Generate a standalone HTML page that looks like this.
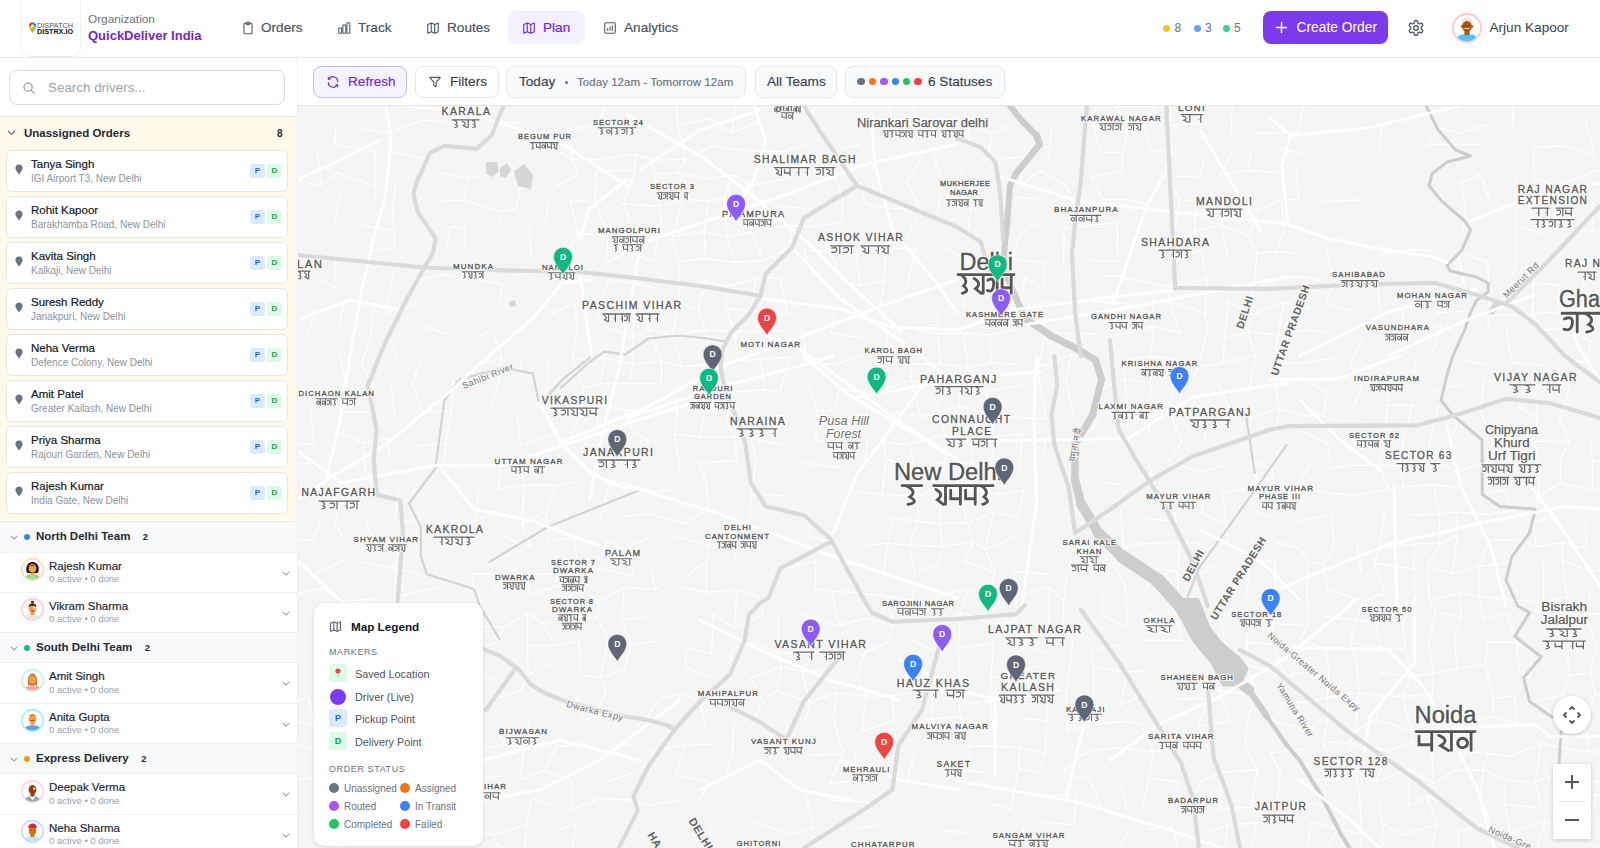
<!DOCTYPE html>
<html><head><meta charset="utf-8"><style>*{box-sizing:border-box;margin:0;padding:0}
html,body{width:1600px;height:848px;overflow:hidden;background:#fff;font-family:"Liberation Sans",sans-serif;color:#111827}
.abs{position:absolute}
#hdr{position:absolute;left:0;top:0;width:1600px;height:58px;background:#fff;border-bottom:1px solid #e5e7eb;z-index:5}
#logo{position:absolute;left:21px;top:-8px;width:60px;height:65px;border:1px solid #f0f1f3;border-radius:10px;background:#fff}
.nav{position:absolute;top:11px;height:33px;border-radius:8px;font-size:13.6px;color:#4b5563;line-height:33px}
.nav svg{position:absolute;top:10px}
.nav span{position:absolute;top:0;-webkit-text-stroke:0.2px currentColor}
#side{position:absolute;left:0;top:58px;width:298px;height:790px;background:#fff;border-right:1px solid #eceef1;overflow:hidden;z-index:6}
#tb{position:absolute;left:297px;top:58px;width:1303px;height:48px;background:#fff;border-bottom:1px solid #e5e7eb;z-index:4}
.btn{position:absolute;top:8px;height:32px;border:1px solid #e5e7eb;border-radius:8px;background:#fff;font-size:13.6px;line-height:30px;color:#374151}
.btn svg{position:absolute;top:8px}
.btn>span{-webkit-text-stroke:0.15px currentColor}
#map{position:absolute;left:297px;top:106px;width:1303px;height:742px;background:#f5f5f5;overflow:hidden}
.card{position:absolute;left:6px;width:282px;height:42px;background:#fff;border:1px solid #e5e7eb;border-radius:6px}
.pin{position:absolute;left:8px;top:13px}
.cn{position:absolute;left:24px;top:7px;font-size:11.5px;color:#111827;-webkit-text-stroke:0.2px #111827}
.ca{position:absolute;left:24px;top:22px;font-size:10px;color:#8b93a1}
.bp,.bd{position:absolute;top:13px;width:15px;height:14px;border-radius:3px;font-size:8px;font-weight:bold;text-align:center;line-height:14px}
.bp{left:243px;background:#dbeafe;color:#2563eb}
.bd{left:260px;background:#dcfce7;color:#16a34a}
.th{position:absolute;left:0;width:297px;height:30.5px;background:#f8fafc;border-top:1px solid #eceef1}
.dot{position:absolute;left:24px;top:12px;width:6px;height:6px;border-radius:50%}
.tn{position:absolute;left:36px;top:8px;font-size:11.5px;font-weight:bold;color:#1f2937}
.tc{position:absolute;left:142px;top:9px;font-size:10px;font-weight:bold;color:#1f2937}
.dr{position:absolute;left:0;width:297px;height:40.2px;background:#fff;border-top:1px solid #eef0f2}
.av{position:absolute;left:20.5px;top:5.5px}
.dn{position:absolute;left:49px;top:7px;font-size:11.5px;color:#1f2937;-webkit-text-stroke:0.2px #1f2937}
.ds{position:absolute;left:49px;top:20.5px;font-size:9.5px;color:#9ca3af}
#legend{position:absolute;left:314px;top:603px;width:169px;height:243px;background:#fff;border-radius:10px;box-shadow:0 1px 4px rgba(0,0,0,0.12);z-index:3}
#legend .t{position:absolute;font-size:10.8px;color:#4b5563}
#legend .h{position:absolute;font-size:9px;color:#6b7280;letter-spacing:0.6px}
#legend .ic{position:absolute;left:15px;width:18px;height:18px;border-radius:3px;font-size:9px;font-weight:bold;text-align:center;line-height:18px}
#legend .sd{position:absolute;width:10px;height:10px;border-radius:50%}
#legend .st{position:absolute;font-size:10px;color:#6b7280}
</style></head><body>
<div id="hdr">
<div id="logo"><svg class="abs" style="left:6px;top:28px" width="48" height="16" viewBox="0 0 48 16"><path d="M4.5 1.5a3.6 3.6 0 0 0-3.6 3.6c0 2.6 3.6 7 3.6 7s3.6-4.4 3.6-7a3.6 3.6 0 0 0-3.6-3.6z" fill="#8bc34a"/><path d="M0.9 5.1a3.6 3.6 0 0 1 3.6-3.6v3.6z" fill="#e53935"/><path d="M4.5 1.5a3.6 3.6 0 0 1 3.6 3.6H4.5z" fill="#1e88e5"/><path d="M0.9 5.1h3.6v3.5L2 8z" fill="#fbc02d"/><circle cx="4.5" cy="5" r="1.4" fill="#fff"/><text x="9" y="6.6" font-family="Liberation Sans" font-size="6.6" fill="#555" textLength="36" lengthAdjust="spacingAndGlyphs">DISPATCH</text><text x="9" y="12.6" font-family="Liberation Sans" font-weight="bold" font-size="6.8" fill="#111" textLength="36" lengthAdjust="spacingAndGlyphs">DISTRX.IO</text></svg></div>
<div class="abs" style="left:88px;top:12px;font-size:11.8px;color:#6b7280">Organization</div>
<div class="abs" style="left:88px;top:28px;font-size:13px;font-weight:bold;color:#6d28d9">QuickDeliver India</div>
<div class="nav" style="left:230px;width:82px"><svg style="left:11px" width="14" height="14" viewBox="0 0 24 24" fill="none" stroke="#4b5563" stroke-width="1.8" stroke-linecap="round" stroke-linejoin="round"><rect x="5" y="4" width="14" height="18" rx="2"/><rect x="9" y="2" width="6" height="4" rx="1"/></svg><span style="left:31px">Orders</span></div>
<div class="nav" style="left:326px;width:76px"><svg style="left:11px" width="14" height="14" viewBox="0 0 24 24" fill="none" stroke="#4b5563" stroke-width="1.8" stroke-linecap="round" stroke-linejoin="round"><rect x="3" y="12" width="5" height="9" rx="1"/><rect x="10" y="7" width="5" height="14" rx="1"/><rect x="17" y="3" width="5" height="18" rx="1"/></svg><span style="left:32px">Track</span></div>
<div class="nav" style="left:415px;width:86px"><svg style="left:11px" width="14" height="14" viewBox="0 0 24 24" fill="none" stroke="#4b5563" stroke-width="1.9" stroke-linejoin="round"><path d="M3 6l6-2.5 6 2.5 6-2.5v15l-6 2.5-6-2.5-6 2.5z"/><path d="M9 3.5v15M15 6v15"/></svg><span style="left:32px">Routes</span></div>
<div class="nav" style="left:508px;width:77px;background:#f4f0ff;color:#6d28d9"><svg style="left:14px" width="14" height="14" viewBox="0 0 24 24" fill="none" stroke="#6d28d9" stroke-width="1.9" stroke-linejoin="round"><path d="M3 6l6-2.5 6 2.5 6-2.5v15l-6 2.5-6-2.5-6 2.5z"/><path d="M9 3.5v15M15 6v15"/></svg><span style="left:35px">Plan</span></div>
<div class="nav" style="left:592px;width:100px"><svg style="left:11px" width="14" height="14" viewBox="0 0 24 24" fill="none" stroke="#4b5563" stroke-width="1.8" stroke-linecap="round" stroke-linejoin="round"><rect x="3" y="3" width="18" height="18" rx="2"/><path d="M8 16v-3M12 16v-6M16 16v-8"/></svg><span style="left:32px">Analytics</span></div>
<div class="abs" style="left:1163px;top:24.5px;width:7px;height:7px;border-radius:50%;background:#fbbf24"></div>
<div class="abs" style="left:1174.5px;top:21px;font-size:12px;color:#6b7280">8</div>
<div class="abs" style="left:1193.5px;top:24.5px;width:7px;height:7px;border-radius:50%;background:#60a5fa"></div>
<div class="abs" style="left:1205.0px;top:21px;font-size:12px;color:#6b7280">3</div>
<div class="abs" style="left:1222.5px;top:24.5px;width:7px;height:7px;border-radius:50%;background:#34d399"></div>
<div class="abs" style="left:1234.0px;top:21px;font-size:12px;color:#6b7280">5</div>
<div class="abs" style="left:1263px;top:11px;width:125px;height:33px;border-radius:8px;background:#7c3aed;color:#fff;font-size:13.8px;line-height:33px"><svg class="abs" style="left:12px;top:10px" width="13" height="13" viewBox="0 0 14 14" fill="none" stroke="#fff" stroke-width="1.6" stroke-linecap="round"><path d="M7 1.5v11M1.5 7h11"/></svg><span class="abs" style="left:33.5px">Create Order</span></div>
<svg class="abs" style="left:1407px;top:19px" width="18" height="18" viewBox="0 0 24 24" fill="none" stroke="#4b5563" stroke-width="1.8" stroke-linejoin="round"><path d="M12.2 2h-.4a2 2 0 0 0-2 2v.2a2 2 0 0 1-1 1.7l-.4.3a2 2 0 0 1-2 0l-.2-.1a2 2 0 0 0-2.7.7l-.2.4a2 2 0 0 0 .7 2.7l.2.1a2 2 0 0 1 1 1.7v.5a2 2 0 0 1-1 1.8l-.2.1a2 2 0 0 0-.7 2.7l.2.4a2 2 0 0 0 2.7.7l.2-.1a2 2 0 0 1 2 0l.4.3a2 2 0 0 1 1 1.7v.2a2 2 0 0 0 2 2h.4a2 2 0 0 0 2-2v-.2a2 2 0 0 1 1-1.7l.4-.3a2 2 0 0 1 2 0l.2.1a2 2 0 0 0 2.7-.7l.2-.4a2 2 0 0 0-.7-2.7l-.2-.1a2 2 0 0 1-1-1.8v-.5a2 2 0 0 1 1-1.7l.2-.1a2 2 0 0 0 .7-2.7l-.2-.4a2 2 0 0 0-2.7-.7l-.2.1a2 2 0 0 1-2 0l-.4-.3a2 2 0 0 1-1-1.7V4a2 2 0 0 0-2-2z"/><circle cx="12" cy="12" r="3"/></svg>
<div class="abs" style="left:1452px;top:12.5px"><svg width="30" height="30" viewBox="0 0 40 40" style="display:block"><defs><clipPath id="chdr"><circle cx="20" cy="20" r="17.6"/></clipPath></defs><circle cx="20" cy="20" r="18.7" fill="#fff" stroke="#fecaca" stroke-width="2.4"/><g clip-path="url(#chdr)"><path d="M5 40 Q6 30 13 28.5 L27 28.5 Q34 30 35 40 Z" fill="#4fc3f7"/><rect x="16.5" y="23" width="7" height="6.5" fill="#b45309"/><path d="M12.5 15 Q12 5.5 20 6 Q28 5.5 27.5 15Z" fill="#e5e7eb"/><ellipse cx="20" cy="18" rx="6.5" ry="7.3" fill="#b45309"/><ellipse cx="13.5" cy="17.5" rx="1.5" ry="2" fill="#b45309"/><ellipse cx="26.5" cy="17.5" rx="1.5" ry="2" fill="#b45309"/><circle cx="17.5" cy="16.5" r="0.9" fill="#333"/><circle cx="22.5" cy="16.5" r="0.9" fill="#333"/><path d="M15.5 21 Q20 19.3 24.5 21 Q20 22.8 15.5 21Z" fill="#f3f4f6"/><path d="M18 22.3 Q20 23.5 22 22.3" stroke="#5b2508" stroke-width="1" fill="none"/></g></svg></div>
<div class="abs" style="left:1489.5px;top:20px;font-size:13.6px;color:#374151">Arjun Kapoor</div>
</div>
<div id="side">
<div class="abs" style="left:9px;top:12px;width:276px;height:35px;border:1px solid #d8dbe0;border-radius:8px">
  <svg class="abs" style="left:12px;top:10px" width="14" height="14" viewBox="0 0 24 24" fill="none" stroke="#9ca3af" stroke-width="2.2" stroke-linecap="round"><circle cx="10.5" cy="10.5" r="7"/><path d="M16 16l5 5"/></svg>
  <span class="abs" style="left:38px;top:9px;font-size:13.4px;color:#9ca3af">Search drivers...</span>
</div>
<div class="abs" style="left:0;top:58px;width:297px;height:1px;background:#e5e7eb"></div>
<div class="abs" style="left:0;top:59px;width:297px;height:404px;background:#fffaea"></div>
<svg class="abs" style="left:7px;top:72px" width="9" height="6" viewBox="0 0 9 6" fill="none" stroke="#6b7280" stroke-width="1.2"><path d="M1 1l3.5 3.5L8 1"/></svg>
<span class="abs" style="left:24px;top:69px;font-size:11.5px;font-weight:bold;color:#1f2937">Unassigned Orders</span>
<span class="abs" style="left:277px;top:70px;font-size:10px;font-weight:bold;color:#1f2937">8</span>
<div class="card" style="top:92px"><svg class="pin" width="8" height="11" viewBox="0 0 8 11"><path d="M4 0.5C1.9 0.5 0.4 2.1 0.4 4.1c0 2.4 3.6 6.4 3.6 6.4s3.6-4 3.6-6.4C7.6 2.1 6.1 0.5 4 0.5z" fill="#6b7280"/></svg><span class="cn">Tanya Singh</span><span class="ca">IGI Airport T3, New Delhi</span><span class="bp">P</span><span class="bd">D</span></div>
<div class="card" style="top:138px"><svg class="pin" width="8" height="11" viewBox="0 0 8 11"><path d="M4 0.5C1.9 0.5 0.4 2.1 0.4 4.1c0 2.4 3.6 6.4 3.6 6.4s3.6-4 3.6-6.4C7.6 2.1 6.1 0.5 4 0.5z" fill="#6b7280"/></svg><span class="cn">Rohit Kapoor</span><span class="ca">Barakhamba Road, New Delhi</span><span class="bp">P</span><span class="bd">D</span></div>
<div class="card" style="top:184px"><svg class="pin" width="8" height="11" viewBox="0 0 8 11"><path d="M4 0.5C1.9 0.5 0.4 2.1 0.4 4.1c0 2.4 3.6 6.4 3.6 6.4s3.6-4 3.6-6.4C7.6 2.1 6.1 0.5 4 0.5z" fill="#6b7280"/></svg><span class="cn">Kavita Singh</span><span class="ca">Kalkaji, New Delhi</span><span class="bp">P</span><span class="bd">D</span></div>
<div class="card" style="top:230px"><svg class="pin" width="8" height="11" viewBox="0 0 8 11"><path d="M4 0.5C1.9 0.5 0.4 2.1 0.4 4.1c0 2.4 3.6 6.4 3.6 6.4s3.6-4 3.6-6.4C7.6 2.1 6.1 0.5 4 0.5z" fill="#6b7280"/></svg><span class="cn">Suresh Reddy</span><span class="ca">Janakpuri, New Delhi</span><span class="bp">P</span><span class="bd">D</span></div>
<div class="card" style="top:276px"><svg class="pin" width="8" height="11" viewBox="0 0 8 11"><path d="M4 0.5C1.9 0.5 0.4 2.1 0.4 4.1c0 2.4 3.6 6.4 3.6 6.4s3.6-4 3.6-6.4C7.6 2.1 6.1 0.5 4 0.5z" fill="#6b7280"/></svg><span class="cn">Neha Verma</span><span class="ca">Defence Colony, New Delhi</span><span class="bp">P</span><span class="bd">D</span></div>
<div class="card" style="top:322px"><svg class="pin" width="8" height="11" viewBox="0 0 8 11"><path d="M4 0.5C1.9 0.5 0.4 2.1 0.4 4.1c0 2.4 3.6 6.4 3.6 6.4s3.6-4 3.6-6.4C7.6 2.1 6.1 0.5 4 0.5z" fill="#6b7280"/></svg><span class="cn">Amit Patel</span><span class="ca">Greater Kailash, New Delhi</span><span class="bp">P</span><span class="bd">D</span></div>
<div class="card" style="top:368px"><svg class="pin" width="8" height="11" viewBox="0 0 8 11"><path d="M4 0.5C1.9 0.5 0.4 2.1 0.4 4.1c0 2.4 3.6 6.4 3.6 6.4s3.6-4 3.6-6.4C7.6 2.1 6.1 0.5 4 0.5z" fill="#6b7280"/></svg><span class="cn">Priya Sharma</span><span class="ca">Rajouri Garden, New Delhi</span><span class="bp">P</span><span class="bd">D</span></div>
<div class="card" style="top:414px"><svg class="pin" width="8" height="11" viewBox="0 0 8 11"><path d="M4 0.5C1.9 0.5 0.4 2.1 0.4 4.1c0 2.4 3.6 6.4 3.6 6.4s3.6-4 3.6-6.4C7.6 2.1 6.1 0.5 4 0.5z" fill="#6b7280"/></svg><span class="cn">Rajesh Kumar</span><span class="ca">India Gate, New Delhi</span><span class="bp">P</span><span class="bd">D</span></div>
<div class="th" style="top:463.0px"><svg class="abs" style="left:10px;top:13px" width="8" height="5" viewBox="0 0 8 5" fill="none" stroke="#9ca3af" stroke-width="1.1"><path d="M0.8 0.8l3.2 3.2 3.2-3.2"/></svg><span class="dot" style="background:#3b82f6"></span><span class="tn">North Delhi Team<span style="margin-left:12.5px;font-size:9.5px">2</span></span></div>
<div class="dr" style="top:493.5px"><div class="av"><svg width="23" height="23" viewBox="0 0 40 40" style="display:block"><defs><clipPath id="c1"><circle cx="20" cy="20" r="17.6"/></clipPath></defs><circle cx="20" cy="20" r="18.7" fill="#fff" stroke="#fed7aa" stroke-width="2.4"/><g clip-path="url(#c1)"><path d="M5 40 Q6 30 13 28.5 L27 28.5 Q34 30 35 40 Z" fill="#86efac"/><rect x="16.5" y="23" width="7" height="6.5" fill="#f59e42"/><path d="M9.5 24 Q7 8 20 6.5 Q33 8 30.5 24 Q28 28 24 26 L16 26 Q12 28 9.5 24Z" fill="#2d1b12"/><ellipse cx="20" cy="18" rx="6.5" ry="7.5" fill="#f59e42"/><path d="M13.5 15 Q20 9 26.5 15 Q20 12 13.5 15Z" fill="#2d1b12"/><ellipse cx="20" cy="22" rx="2.6" ry="1.2" fill="#f9a8a8"/><path d="M11 30 h5 v4 h-5z M24 30 h5 v4 h-5z" fill="#f59e42"/></g></svg></div><span class="dn">Rajesh Kumar</span><span class="ds">0 active • 0 done</span><svg class="abs" style="left:282px;top:18px" width="8" height="5" viewBox="0 0 8 5" fill="none" stroke="#9ca3af" stroke-width="1.1"><path d="M0.8 0.8l3.2 3.2 3.2-3.2"/></svg></div>
<div class="dr" style="top:533.7px"><div class="av"><svg width="23" height="23" viewBox="0 0 40 40" style="display:block"><defs><clipPath id="c2"><circle cx="20" cy="20" r="17.6"/></clipPath></defs><circle cx="20" cy="20" r="18.7" fill="#fff" stroke="#fecaca" stroke-width="2.4"/><g clip-path="url(#c2)"><path d="M5 40 Q6 30 13 28.5 L27 28.5 Q34 30 35 40 Z" fill="#e5e7eb"/><rect x="16.5" y="23" width="7" height="6.5" fill="#f59e42"/><circle cx="20" cy="7.5" r="2.6" fill="#3f2a1d"/><ellipse cx="20" cy="17.5" rx="6.8" ry="8" fill="#f59e42"/><path d="M13.2 15.5 Q13.5 9.5 20 9.5 Q26.5 9.5 26.8 15.5 Q20 11.5 13.2 15.5Z" fill="#3f2a1d"/><circle cx="23" cy="16.5" r="2.2" fill="#e5e7eb"/><ellipse cx="20" cy="22.5" rx="2.4" ry="1.4" fill="#dc2626"/></g></svg></div><span class="dn">Vikram Sharma</span><span class="ds">0 active • 0 done</span><svg class="abs" style="left:282px;top:18px" width="8" height="5" viewBox="0 0 8 5" fill="none" stroke="#9ca3af" stroke-width="1.1"><path d="M0.8 0.8l3.2 3.2 3.2-3.2"/></svg></div>
<div class="th" style="top:573.9px"><svg class="abs" style="left:10px;top:13px" width="8" height="5" viewBox="0 0 8 5" fill="none" stroke="#9ca3af" stroke-width="1.1"><path d="M0.8 0.8l3.2 3.2 3.2-3.2"/></svg><span class="dot" style="background:#10b981"></span><span class="tn">South Delhi Team<span style="margin-left:12.5px;font-size:9.5px">2</span></span></div>
<div class="dr" style="top:604.4px"><div class="av"><svg width="23" height="23" viewBox="0 0 40 40" style="display:block"><defs><clipPath id="c3"><circle cx="20" cy="20" r="17.6"/></clipPath></defs><circle cx="20" cy="20" r="18.7" fill="#fff" stroke="#bbf7d0" stroke-width="2.4"/><g clip-path="url(#c3)"><path d="M5 40 Q6 30 13 28.5 L27 28.5 Q34 30 35 40 Z" fill="#fda4af"/><rect x="16.5" y="23" width="7" height="6.5" fill="#f59e42"/><path d="M12 28 Q10.5 9 20 7.5 Q29.5 9 28 28Z" fill="#c2773a"/><ellipse cx="20" cy="18.5" rx="6" ry="7.5" fill="#f59e42"/><path d="M14 14 Q20 8 26 14 Q20 11 14 14Z" fill="#c2773a"/></g></svg></div><span class="dn">Amit Singh</span><span class="ds">0 active • 0 done</span><svg class="abs" style="left:282px;top:18px" width="8" height="5" viewBox="0 0 8 5" fill="none" stroke="#9ca3af" stroke-width="1.1"><path d="M0.8 0.8l3.2 3.2 3.2-3.2"/></svg></div>
<div class="dr" style="top:644.6px"><div class="av"><svg width="23" height="23" viewBox="0 0 40 40" style="display:block"><defs><clipPath id="c4"><circle cx="20" cy="20" r="17.6"/></clipPath></defs><circle cx="20" cy="20" r="18.7" fill="#fff" stroke="#99f6e4" stroke-width="2.4"/><g clip-path="url(#c4)"><path d="M5 40 Q6 30 13 28.5 L27 28.5 Q34 30 35 40 Z" fill="#60a5fa"/><rect x="16.5" y="23" width="7" height="6.5" fill="#f59e42"/><ellipse cx="20" cy="17" rx="6.8" ry="8.2" fill="#f59e42"/><path d="M14 12 Q20 7 26 12 Q20 10 14 12Z" fill="#b45309"/><path d="M16.5 20.5 Q20 19 23.5 20.5" stroke="#7c2d12" stroke-width="1.4" fill="none"/></g></svg></div><span class="dn">Anita Gupta</span><span class="ds">0 active • 0 done</span><svg class="abs" style="left:282px;top:18px" width="8" height="5" viewBox="0 0 8 5" fill="none" stroke="#9ca3af" stroke-width="1.1"><path d="M0.8 0.8l3.2 3.2 3.2-3.2"/></svg></div>
<div class="th" style="top:684.8px"><svg class="abs" style="left:10px;top:13px" width="8" height="5" viewBox="0 0 8 5" fill="none" stroke="#9ca3af" stroke-width="1.1"><path d="M0.8 0.8l3.2 3.2 3.2-3.2"/></svg><span class="dot" style="background:#f59e0b"></span><span class="tn">Express Delivery<span style="margin-left:12.5px;font-size:9.5px">2</span></span></div>
<div class="dr" style="top:715.3px"><div class="av"><svg width="23" height="23" viewBox="0 0 40 40" style="display:block"><defs><clipPath id="c5"><circle cx="20" cy="20" r="17.6"/></clipPath></defs><circle cx="20" cy="20" r="18.7" fill="#fff" stroke="#fbcfe8" stroke-width="2.4"/><g clip-path="url(#c5)"><path d="M5 40 Q6 30 13 28.5 L27 28.5 Q34 30 35 40 Z" fill="#9ca3af"/><rect x="16.5" y="23" width="7" height="6.5" fill="#92400e"/><ellipse cx="20" cy="17" rx="6.8" ry="8.2" fill="#92400e"/><circle cx="23" cy="15" r="2" fill="#e5e7eb"/><path d="M15 28.5 L20 35 L25 28.5Z" fill="#fff"/></g></svg></div><span class="dn">Deepak Verma</span><span class="ds">0 active • 0 done</span><svg class="abs" style="left:282px;top:18px" width="8" height="5" viewBox="0 0 8 5" fill="none" stroke="#9ca3af" stroke-width="1.1"><path d="M0.8 0.8l3.2 3.2 3.2-3.2"/></svg></div>
<div class="dr" style="top:755.5px"><div class="av"><svg width="23" height="23" viewBox="0 0 40 40" style="display:block"><defs><clipPath id="c6"><circle cx="20" cy="20" r="17.6"/></clipPath></defs><circle cx="20" cy="20" r="18.7" fill="#fff" stroke="#c7d2fe" stroke-width="2.4"/><g clip-path="url(#c6)"><path d="M5 40 Q6 30 13 28.5 L27 28.5 Q34 30 35 40 Z" fill="#bae6fd"/><rect x="16.5" y="23" width="7" height="6.5" fill="#d97706"/><ellipse cx="20" cy="18.5" rx="6.5" ry="7.5" fill="#d97706"/><path d="M12.5 14 Q13 6 20 6 Q27 6 27.5 14Z" fill="#e11d48"/><path d="M14.5 17.5 h4 M21.5 17.5 h4" stroke="#374151" stroke-width="1.2"/></g></svg></div><span class="dn">Neha Sharma</span><span class="ds">0 active • 0 done</span><svg class="abs" style="left:282px;top:18px" width="8" height="5" viewBox="0 0 8 5" fill="none" stroke="#9ca3af" stroke-width="1.1"><path d="M0.8 0.8l3.2 3.2 3.2-3.2"/></svg></div>
</div>
<div id="tb">
<div class="btn" style="left:16px;width:94px;background:#f5f3ff;border-color:#c9b8fb;color:#6d28d9"><svg style="left:12px" width="14" height="14" viewBox="0 0 24 24" fill="none" stroke="#6d28d9" stroke-width="2" stroke-linecap="round" stroke-linejoin="round"><path d="M20 11a8 8 0 0 0-14.6-4.5M4 4v3h3"/><path d="M4 13a8 8 0 0 0 14.6 4.5M20 20v-3h-3"/></svg><span class="abs" style="left:34px">Refresh</span></div>
<div class="btn" style="left:118px;width:84px"><svg style="left:12px" width="14" height="14" viewBox="0 0 24 24" fill="none" stroke="#4b5563" stroke-width="1.9" stroke-linejoin="round"><path d="M3 4h18l-7 8.5V20l-4-2v-5.5z"/></svg><span class="abs" style="left:34px">Filters</span></div>
<div class="btn" style="left:209px;width:240px;background:#f9fafb"><span class="abs" style="left:12px">Today</span><span class="abs" style="left:57.5px;top:14px;width:3px;height:3px;border-radius:50%;background:#6b7280"></span><span class="abs" style="left:70px;font-size:11.6px;color:#6b7280">Today 12am - Tomorrow 12am</span></div>
<div class="btn" style="left:458px;width:82px;background:#f9fafb"><span class="abs" style="left:11px">All Teams</span></div>
<div class="btn" style="left:548px;width:160px;background:#f9fafb"><span class="abs" style="left:11px;top:10.5px;width:7.5px;height:7.5px;border-radius:50%;background:#6b7280"></span><span class="abs" style="left:22.5px;top:10.5px;width:7.5px;height:7.5px;border-radius:50%;background:#f97316"></span><span class="abs" style="left:34px;top:10.5px;width:7.5px;height:7.5px;border-radius:50%;background:#a855f7"></span><span class="abs" style="left:45.5px;top:10.5px;width:7.5px;height:7.5px;border-radius:50%;background:#3b82f6"></span><span class="abs" style="left:56.5px;top:10.5px;width:7.5px;height:7.5px;border-radius:50%;background:#22c55e"></span><span class="abs" style="left:68px;top:10.5px;width:7.5px;height:7.5px;border-radius:50%;background:#ef4444"></span><span class="abs" style="left:82px">6 Statuses</span></div>
</div>
<div id="map"><svg width="1303" height="742" viewBox="297 106 1303 742" style="position:absolute;left:0;top:0"><rect x="297" y="106" width="1303" height="742" fill="#f5f5f5"/><path d="M282.9 178.1L321.4 185.1M297.6 352.7L295.7 382.6M286.9 443.1L314.3 443.9M286.9 443.1L284.9 465.3M284.9 465.3L309.3 463.2M292.2 488.0L316.8 496.1M292.2 488.0L290.8 509.0M283.0 537.3L312.5 540.6M287.0 595.4L323.3 588.4M285.9 673.2L290.4 704.0M290.4 704.0L308.1 696.7M293.7 720.6L313.9 725.1M297.7 743.9L323.2 753.0M297.7 743.9L288.7 780.1M288.7 780.1L316.2 777.9M288.7 780.1L284.4 801.8M294.2 855.2L322.0 858.8M322.0 97.0L340.3 98.4M317.3 151.3L321.4 185.1M321.4 185.1L337.3 172.6M321.2 278.6L334.4 288.0M314.2 310.7L308.4 333.4M310.1 408.0L314.3 443.9M321.1 521.8L312.5 540.6M313.7 574.1L342.7 560.4M323.3 588.4L342.4 601.7M310.8 615.7L347.8 623.1M308.1 696.7L313.9 725.1M313.9 725.1L339.3 719.6M323.2 753.0L347.0 757.8M316.2 777.9L347.6 780.9M316.2 777.9L318.8 794.9M318.8 794.9L347.1 805.8M340.3 98.4L360.4 96.5M335.7 128.1L335.0 145.1M335.0 145.1L375.3 151.2M337.3 172.6L375.0 185.8M339.4 196.8L334.0 224.4M335.6 253.8L334.4 288.0M343.8 302.4L338.0 331.6M339.8 354.0L347.6 393.9M341.5 411.7L372.0 411.6M335.4 431.6L362.9 442.6M347.3 484.6L334.4 523.2M334.4 523.2L342.5 536.3M342.4 601.7L374.5 598.9M342.4 601.7L347.8 623.1M338.2 643.9L336.7 676.4M339.3 719.6L375.5 726.4M339.3 719.6L347.0 757.8M347.0 757.8L368.4 756.9M347.6 780.9L347.1 805.8M347.1 805.8L337.6 828.3M339.7 846.5L363.8 855.4M364.1 129.1L388.1 132.6M375.3 151.2L375.0 185.8M375.0 185.8L375.3 201.8M363.5 225.6L394.0 230.5M363.1 251.3L394.4 248.3M373.4 307.7L370.4 338.8M370.4 338.8L361.4 362.6M361.4 362.6L374.6 390.5M362.9 442.6L387.7 439.0M362.9 442.6L365.3 468.8M365.3 468.8L375.5 488.3M366.4 523.1L371.6 536.7M371.6 536.7L400.6 541.1M362.0 562.4L395.8 568.1M374.5 598.9L362.3 625.2M362.3 625.2L375.7 648.5M365.6 672.8L362.1 690.2M362.1 690.2L375.5 726.4M375.5 726.4L395.0 731.1M375.5 726.4L368.4 756.9M366.9 781.9L373.2 797.4M390.1 98.7L414.5 103.5M388.1 132.6L422.6 120.3M388.1 132.6L391.7 151.3M391.7 151.3L426.1 159.5M395.3 184.5L392.7 210.7M392.7 210.7L394.0 230.5M394.0 230.5L394.4 248.3M393.0 276.9L386.1 312.8M386.1 312.8L415.1 305.1M388.8 333.6L397.6 360.9M391.2 386.3L394.9 416.5M387.7 439.0L390.0 460.4M398.4 490.1L395.0 520.2M395.0 520.2L412.6 520.5M400.6 541.1L395.8 568.1M395.8 568.1L418.8 574.6M395.8 568.1L394.2 597.1M394.2 597.1L425.1 590.1M394.2 597.1L393.2 620.5M393.2 620.5L414.4 626.7M399.4 744.2L422.2 754.8M387.2 797.9L413.1 807.8M387.2 830.7L419.3 825.4M387.2 830.7L398.5 860.4M422.6 120.3L446.4 121.8M420.2 279.4L443.6 274.3M423.6 326.3L449.7 334.8M420.9 359.0L412.3 383.3M412.3 383.3L422.0 412.2M422.0 412.2L451.1 410.9M413.0 445.8L445.9 443.4M425.1 590.1L438.9 588.1M414.4 626.7L421.1 649.2M413.4 664.9L423.0 696.8M423.0 696.8L413.2 731.0M413.2 731.0L442.5 719.9M413.3 781.7L413.1 807.8M413.1 807.8L442.2 809.4M420.8 860.8L441.9 861.5M442.3 94.1L469.0 97.7M442.3 94.1L446.4 121.8M438.8 173.2L467.2 178.1M443.0 200.9L464.1 200.2M450.2 226.6L465.4 228.4M450.2 226.6L446.0 250.8M443.6 274.3L468.9 277.7M453.0 379.7L451.1 410.9M451.1 410.9L445.9 443.4M445.9 443.4L444.3 464.1M444.3 464.1L464.7 469.4M443.5 521.3L475.7 521.0M449.3 544.2L466.2 542.4M442.1 640.6L474.9 649.1M453.6 828.8L476.8 832.0M467.2 178.1L501.7 173.3M467.2 178.1L464.1 200.2M464.1 200.2L501.8 211.6M465.4 228.4L464.7 248.4M468.9 277.7L502.3 283.9M476.0 336.5L492.4 330.1M475.5 366.1L501.9 356.9M478.3 492.0L475.7 521.0M475.7 521.0L497.5 509.9M472.1 573.4L505.7 575.0M472.1 573.4L476.9 599.2M473.3 626.3L503.1 627.5M474.9 649.1L497.2 642.3M474.9 649.1L467.7 664.5M467.7 664.5L493.4 679.1M467.7 664.5L466.1 695.8M465.7 729.4L472.9 752.0M472.9 752.0L505.2 744.1M474.0 778.9L503.1 776.1M474.0 778.9L471.8 794.1M471.8 794.1L476.8 832.0M476.8 832.0L493.7 834.4M500.5 93.1L501.8 122.0M501.8 122.0L523.2 122.8M501.8 211.6L516.0 208.0M501.8 211.6L497.9 228.1M502.3 283.9L500.3 301.2M492.4 330.1L501.9 356.9M501.9 356.9L499.1 378.2M499.1 378.2L491.0 408.3M500.8 460.7L520.0 460.3M500.8 460.7L498.3 489.4M498.3 489.4L524.2 485.0M504.3 537.2L530.1 547.0M505.7 575.0L526.1 574.6M505.7 575.0L490.3 593.3M503.1 627.5L527.5 612.8M503.1 627.5L497.2 642.3M493.4 699.3L520.6 690.8M492.3 724.4L505.2 744.1M505.2 744.1L523.6 747.5M493.7 834.4L526.5 824.8M493.7 834.4L497.8 846.4M497.8 846.4L524.9 852.3M521.1 183.4L516.0 208.0M529.4 223.9L530.8 259.4M521.8 358.8L520.4 378.8M517.6 417.4L520.6 445.0M520.6 445.0L557.5 432.0M520.0 460.3L524.2 485.0M524.2 485.0L555.8 485.5M524.2 485.0L522.0 523.3M522.0 523.3L546.3 512.0M522.0 523.3L530.1 547.0M526.1 574.6L557.3 573.6M526.1 574.6L531.1 594.8M531.1 594.8L556.0 586.3M527.5 612.8L542.5 623.4M527.5 612.8L527.7 645.2M527.7 645.2L556.3 645.6M527.7 645.2L528.0 674.3M528.0 674.3L551.4 664.0M528.0 674.3L520.6 690.8M530.8 718.0L523.6 747.5M523.6 747.5L520.8 779.8M520.8 779.8L543.7 770.5M531.6 798.2L550.4 804.9M531.6 798.2L526.5 824.8M526.5 824.8L524.9 852.3M544.7 94.6L575.3 100.8M550.0 147.5L571.7 158.7M556.5 185.9L578.3 174.9M549.2 198.2L545.1 223.5M551.1 314.2L574.2 303.6M548.6 360.4L548.0 383.4M548.0 383.4L543.0 408.4M543.0 408.4L557.5 432.0M555.8 485.5L572.9 482.3M555.8 485.5L546.3 512.0M546.3 512.0L548.4 541.1M548.4 541.1L574.7 538.1M557.3 573.6L578.7 574.8M557.3 573.6L556.0 586.3M556.0 586.3L571.6 586.5M542.5 623.4L573.4 618.7M542.5 623.4L556.3 645.6M556.3 645.6L578.9 641.2M557.6 746.0L581.1 745.7M557.6 746.0L543.7 770.5M543.7 770.5L571.5 780.2M557.1 831.5L575.9 823.0M552.4 858.2L571.6 852.7M568.6 130.5L596.3 124.3M568.6 130.5L571.7 158.7M571.7 158.7L597.4 159.6M571.7 158.7L578.3 174.9M570.0 200.0L595.0 202.3M570.0 200.0L578.2 233.2M578.2 233.2L608.4 236.1M578.2 233.2L569.8 249.1M569.8 249.1L576.4 283.3M574.2 303.6L577.6 326.2M577.6 326.2L572.8 359.4M572.8 359.4L604.6 358.1M572.8 359.4L583.3 388.3M583.3 388.3L600.0 383.3M583.3 388.3L582.1 411.6M582.1 411.6L596.7 404.0M582.1 411.6L571.8 434.0M574.7 538.1L578.7 574.8M578.7 574.8L594.8 567.6M578.7 574.8L571.6 586.5M571.6 586.5L600.0 600.7M571.6 586.5L573.4 618.7M573.4 618.7L597.1 617.8M578.9 641.2L580.8 675.8M580.8 675.8L600.6 677.0M576.1 693.3L583.5 721.0M583.5 721.0L594.6 717.0M571.5 780.2L572.7 809.2M572.7 809.2L599.4 798.4M575.9 823.0L571.6 852.7M604.6 107.2L625.1 96.4M604.6 107.2L596.3 124.3M597.4 159.6L634.7 154.1M596.3 170.8L635.1 170.4M596.3 170.8L595.0 202.3M595.0 202.3L608.4 236.1M608.4 236.1L635.3 237.3M608.4 236.1L605.7 264.0M605.7 264.0L626.2 252.0M608.9 279.3L626.9 281.9M608.9 279.3L597.0 315.0M597.0 315.0L634.8 302.9M597.0 315.0L605.9 326.5M605.9 326.5L632.8 337.8M604.6 358.1L633.2 364.4M604.6 358.1L600.0 383.3M600.0 383.3L629.7 383.2M596.7 404.0L625.1 409.8M596.7 404.0L598.5 435.6M609.4 485.3L624.0 483.0M609.4 485.3L599.7 521.1M607.2 540.9L625.2 549.7M607.2 540.9L594.8 567.6M594.8 567.6L634.1 575.8M600.0 600.7L624.2 587.3M600.0 600.7L597.1 617.8M597.1 617.8L608.4 638.5M608.4 638.5L600.6 677.0M600.6 677.0L623.7 670.7M600.6 677.0L606.3 690.7M606.3 690.7L594.6 717.0M608.7 746.1L630.6 743.9M606.0 782.4L633.5 772.7M599.4 798.4L629.1 800.0M598.2 857.5L624.0 849.9M634.7 154.1L652.3 159.9M634.7 154.1L635.1 170.4M635.1 170.4L623.7 203.6M623.7 203.6L658.9 206.5M623.7 203.6L635.3 237.3M635.3 237.3L661.9 223.6M635.3 237.3L626.2 252.0M626.2 252.0L653.6 261.1M626.9 281.9L659.4 288.6M634.8 302.9L632.8 337.8M632.8 337.8L647.9 329.0M632.8 337.8L633.2 364.4M633.2 364.4L661.6 361.3M633.2 364.4L629.7 383.2M629.7 383.2L660.9 384.0M625.1 409.8L659.9 411.2M625.1 409.8L632.5 431.3M632.5 431.3L650.2 442.4M624.0 483.0L655.5 491.9M620.5 516.8L649.5 513.9M625.2 549.7L648.3 537.3M625.2 549.7L634.1 575.8M624.2 587.3L656.4 589.3M624.2 587.3L621.5 620.0M621.5 620.0L646.2 617.2M621.5 620.0L631.4 645.2M631.4 645.2L656.9 641.0M631.4 645.2L623.7 670.7M629.1 800.0L648.6 805.1M648.5 106.1L677.0 101.1M652.3 159.9L685.8 159.9M652.3 159.9L654.1 173.7M654.1 173.7L677.8 173.2M654.1 173.7L658.9 206.5M658.9 206.5L683.6 199.3M658.9 206.5L661.9 223.6M661.9 223.6L653.6 261.1M646.6 304.7L647.9 329.0M647.9 329.0L672.2 334.8M647.9 329.0L661.6 361.3M661.6 361.3L682.3 366.6M661.6 361.3L660.9 384.0M659.9 411.2L677.9 412.1M655.5 491.9L673.7 489.8M649.5 513.9L684.9 523.5M650.1 569.6L656.4 589.3M658.7 698.8L684.6 693.6M658.7 698.8L647.0 717.6M647.0 717.6L678.5 729.5M652.3 750.8L685.3 744.9M652.3 750.8L656.2 769.5M648.6 805.1L680.3 800.1M677.0 101.1L677.7 124.7M677.7 124.7L710.1 118.6M677.7 124.7L685.8 159.9M685.8 159.9L711.4 145.9M685.8 159.9L677.8 173.2M677.8 173.2L707.6 178.8M683.6 199.3L708.0 200.9M683.6 199.3L672.1 236.4M672.1 236.4L704.7 231.3M672.1 236.4L678.8 261.1M678.8 261.1L704.8 258.5M678.8 261.1L678.5 288.1M678.5 288.1L705.1 281.0M678.5 288.1L679.4 302.6M679.4 302.6L698.4 309.9M679.4 302.6L672.2 334.8M672.2 334.8L705.8 329.8M672.2 334.8L682.3 366.6M682.3 366.6L710.2 364.5M673.4 388.0L705.3 380.9M673.4 388.0L677.9 412.1M677.9 412.1L674.3 434.5M674.3 434.5L700.1 436.9M674.3 434.5L680.3 470.8M684.9 523.5L708.2 509.3M675.2 536.0L709.7 546.4M687.1 575.6L706.2 560.9M679.7 586.9L706.1 592.0M686.5 647.9L711.7 653.9M686.5 647.9L685.2 666.6M685.2 666.6L709.7 677.0M684.6 693.6L701.1 705.7M685.3 744.9L712.7 744.6M685.3 744.9L675.5 774.4M675.5 774.4L710.6 782.9M683.6 860.4L712.3 850.4M698.7 101.0L737.1 94.3M710.1 118.6L732.0 132.7M711.4 145.9L727.3 148.2M707.6 178.8L732.1 175.1M708.0 200.9L724.6 198.9M708.0 200.9L704.7 231.3M704.7 231.3L726.6 237.0M704.7 231.3L704.8 258.5M704.8 258.5L734.9 262.3M705.1 281.0L726.7 286.6M705.1 281.0L698.4 309.9M698.4 309.9L705.8 329.8M705.8 329.8L734.2 331.8M705.8 329.8L710.2 364.5M710.2 364.5L738.0 360.9M710.2 364.5L705.3 380.9M705.3 380.9L733.3 392.1M705.3 380.9L705.6 405.7M705.6 405.7L700.1 436.9M700.1 436.9L734.1 436.3M699.5 463.1L736.8 460.2M699.5 463.1L706.2 482.7M706.2 482.7L708.2 509.3M709.7 546.4L731.1 536.8M709.7 546.4L706.2 560.9M706.2 560.9L706.1 592.0M706.1 592.0L737.1 590.1M713.2 614.2L734.2 627.7M713.2 614.2L711.7 653.9M701.1 705.7L724.5 692.4M701.1 705.7L705.9 731.3M710.6 782.9L699.0 799.6M710.1 822.5L712.3 850.4M737.1 94.3L753.6 101.3M737.1 94.3L732.0 132.7M732.0 132.7L759.4 121.3M727.3 148.2L760.0 151.6M732.1 175.1L752.2 185.0M732.1 175.1L724.6 198.9M724.6 198.9L753.9 198.4M724.6 198.9L726.6 237.0M726.6 237.0L751.5 232.2M726.6 237.0L734.9 262.3M734.9 262.3L763.9 260.5M726.7 286.6L756.4 278.2M726.7 286.6L725.8 308.5M725.8 308.5L750.2 310.3M725.8 308.5L734.2 331.8M734.2 331.8L759.0 331.6M734.2 331.8L738.0 360.9M738.0 360.9L760.3 359.1M733.3 392.1L765.0 389.7M733.3 392.1L725.7 419.9M725.7 419.9L754.0 418.5M725.7 419.9L734.1 436.3M734.1 436.3L750.7 438.5M734.1 436.3L736.8 460.2M731.1 536.8L765.1 536.3M731.1 536.8L735.9 560.8M737.1 590.1L758.1 596.3M737.1 590.1L734.2 627.7M734.2 627.7L763.0 614.8M733.4 648.6L755.0 642.8M733.4 648.6L729.0 664.0M733.9 722.9L732.2 756.3M732.2 756.3L726.1 771.6M725.7 851.7L755.4 858.0M753.6 101.3L759.4 121.3M760.0 151.6L784.9 151.0M752.2 185.0L788.6 178.4M752.2 185.0L753.9 198.4M753.9 198.4L780.2 206.3M753.9 198.4L751.5 232.2M751.5 232.2L791.4 225.5M751.5 232.2L763.9 260.5M763.9 260.5L790.1 248.2M756.4 278.2L780.2 277.8M756.4 278.2L750.2 310.3M750.2 310.3L787.9 315.1M750.2 310.3L759.0 331.6M759.0 331.6L787.9 331.2M760.3 359.1L790.1 357.3M760.3 359.1L765.0 389.7M765.0 389.7L779.8 392.5M754.0 418.5L786.1 415.1M754.0 418.5L750.7 438.5M750.7 438.5L786.6 445.7M750.7 438.5L756.5 459.8M756.5 459.8L750.9 494.5M750.9 494.5L787.2 495.7M750.9 494.5L750.2 516.8M758.1 596.3L763.0 614.8M755.0 642.8L777.7 652.9M750.8 678.2L781.5 666.3M750.8 678.2L762.5 701.4M762.5 701.4L776.5 690.7M762.5 701.4L750.1 729.5M753.7 820.6L789.1 834.3M784.9 151.0L803.8 144.6M784.9 151.0L788.6 178.4M780.2 206.3L812.1 209.2M791.4 225.5L812.1 226.6M791.4 225.5L790.1 248.2M780.2 277.8L787.9 315.1M790.1 357.3L779.8 392.5M779.4 570.0L815.8 561.5M778.3 612.4L777.7 652.9M777.7 652.9L814.2 653.6M777.7 652.9L781.5 666.3M781.5 666.3L802.1 671.9M781.5 666.3L776.5 690.7M776.5 690.7L809.9 702.7M787.1 726.1L787.2 753.8M789.1 834.3L813.2 828.0M777.1 859.9L803.8 856.2M816.6 107.1L803.7 121.3M812.1 226.6L842.2 222.4M803.6 249.6L831.3 252.2M803.6 249.6L814.1 277.3M802.3 330.1L806.5 363.5M806.5 363.5L836.5 364.1M807.9 383.1L817.4 412.1M817.4 412.1L833.6 409.2M817.4 412.1L815.6 439.9M815.6 439.9L830.5 443.5M802.5 462.6L838.6 467.9M807.5 519.3L810.6 537.5M810.6 537.5L830.0 541.4M815.8 561.5L815.1 588.7M815.1 588.7L831.1 590.8M802.0 615.2L839.3 625.5M814.2 653.6L802.1 671.9M802.1 671.9L832.0 669.2M802.1 671.9L809.9 702.7M809.9 702.7L836.4 692.6M809.9 702.7L805.0 723.9M807.6 755.3L843.6 753.7M806.5 797.4L813.2 828.0M803.8 856.2L839.7 853.0M829.3 104.6L857.1 102.2M838.0 149.7L860.2 144.5M834.4 176.3L842.2 197.4M842.2 197.4L842.2 222.4M831.3 252.2L842.4 282.0M842.4 282.0L860.5 285.9M834.1 314.1L831.7 333.4M831.7 333.4L863.2 338.0M836.5 364.1L860.7 355.7M840.0 388.3L865.6 392.1M840.0 388.3L833.6 409.2M830.5 443.5L838.6 467.9M842.2 563.8L864.1 564.0M831.1 590.8L860.8 593.3M831.1 590.8L839.3 625.5M839.3 625.5L863.9 618.5M836.4 692.6L866.5 696.2M836.4 692.6L833.2 719.0M833.2 719.0L843.6 753.7M843.6 753.7L829.6 783.4M829.6 783.4L856.6 780.5M829.6 800.1L869.0 802.3M839.7 853.0L862.7 857.5M857.1 102.2L888.2 102.2M860.4 182.7L865.1 204.0M865.1 204.0L886.3 208.2M864.1 229.4L856.3 257.7M856.3 257.7L860.5 285.9M860.5 285.9L884.4 280.4M865.6 392.1L866.4 415.2M867.6 440.9L864.3 463.3M859.0 492.1L882.1 494.4M866.5 545.4L887.5 543.0M860.8 593.3L885.7 596.2M863.9 618.5L893.1 625.1M864.8 652.9L887.5 642.7M864.8 652.9L856.9 674.5M856.9 674.5L866.5 696.2M866.5 696.2L893.3 695.7M866.5 696.2L861.8 731.6M861.8 731.6L893.6 720.3M854.6 750.7L856.6 780.5M856.6 780.5L886.8 771.0M855.6 829.2L884.5 823.9M888.2 102.2L912.9 102.2M888.2 102.2L893.3 126.3M886.3 208.2L920.5 208.5M885.7 248.9L916.1 248.2M885.7 248.9L884.4 280.4M884.4 280.4L880.2 306.7M880.2 306.7L886.7 337.2M886.7 337.2L907.6 328.3M886.7 337.2L885.6 356.2M885.6 356.2L909.7 364.4M883.6 389.9L911.5 380.4M895.0 412.4L920.5 416.7M895.0 412.4L883.5 442.8M883.5 442.8L908.7 444.3M883.5 442.8L886.3 459.4M886.3 459.4L915.7 468.5M886.3 459.4L882.1 494.4M882.1 494.4L916.7 496.3M893.0 518.1L918.6 521.4M893.0 518.1L887.5 543.0M887.5 543.0L909.2 545.1M887.5 543.0L883.6 575.4M885.7 596.2L913.0 600.1M885.7 596.2L893.1 625.1M893.1 625.1L887.5 642.7M893.3 695.7L913.5 692.3M893.3 695.7L893.6 720.3M912.9 102.2L916.5 123.8M920.9 157.7L906.9 183.2M906.9 183.2L920.5 208.5M920.5 208.5L908.2 235.3M916.1 248.2L906.2 289.2M907.6 328.3L937.9 333.6M909.7 364.4L940.4 364.3M909.7 364.4L911.5 380.4M911.5 380.4L935.4 385.0M911.5 380.4L920.5 416.7M920.5 416.7L938.8 412.9M908.7 444.3L945.2 434.7M908.7 444.3L915.7 468.5M915.7 468.5L945.2 462.5M915.7 468.5L916.7 496.3M916.7 496.3L940.1 486.3M916.7 496.3L918.6 521.4M918.6 521.4L940.1 523.6M918.6 521.4L909.2 545.1M909.2 545.1L942.5 546.7M909.2 545.1L914.5 571.9M914.5 571.9L937.3 565.1M914.5 571.9L913.0 600.1M909.7 640.2L932.6 649.6M913.9 724.0L932.1 719.0M914.6 755.8L906.1 781.5M947.4 93.2L968.9 95.4M932.5 153.8L942.9 184.9M942.9 184.9L937.3 211.7M946.4 248.5L971.2 260.6M937.4 313.8L937.9 333.6M937.9 333.6L963.1 332.9M937.9 333.6L940.4 364.3M940.4 364.3L968.3 366.9M935.4 385.0L938.8 412.9M938.8 412.9L958.6 405.9M938.8 412.9L945.2 434.7M945.2 434.7L945.2 462.5M945.2 462.5L972.7 463.1M945.2 462.5L940.1 486.3M940.1 486.3L958.2 488.2M940.1 486.3L940.1 523.6M940.1 523.6L967.5 523.0M940.1 523.6L942.5 546.7M942.5 546.7L973.7 541.6M942.5 546.7L937.3 565.1M936.8 595.4L968.3 589.4M936.8 595.4L942.2 624.5M942.2 624.5L960.4 612.2M946.2 672.7L932.8 694.8M932.8 694.8L932.1 719.0M932.1 719.0L960.1 716.3M941.9 830.0L969.4 833.7M968.7 125.3L991.4 132.9M968.7 125.3L970.2 145.6M960.9 170.6L970.4 210.6M970.4 210.6L984.2 206.4M970.4 210.6L968.5 227.9M971.2 260.6L989.0 259.7M971.2 260.6L967.0 278.1M967.0 278.1L962.8 306.7M963.1 332.9L989.9 335.2M963.1 332.9L968.3 366.9M968.3 366.9L991.0 362.8M968.3 366.9L958.9 387.1M958.9 387.1L986.3 390.8M958.9 387.1L958.6 405.9M958.6 405.9L989.8 414.3M958.6 405.9L971.0 439.2M971.0 439.2L972.7 463.1M972.7 463.1L958.2 488.2M958.2 488.2L999.1 494.6M958.2 488.2L967.5 523.0M967.5 523.0L993.1 512.7M967.5 523.0L973.7 541.6M973.7 541.6L985.0 549.6M973.7 541.6L964.6 561.6M964.6 561.6L995.3 573.2M968.3 589.4L989.3 595.7M968.3 589.4L960.4 612.2M960.4 612.2L999.6 625.3M960.4 612.2L958.1 648.9M958.1 648.9L993.6 642.9M958.1 648.9L959.9 679.5M959.9 679.5L959.4 703.9M959.4 703.9L990.0 701.0M959.4 703.9L960.1 716.3M960.1 716.3L993.6 730.3M960.1 716.3L969.5 745.9M969.5 745.9L996.9 746.5M969.5 745.9L969.7 771.0M969.7 771.0L984.0 772.2M994.1 103.3L1023.0 105.9M991.4 132.9L1019.2 122.4M991.4 132.9L988.1 159.4M988.1 159.4L1023.6 156.9M989.0 259.7L986.7 287.8M991.8 301.0L1019.7 310.8M989.9 335.2L1017.4 329.3M989.9 335.2L991.0 362.8M991.0 362.8L1014.1 364.0M986.3 390.8L1022.7 385.4M986.3 390.8L989.8 414.3M989.8 414.3L1011.4 416.9M989.8 414.3L994.1 436.7M994.1 436.7L1022.4 433.7M994.1 436.7L990.2 468.6M990.2 468.6L999.1 494.6M999.1 494.6L1024.2 490.3M993.1 512.7L1017.6 517.4M993.1 512.7L985.0 549.6M985.0 549.6L1013.0 537.1M985.0 549.6L995.3 573.2M995.3 573.2L989.3 595.7M989.3 595.7L1015.8 595.0M989.3 595.7L999.6 625.3M999.6 625.3L1016.4 620.3M993.6 642.9L990.9 678.2M990.9 678.2L1026.0 670.0M990.9 678.2L990.0 701.0M990.0 701.0L1011.7 700.1M990.0 701.0L993.6 730.3M993.6 730.3L996.9 746.5M996.9 746.5L1019.6 747.5M990.8 803.4L1010.5 809.8M984.7 859.3L1019.1 850.2M1023.6 156.9L1021.0 184.6M1021.0 184.6L1040.1 170.6M1015.5 197.4L1039.2 198.9M1018.9 234.8L1037.3 222.8M1018.9 234.8L1013.2 260.0M1013.2 260.0L1044.9 261.9M1024.9 277.7L1043.3 289.2M1024.9 277.7L1019.7 310.8M1019.7 310.8L1050.6 301.0M1019.7 310.8L1017.4 329.3M1011.4 416.9L1046.3 419.3M1022.4 433.7L1019.3 470.4M1024.2 490.3L1017.6 517.4M1012.9 571.2L1050.4 574.5M1012.9 571.2L1015.8 595.0M1015.8 595.0L1049.4 586.8M1015.8 595.0L1016.4 620.3M1012.4 638.7L1046.3 653.8M1012.4 638.7L1026.0 670.0M1026.0 670.0L1036.9 666.3M1022.6 718.5L1046.8 720.8M1019.6 747.5L1045.5 754.1M1019.6 747.5L1018.3 768.3M1018.3 768.3L1037.7 773.2M1018.3 768.3L1010.5 809.8M1023.9 827.8L1019.1 850.2M1019.1 850.2L1039.8 848.3M1048.5 98.8L1072.8 92.2M1051.1 130.3L1049.1 159.4M1040.1 170.6L1065.5 184.9M1044.9 261.9L1043.3 289.2M1045.6 332.4L1075.2 333.6M1045.6 332.4L1037.9 367.3M1037.9 367.3L1072.1 354.3M1037.9 367.3L1040.1 387.0M1040.1 387.0L1046.3 419.3M1046.7 436.3L1043.2 458.6M1049.4 586.8L1063.8 601.7M1049.4 586.8L1048.6 623.4M1048.6 623.4L1062.9 626.3M1048.1 705.0L1046.8 720.8M1046.8 720.8L1045.5 754.1M1045.5 754.1L1037.7 773.2M1040.1 796.0L1076.3 794.9M1043.7 822.7L1073.6 824.7M1072.8 92.2L1100.9 97.5M1065.5 184.9L1075.9 210.2M1075.9 210.2L1064.2 229.2M1064.2 229.2L1097.1 224.2M1064.2 229.2L1063.6 262.9M1075.5 284.1L1069.2 305.4M1075.2 333.6L1097.7 333.9M1072.1 354.3L1065.5 378.9M1065.5 378.9L1073.4 412.9M1067.1 574.5L1063.8 601.7M1063.8 601.7L1062.9 626.3M1062.9 626.3L1072.7 641.4M1072.7 641.4L1069.6 668.6M1069.6 668.6L1066.1 693.2M1066.1 693.2L1067.8 731.9M1067.8 731.9L1088.1 724.3M1078.0 756.8L1095.1 750.3M1078.0 756.8L1063.6 772.6M1063.6 772.6L1089.9 779.4M1076.3 794.9L1073.6 824.7M1100.9 97.5L1090.2 118.0M1090.2 118.0L1101.3 152.4M1101.3 152.4L1122.2 152.5M1091.0 177.0L1122.6 170.3M1091.0 177.0L1102.6 199.5M1102.6 199.5L1129.5 199.6M1102.6 199.5L1097.1 224.2M1097.1 224.2L1116.9 223.6M1090.9 260.3L1118.0 261.1M1099.4 277.1L1114.5 275.5M1089.3 301.4L1125.2 303.1M1097.8 389.3L1125.2 379.6M1101.0 413.3L1127.9 415.5M1101.0 413.3L1091.2 431.1M1099.5 482.9L1118.5 484.0M1101.5 547.8L1095.9 560.2M1102.6 593.6L1102.0 616.3M1102.0 616.3L1127.2 627.0M1091.0 651.3L1120.2 644.7M1091.0 651.3L1093.9 666.6M1093.9 666.6L1127.4 672.4M1093.9 666.6L1093.9 699.5M1093.9 699.5L1088.1 724.3M1088.1 724.3L1126.4 721.4M1095.1 750.3L1117.8 747.4M1089.9 779.4L1101.1 807.8M1094.1 858.0L1114.9 854.3M1115.0 106.0L1155.3 106.9M1115.0 106.0L1129.3 125.9M1129.3 125.9L1144.0 124.8M1129.3 125.9L1122.2 152.5M1122.2 152.5L1122.6 170.3M1129.5 199.6L1146.9 204.1M1116.9 223.6L1118.0 261.1M1114.5 275.5L1155.0 284.1M1125.2 303.1L1152.9 314.1M1114.3 335.6L1154.2 326.5M1123.2 360.4L1150.3 356.3M1123.2 360.4L1125.2 379.6M1125.2 379.6L1150.9 382.4M1125.2 379.6L1127.9 415.5M1127.9 415.5L1148.7 418.8M1127.9 415.5L1114.7 432.0M1120.5 510.2L1123.5 547.8M1123.5 547.8L1141.9 543.5M1116.4 569.2L1125.9 588.6M1125.9 588.6L1127.2 627.0M1127.4 672.4L1144.7 670.5M1127.4 672.4L1120.3 705.1M1120.3 705.1L1144.6 693.9M1126.4 721.4L1141.4 724.7M1117.8 747.4L1153.4 751.8M1121.0 783.7L1126.9 808.6M1127.0 833.6L1114.9 854.3M1155.3 106.9L1144.0 124.8M1144.0 124.8L1150.1 149.8M1150.1 149.8L1172.1 153.4M1155.5 260.4L1170.6 263.8M1155.0 284.1L1170.7 286.4M1155.0 284.1L1152.9 314.1M1152.9 314.1L1154.2 326.5M1154.2 326.5L1179.9 333.0M1154.2 326.5L1150.3 356.3M1150.3 356.3L1167.0 358.2M1150.3 356.3L1150.9 382.4M1150.9 382.4L1148.7 418.8M1148.7 418.8L1167.7 407.6M1148.7 418.8L1149.9 434.0M1148.3 462.9L1155.2 486.6M1155.2 486.6L1171.6 492.8M1144.9 518.4L1175.9 521.6M1141.9 543.5L1179.1 542.3M1155.3 568.2L1177.8 571.9M1155.3 568.2L1144.3 593.5M1148.5 614.4L1178.6 623.3M1142.0 640.1L1180.6 640.0M1141.4 724.7L1153.4 751.8M1153.4 751.8L1175.2 748.7M1153.4 751.8L1149.1 778.4M1149.1 778.4L1178.5 782.0M1149.1 778.4L1143.2 805.4M1147.4 828.8L1173.2 827.3M1171.0 95.9L1198.3 100.9M1171.0 95.9L1169.5 126.2M1169.5 126.2L1198.2 123.2M1169.5 126.2L1172.1 153.4M1166.2 175.6L1200.0 177.1M1166.2 175.6L1179.8 199.8M1179.8 199.8L1194.9 200.9M1179.8 199.8L1174.9 229.9M1170.6 263.8L1201.3 249.4M1170.7 286.4L1206.7 279.2M1170.7 286.4L1168.5 301.1M1168.5 301.1L1205.5 313.4M1168.5 301.1L1179.9 333.0M1167.0 358.2L1198.8 366.6M1167.0 358.2L1173.0 389.8M1173.0 389.8L1167.7 407.6M1167.7 407.6L1181.3 441.8M1181.3 441.8L1168.5 461.4M1168.5 461.4L1200.6 472.0M1171.6 492.8L1200.3 490.3M1171.6 492.8L1175.9 521.6M1179.1 542.3L1197.7 543.5M1179.1 542.3L1177.8 571.9M1177.8 571.9L1178.2 593.6M1178.6 623.3L1180.6 640.0M1180.6 640.0L1198.4 647.0M1178.3 699.4L1207.4 697.8M1174.0 731.4L1175.2 748.7M1178.5 782.0L1175.7 800.1M1173.2 827.3L1177.6 850.7M1198.3 100.9L1232.3 103.0M1204.6 157.6L1200.0 177.1M1194.9 200.9L1226.2 204.1M1194.9 200.9L1194.3 231.2M1194.3 231.2L1221.0 224.9M1194.3 231.2L1201.3 249.4M1201.3 249.4L1206.7 279.2M1206.7 279.2L1205.5 313.4M1205.5 313.4L1207.3 329.3M1207.3 329.3L1198.8 366.6M1198.8 366.6L1222.9 363.1M1198.8 366.6L1192.2 378.8M1201.0 412.0L1206.7 442.4M1200.6 472.0L1226.0 464.9M1200.3 490.3L1203.0 514.2M1203.0 514.2L1226.5 524.0M1197.6 575.2L1219.9 562.5M1201.2 678.1L1207.4 697.8M1207.4 697.8L1199.0 726.0M1199.0 726.0L1230.3 721.2M1199.0 726.0L1207.9 747.5M1200.5 781.1L1220.7 772.3M1200.5 781.1L1194.7 799.1M1207.7 833.2L1227.3 825.6M1200.2 847.8L1225.2 852.2M1232.3 103.0L1231.1 133.8M1232.2 150.7L1220.5 174.6M1220.5 174.6L1248.0 170.7M1226.2 204.1L1258.9 209.7M1226.2 204.1L1221.0 224.9M1221.0 224.9L1249.0 236.4M1221.0 224.9L1228.1 257.7M1223.7 289.9L1253.6 289.4M1228.2 300.7L1251.9 315.2M1228.2 300.7L1224.6 338.6M1224.6 338.6L1247.9 332.2M1224.6 338.6L1222.9 363.1M1222.9 363.1L1255.5 355.5M1218.1 382.9L1231.5 413.4M1231.5 413.4L1251.8 416.7M1222.3 492.3L1259.5 486.7M1222.3 492.3L1226.5 524.0M1226.5 524.0L1227.2 540.6M1230.2 587.7L1219.6 614.7M1219.6 614.7L1249.6 615.9M1219.6 614.7L1226.4 651.2M1227.8 676.9L1247.8 664.6M1227.8 676.9L1219.0 690.2M1219.0 690.2L1254.6 695.5M1219.0 690.2L1230.3 721.2M1220.7 772.3L1257.4 770.0M1220.7 772.3L1219.6 808.5M1219.6 808.5L1251.1 807.4M1227.3 825.6L1256.9 822.5M1227.3 825.6L1225.2 852.2M1225.2 852.2L1249.6 857.6M1253.3 133.4L1273.3 133.2M1251.0 153.9L1248.0 170.7M1248.0 170.7L1277.2 172.1M1258.9 209.7L1281.3 200.2M1258.9 209.7L1249.0 236.4M1249.0 236.4L1257.1 252.9M1257.1 252.9L1275.9 251.9M1257.1 252.9L1253.6 289.4M1253.6 289.4L1279.7 277.4M1253.6 289.4L1251.9 315.2M1251.9 315.2L1284.0 302.0M1251.9 315.2L1247.9 332.2M1247.9 332.2L1278.2 334.7M1247.9 332.2L1255.5 355.5M1255.5 355.5L1248.9 392.0M1251.8 416.7L1279.1 409.0M1251.8 416.7L1247.9 432.8M1249.7 459.0L1272.8 469.6M1249.7 459.0L1259.5 486.7M1253.0 509.8L1271.7 517.0M1252.5 540.2L1250.5 561.0M1250.5 561.0L1274.8 561.1M1250.5 561.0L1246.0 599.2M1249.6 615.9L1247.1 642.5M1247.1 642.5L1274.5 644.5M1247.1 642.5L1247.8 664.6M1247.8 664.6L1284.5 676.4M1247.8 664.6L1254.6 695.5M1254.6 695.5L1246.5 727.3M1246.5 727.3L1245.5 746.3M1245.5 746.3L1257.4 770.0M1257.4 770.0L1251.1 807.4M1251.1 807.4L1276.6 804.5M1256.9 822.5L1249.6 857.6M1273.3 133.2L1297.8 132.6M1278.1 147.6L1307.7 155.4M1281.3 200.2L1298.6 199.2M1281.3 200.2L1284.4 231.4M1284.4 231.4L1275.9 251.9M1275.9 251.9L1296.6 253.0M1279.7 277.4L1306.2 276.9M1284.0 302.0L1309.4 309.1M1284.0 302.0L1278.2 334.7M1278.2 334.7L1307.5 330.1M1278.2 334.7L1274.3 364.3M1274.3 364.3L1303.0 362.9M1274.3 364.3L1276.2 388.5M1276.2 388.5L1301.6 378.0M1276.2 388.5L1279.1 409.0M1279.1 409.0L1309.3 416.4M1279.1 409.0L1276.2 431.4M1272.8 469.6L1275.1 492.6M1275.8 542.0L1299.4 548.6M1274.8 561.1L1275.0 589.6M1272.0 623.5L1308.0 625.3M1272.0 623.5L1274.5 644.5M1274.5 644.5L1284.5 676.4M1284.5 676.4L1311.1 670.8M1284.1 703.8L1310.9 701.1M1284.1 703.8L1272.1 720.4M1272.1 720.4L1307.8 729.3M1270.5 752.9L1306.0 749.2M1270.5 752.9L1280.6 773.6M1280.6 773.6L1276.6 804.5M1276.6 804.5L1302.9 802.2M1276.6 804.5L1281.2 824.0M1306.1 94.9L1297.8 132.6M1296.6 170.6L1298.6 199.2M1306.2 276.9L1333.3 284.7M1306.2 276.9L1309.4 309.1M1307.5 330.1L1330.2 333.1M1303.0 362.9L1337.0 357.6M1301.6 378.0L1326.8 392.2M1309.3 416.4L1324.3 413.0M1300.6 430.7L1327.3 443.0M1309.7 465.7L1296.8 485.9M1296.8 485.9L1324.7 492.7M1297.8 520.7L1331.6 515.4M1299.4 548.6L1308.0 561.4M1308.0 561.4L1323.8 564.6M1308.0 561.4L1307.1 592.3M1307.1 592.3L1308.0 625.3M1308.0 625.3L1300.5 639.4M1300.5 639.4L1325.2 649.2M1310.9 701.1L1327.2 697.5M1307.8 729.3L1327.8 718.7M1296.9 779.2L1337.9 780.0M1302.9 802.2L1323.3 805.5M1310.9 822.0L1337.7 829.0M1310.9 822.0L1308.2 846.7M1323.0 201.7L1358.4 200.0M1327.0 250.2L1333.3 284.7M1333.3 284.7L1361.4 278.7M1333.3 284.7L1325.8 303.9M1325.8 303.9L1351.0 310.2M1326.8 392.2L1324.3 413.0M1327.3 443.0L1330.8 468.2M1330.8 468.2L1353.9 464.8M1324.7 492.7L1353.9 495.3M1331.6 515.4L1334.3 547.3M1334.3 547.3L1323.8 564.6M1323.8 564.6L1327.8 589.3M1327.8 589.3L1362.5 601.1M1323.0 616.5L1355.9 620.0M1325.2 649.2L1329.2 665.8M1329.2 665.8L1327.2 697.5M1327.2 697.5L1359.0 692.6M1327.2 697.5L1327.8 718.7M1327.8 718.7L1323.1 742.2M1323.1 742.2L1349.4 742.6M1323.1 742.2L1337.9 780.0M1337.9 780.0L1355.0 771.1M1337.7 829.0L1361.5 833.7M1337.7 829.0L1323.7 853.8M1323.7 853.8L1360.6 852.8M1348.4 260.4L1361.4 278.7M1361.4 278.7L1377.1 275.4M1361.5 340.8L1350.7 364.6M1350.7 364.6L1361.3 389.9M1361.3 389.9L1353.2 407.0M1353.9 464.8L1378.8 465.1M1353.9 495.3L1389.2 489.7M1357.1 544.1L1361.1 571.3M1362.5 601.1L1384.9 593.2M1362.5 601.1L1355.9 620.0M1355.9 620.0L1375.4 622.6M1355.9 620.0L1350.5 642.8M1350.5 642.8L1380.0 647.3M1350.5 642.8L1357.3 665.3M1357.3 665.3L1359.0 692.6M1359.0 692.6L1383.0 696.3M1359.0 692.6L1355.1 731.5M1355.1 731.5L1375.8 718.9M1355.1 731.5L1349.4 742.6M1349.4 742.6L1388.2 750.8M1349.4 742.6L1355.0 771.1M1355.0 771.1L1375.8 781.8M1355.0 771.1L1359.6 794.0M1359.6 794.0L1361.5 833.7M1361.5 833.7L1360.6 852.8M1360.6 852.8L1381.8 854.9M1382.2 124.7L1379.4 151.0M1383.0 253.6L1412.1 249.8M1377.1 275.4L1379.2 307.4M1389.5 340.5L1406.3 328.7M1387.8 367.6L1389.4 387.9M1389.4 387.9L1412.4 380.2M1389.4 387.9L1387.0 405.0M1387.0 405.0L1412.4 404.9M1387.0 405.0L1384.8 439.7M1384.8 439.7L1378.8 465.1M1378.8 465.1L1400.2 465.5M1378.8 465.1L1389.2 489.7M1389.2 489.7L1403.4 486.8M1384.4 512.8L1379.5 548.2M1379.5 548.2L1414.2 543.9M1379.5 548.2L1374.4 563.0M1374.4 563.0L1414.0 569.0M1374.4 563.0L1384.9 593.2M1375.4 622.6L1380.0 647.3M1380.0 647.3L1405.5 650.2M1380.7 672.5L1410.9 677.2M1383.0 696.3L1402.0 696.0M1383.0 696.3L1375.8 718.9M1375.8 718.9L1411.8 731.2M1388.2 750.8L1411.5 742.7M1388.2 750.8L1375.8 781.8M1375.8 781.8L1409.7 769.6M1378.1 795.5L1382.5 824.0M1382.5 824.0L1401.8 834.8M1382.5 824.0L1381.8 854.9M1412.1 249.8L1432.1 250.3M1401.6 313.3L1406.3 328.7M1406.3 328.7L1441.2 326.2M1415.4 361.0L1412.4 380.2M1412.4 404.9L1403.8 436.0M1403.8 436.0L1400.2 465.5M1400.2 465.5L1436.9 462.3M1400.2 465.5L1403.4 486.8M1403.4 486.8L1433.6 484.5M1411.3 514.8L1439.5 514.3M1414.2 543.9L1440.0 543.8M1414.2 543.9L1414.0 569.0M1414.0 569.0L1414.7 599.9M1414.7 599.9L1402.7 623.9M1402.7 623.9L1405.5 650.2M1405.5 650.2L1410.9 677.2M1410.9 677.2L1433.5 673.2M1410.9 677.2L1402.0 696.0M1402.0 696.0L1432.2 695.7M1402.0 696.0L1411.8 731.2M1411.8 731.2L1426.1 725.3M1411.8 731.2L1411.5 742.7M1411.5 742.7L1431.3 742.3M1409.7 769.6L1433.4 783.8M1409.7 769.6L1408.8 806.8M1408.8 806.8L1426.7 796.3M1401.8 834.8L1436.7 824.4M1439.4 127.3L1460.5 133.3M1439.4 127.3L1427.8 144.3M1427.8 144.3L1467.9 144.5M1437.0 312.9L1467.0 310.9M1441.2 326.2L1431.5 354.4M1434.0 392.0L1462.2 383.6M1438.8 404.6L1428.9 443.1M1428.9 443.1L1436.9 462.3M1436.9 462.3L1457.2 471.8M1433.6 484.5L1459.7 487.9M1433.6 484.5L1439.5 514.3M1439.5 514.3L1455.9 511.8M1439.5 514.3L1440.0 543.8M1440.0 543.8L1457.6 536.2M1440.0 543.8L1427.2 565.3M1427.2 565.3L1452.1 573.9M1427.2 565.3L1429.5 600.3M1429.5 600.3L1459.3 593.1M1429.5 600.3L1435.4 612.7M1435.4 612.7L1461.1 616.8M1435.4 612.7L1428.7 643.8M1428.7 643.8L1433.5 673.2M1433.5 673.2L1456.8 668.9M1433.5 673.2L1432.2 695.7M1432.2 695.7L1426.1 725.3M1426.1 725.3L1431.3 742.3M1431.3 742.3L1433.4 783.8M1433.4 783.8L1453.3 770.9M1426.7 796.3L1461.3 809.8M1426.7 796.3L1436.7 824.4M1436.7 824.4L1430.4 854.0M1456.2 101.1L1479.1 99.8M1460.5 133.3L1492.4 122.4M1467.9 144.5L1482.1 144.4M1461.0 182.3L1480.6 174.3M1461.0 182.3L1466.0 208.4M1466.0 208.4L1462.1 232.2M1457.8 252.5L1487.6 261.8M1457.8 252.5L1464.7 288.0M1463.8 360.1L1491.0 366.0M1460.8 410.5L1453.0 435.4M1457.2 471.8L1492.8 459.4M1455.9 511.8L1488.4 514.5M1455.9 511.8L1457.6 536.2M1457.6 536.2L1452.1 573.9M1452.1 573.9L1478.9 566.6M1459.3 593.1L1478.7 596.0M1459.3 593.1L1461.1 616.8M1461.1 616.8L1454.7 639.1M1454.7 639.1L1456.8 668.9M1456.8 668.9L1485.4 664.2M1463.6 698.8L1467.0 721.4M1467.0 721.4L1493.8 716.9M1466.7 751.3L1487.8 753.6M1466.7 751.3L1453.3 770.9M1453.3 770.9L1483.3 769.5M1457.7 832.4L1490.3 821.4M1457.7 832.4L1458.9 859.9M1479.1 99.8L1512.6 101.4M1480.6 174.3L1489.3 199.5M1487.6 261.8L1488.4 277.1M1488.4 277.1L1489.7 315.4M1489.7 315.4L1512.4 315.1M1489.7 315.4L1487.6 327.3M1483.5 380.2L1516.4 383.8M1483.5 380.2L1481.0 412.6M1481.0 412.6L1492.0 440.2M1492.0 440.2L1516.1 431.4M1492.0 440.2L1492.8 459.4M1492.8 459.4L1504.4 458.1M1483.2 494.0L1505.0 490.0M1488.4 514.5L1512.9 510.9M1488.9 539.4L1519.0 539.8M1488.9 539.4L1478.9 566.6M1478.9 566.6L1506.4 562.8M1478.9 566.6L1478.7 596.0M1478.7 596.0L1515.8 600.7M1478.7 596.0L1483.4 619.9M1483.4 619.9L1506.6 612.5M1487.6 642.1L1516.4 641.9M1487.6 642.1L1485.4 664.2M1485.4 664.2L1492.8 699.0M1492.8 699.0L1514.2 695.5M1492.8 699.0L1493.8 716.9M1493.8 716.9L1516.8 723.4M1487.8 753.6L1509.2 756.5M1487.8 753.6L1483.3 769.5M1483.3 769.5L1505.7 779.7M1483.3 769.5L1480.5 796.3M1480.5 796.3L1490.3 821.4M1491.0 852.8L1505.0 855.0M1512.6 101.4L1512.9 128.5M1515.9 174.1L1515.4 208.2M1515.4 208.2L1533.7 199.3M1515.4 208.2L1516.4 226.9M1516.4 226.9L1542.1 232.3M1516.4 226.9L1516.4 263.6M1516.4 263.6L1511.3 278.5M1512.4 315.1L1532.5 313.8M1506.1 326.1L1511.6 362.5M1511.6 362.5L1542.0 365.2M1516.4 383.8L1534.5 383.3M1516.4 383.8L1519.8 407.7M1519.8 407.7L1537.8 418.3M1505.0 490.0L1512.9 510.9M1512.9 510.9L1533.4 522.1M1519.0 539.8L1535.8 546.5M1519.0 539.8L1506.4 562.8M1515.8 600.7L1543.8 601.9M1506.6 612.5L1516.4 641.9M1516.4 641.9L1531.8 653.6M1516.4 641.9L1519.7 672.0M1519.7 672.0L1530.2 678.6M1514.2 695.5L1516.8 723.4M1509.2 756.5L1540.9 743.4M1505.7 779.7L1535.4 782.7M1505.7 779.7L1505.0 804.3M1505.0 804.3L1541.5 808.1M1505.0 804.3L1510.4 833.8M1510.4 833.8L1545.7 820.5M1510.4 833.8L1505.0 855.0M1533.6 148.0L1562.9 145.7M1533.6 148.0L1534.2 176.9M1534.2 176.9L1556.3 185.9M1534.2 176.9L1533.7 199.3M1533.7 199.3L1542.1 232.3M1542.1 232.3L1557.9 229.8M1534.8 263.9L1533.5 283.1M1533.5 283.1L1558.9 285.0M1533.5 283.1L1532.5 313.8M1532.5 313.8L1558.4 311.8M1532.5 313.8L1543.9 330.3M1543.9 330.3L1564.0 327.8M1534.5 383.3L1537.8 418.3M1537.8 418.3L1532.6 440.9M1532.6 440.9L1570.1 441.7M1532.6 440.9L1539.6 463.2M1539.6 463.2L1539.3 496.1M1539.3 496.1L1560.2 483.1M1539.3 496.1L1533.4 522.1M1533.4 522.1L1556.7 516.1M1533.4 522.1L1535.8 546.5M1535.8 546.5L1562.5 542.9M1543.8 562.9L1543.8 601.9M1543.8 601.9L1567.0 596.4M1543.8 601.9L1534.8 612.4M1531.8 653.6L1530.2 678.6M1532.4 701.8L1562.4 695.1M1540.9 743.4L1562.2 748.2M1540.9 743.4L1535.4 782.7M1535.4 782.7L1562.6 770.3M1535.4 782.7L1541.5 808.1M1545.7 820.5L1565.7 834.8M1545.7 820.5L1533.8 858.7M1562.9 145.7L1595.5 156.5M1556.3 185.9L1596.5 170.8M1557.9 229.8L1592.3 230.8M1558.2 254.9L1587.0 263.5M1558.9 285.0L1558.4 311.8M1558.4 311.8L1595.7 308.2M1564.0 327.8L1591.5 341.9M1561.7 359.9L1585.8 362.1M1570.7 383.6L1559.4 419.5M1559.4 419.5L1570.1 441.7M1570.1 441.7L1560.4 458.8M1560.4 458.8L1560.2 483.1M1560.2 483.1L1592.1 490.7M1562.5 542.9L1586.2 548.5M1562.5 542.9L1561.8 560.2M1561.8 560.2L1589.6 571.5M1561.8 560.2L1567.0 596.4M1567.0 596.4L1564.7 620.8M1564.7 620.8L1585.5 614.3M1567.0 653.7L1570.0 675.5M1570.0 675.5L1590.4 672.4M1570.0 675.5L1562.4 695.1M1562.4 695.1L1562.7 731.6M1562.7 731.6L1562.2 748.2M1562.2 748.2L1589.4 752.2M1562.6 770.3L1595.2 782.3M1562.6 770.3L1572.0 794.1M1572.0 794.1L1595.9 794.7M1572.0 794.1L1565.7 834.8M1565.7 834.8L1588.1 833.3M1588.0 95.9L1610.5 96.0M1585.2 119.9L1595.5 156.5M1596.5 170.8L1615.2 171.4M1593.1 201.2L1592.3 230.8M1592.3 230.8L1619.1 229.2M1587.0 263.5L1582.0 285.9M1591.5 341.9L1585.8 362.1M1593.9 384.1L1614.1 378.3M1590.4 439.8L1592.8 461.2M1592.8 461.2L1619.5 460.4M1592.8 461.2L1592.1 490.7M1592.1 490.7L1613.2 485.9M1585.6 517.8L1586.2 548.5M1589.6 571.5L1611.2 566.8M1590.4 593.6L1585.5 614.3M1585.5 614.3L1613.9 612.7M1585.5 614.3L1596.8 646.5M1596.8 646.5L1590.4 672.4M1590.4 672.4L1595.0 693.8M1595.0 693.8L1614.5 700.4M1595.0 693.8L1584.8 729.2M1584.8 729.2L1589.4 752.2M1589.4 752.2L1614.2 751.3M1595.2 782.3L1622.8 771.1M1595.9 794.7L1623.5 805.4M1595.9 794.7L1588.1 833.3M1595.1 848.0L1613.3 847.1M1609.6 123.7L1620.9 152.3M1620.9 152.3L1615.2 171.4M1615.2 171.4L1614.3 212.0M1616.3 329.8L1613.9 357.4M1614.1 378.3L1611.2 413.1M1611.2 413.1L1608.9 432.9M1619.5 460.4L1613.2 485.9M1613.2 485.9L1621.3 509.5M1621.3 509.5L1618.2 547.7M1622.8 771.1L1623.5 805.4M1623.5 805.4L1614.0 830.6M1614.0 830.6L1613.3 847.1" stroke="#ffffff" stroke-width="1.3" fill="none" stroke-linecap="round"/><polyline points="538.8,403.0 533.0,373.7 503.4,367.8 459.2,379.6 444.4,400.2 438.5,444.5 435.6,468.0 409.0,503.5 420.9,527.0 420.9,556.5 426.8,574.2 474.0,589.0 479.8,606.0 500.0,640.0" fill="none" stroke="#d3d3d3" stroke-width="2.2" stroke-linejoin="round"/><polyline points="560.0,388.6 589.5,362.0 604.2,351.7 624.9,354.7 648.5,338.5 678.0,335.5 707.4,338.5 725.0,341.4" fill="none" stroke="#d3d3d3" stroke-width="2.2" stroke-linejoin="round"/><polyline points="591.9,356.0 562.4,379.6 541.8,403.0" fill="none" stroke="#d3d3d3" stroke-width="2.2" stroke-linejoin="round"/><polyline points="1287.0,444.5 1237.0,515.2 1198.8,568.3 1184.0,606.0" fill="none" stroke="#d3d3d3" stroke-width="2.2" stroke-linejoin="round"/><polyline points="488.7,562.4 547.7,527.0 591.9,509.3 640.0,490.0" fill="none" stroke="#d3d3d3" stroke-width="2.2" stroke-linejoin="round"/><polyline points="1246.0,415.0 1254.8,474.0" fill="none" stroke="#d3d3d3" stroke-width="2.2" stroke-linejoin="round"/><polygon points="486.0,162.0 497.0,162.0 499.0,172.0 492.0,177.0 486.0,174.0" fill="#d6d6d6"/><polygon points="500.0,168.0 507.0,163.0 511.0,170.0 506.0,178.0 500.0,176.0" fill="#d6d6d6"/><polygon points="514.0,171.0 524.0,164.0 533.0,175.0 531.0,189.0 518.0,186.0" fill="#d6d6d6"/><polygon points="509.0,302.0 515.0,300.0 516.0,306.0 510.0,307.0" fill="#d6d6d6"/><polygon points="1486.0,313.0 1496.0,300.0 1501.0,305.0 1493.0,315.0" fill="#d6d6d6"/><polygon points="1172.3,598.0 1198.8,598.0 1210.6,627.5 1222.4,642.2 1240.0,657.0 1249.0,668.8 1240.0,686.5 1222.4,686.5 1210.6,662.9 1193.0,642.2 1181.0,615.7" fill="#cdcdcd"/><line x1="1010" y1="106" x2="1021.9" y2="120.7" stroke="#cdcdcd" stroke-width="6.0" stroke-linecap="round"/><line x1="1021.9" y1="120.7" x2="1036.6" y2="135.5" stroke="#cdcdcd" stroke-width="6.5" stroke-linecap="round"/><line x1="1036.6" y1="135.5" x2="1039.6" y2="144.3" stroke="#cdcdcd" stroke-width="7.0" stroke-linecap="round"/><line x1="1039.6" y1="144.3" x2="1016" y2="173.8" stroke="#cdcdcd" stroke-width="6.5" stroke-linecap="round"/><line x1="1016" y1="173.8" x2="1010" y2="185.6" stroke="#cdcdcd" stroke-width="6.0" stroke-linecap="round"/><line x1="1010" y1="185.6" x2="1007" y2="224" stroke="#cdcdcd" stroke-width="6.0" stroke-linecap="round"/><line x1="1007" y1="224" x2="1004" y2="253.5" stroke="#cdcdcd" stroke-width="6.0" stroke-linecap="round"/><line x1="1004" y1="253.5" x2="1007" y2="277" stroke="#cdcdcd" stroke-width="6.0" stroke-linecap="round"/><line x1="1007" y1="277" x2="1016" y2="297.7" stroke="#cdcdcd" stroke-width="6.0" stroke-linecap="round"/><line x1="1016" y1="297.7" x2="1024.8" y2="318.3" stroke="#cdcdcd" stroke-width="6.5" stroke-linecap="round"/><line x1="1024.8" y1="318.3" x2="1051.4" y2="336" stroke="#cdcdcd" stroke-width="7.0" stroke-linecap="round"/><line x1="1051.4" y1="336" x2="1075" y2="347.8" stroke="#cdcdcd" stroke-width="7.0" stroke-linecap="round"/><line x1="1075" y1="347.8" x2="1095.6" y2="360" stroke="#cdcdcd" stroke-width="7.0" stroke-linecap="round"/><line x1="1095.6" y1="360" x2="1101.5" y2="379.6" stroke="#cdcdcd" stroke-width="7.0" stroke-linecap="round"/><line x1="1101.5" y1="379.6" x2="1092.6" y2="415" stroke="#cdcdcd" stroke-width="7.0" stroke-linecap="round"/><line x1="1092.6" y1="415" x2="1075" y2="444.5" stroke="#cdcdcd" stroke-width="7.0" stroke-linecap="round"/><line x1="1075" y1="444.5" x2="1075" y2="479.9" stroke="#cdcdcd" stroke-width="7.5" stroke-linecap="round"/><line x1="1075" y1="479.9" x2="1080.9" y2="503.5" stroke="#cdcdcd" stroke-width="8.5" stroke-linecap="round"/><line x1="1080.9" y1="503.5" x2="1098.5" y2="533" stroke="#cdcdcd" stroke-width="10.0" stroke-linecap="round"/><line x1="1098.5" y1="533" x2="1122.1" y2="556.5" stroke="#cdcdcd" stroke-width="11.5" stroke-linecap="round"/><line x1="1122.1" y1="556.5" x2="1157.5" y2="580" stroke="#cdcdcd" stroke-width="13.0" stroke-linecap="round"/><line x1="1157.5" y1="580" x2="1181" y2="606" stroke="#cdcdcd" stroke-width="14.0" stroke-linecap="round"/><line x1="1181" y1="606" x2="1200" y2="640" stroke="#cdcdcd" stroke-width="14.0" stroke-linecap="round"/><line x1="1200" y1="640" x2="1225" y2="670" stroke="#cdcdcd" stroke-width="13.0" stroke-linecap="round"/><line x1="1225" y1="670" x2="1249" y2="690" stroke="#cdcdcd" stroke-width="10.5" stroke-linecap="round"/><line x1="1249" y1="690" x2="1266.6" y2="716" stroke="#cdcdcd" stroke-width="6.5" stroke-linecap="round"/><line x1="1266.6" y1="716" x2="1287" y2="745.5" stroke="#cdcdcd" stroke-width="4.0" stroke-linecap="round"/><line x1="1287" y1="745.5" x2="1299.5" y2="760.2" stroke="#cdcdcd" stroke-width="4.0" stroke-linecap="round"/><line x1="1299.5" y1="760.2" x2="1323" y2="798.5" stroke="#cdcdcd" stroke-width="4.0" stroke-linecap="round"/><line x1="1323" y1="798.5" x2="1340.8" y2="834" stroke="#cdcdcd" stroke-width="4.0" stroke-linecap="round"/><line x1="1340.8" y1="834" x2="1349.6" y2="848" stroke="#cdcdcd" stroke-width="4.0" stroke-linecap="round"/><polyline points="1426.3,106.0 1438.0,129.6 1455.8,150.2 1470.5,156.0 1447.0,162.0 1432.0,173.8 1429.0,185.6 1441.0,200.4 1464.6,221.0 1470.5,229.9 1461.7,250.5 1447.0,265.2 1450.0,271.0 1476.4,277.0 1488.2,283.0 1488.2,291.8 1476.4,300.6 1470.5,312.4 1464.6,330.0 1452.8,356.0 1447.0,375.0 1441.0,400.2 1452.8,415.0 1482.0,440.0 1482.3,474.0 1482.3,494.6 1500.0,506.4 1535.4,509.3 1529.5,533.0 1511.8,556.5 1506.0,580.0 1517.7,606.0 1529.5,612.7 1514.8,636.3 1541.3,657.0 1523.6,677.6 1529.5,701.2 1550.2,716.0 1562.0,721.9 1559.0,763.0" fill="none" stroke="#cdcdcd" stroke-width="3" stroke-linejoin="round" stroke-linecap="round"/><polyline points="385.5,106.0 391.4,135.5 385.5,194.5 373.7,238.7 361.9,288.8 350.0,356.0 340.0,420.0 326.0,480.0" fill="none" stroke="#fff" stroke-width="3" stroke-linejoin="round" stroke-linecap="round"/><polyline points="591.9,280.0 562.4,283.0 532.9,318.3 488.7,356.0 450.3,391.4 385.5,444.5 326.5,479.9 297.0,500.0" fill="none" stroke="#fff" stroke-width="3" stroke-linejoin="round" stroke-linecap="round"/><polyline points="580.0,238.7 589.0,209.0 627.0,179.7" fill="none" stroke="#fff" stroke-width="3" stroke-linejoin="round" stroke-linecap="round"/><polyline points="409.0,106.0 462.0,112.0 503.0,123.7 562.4,144.3 627.0,185.6" fill="none" stroke="#fff" stroke-width="3" stroke-linejoin="round" stroke-linecap="round"/><polyline points="580.0,277.0 592.0,356.0" fill="none" stroke="#fff" stroke-width="3" stroke-linejoin="round" stroke-linecap="round"/><polyline points="560.0,443.0 648.5,406.3 725.0,365.0 796.0,338.5 890.0,303.0 957.0,280.0" fill="none" stroke="#fff" stroke-width="3" stroke-linejoin="round" stroke-linecap="round"/><polyline points="766.0,335.5 796.0,347.3 855.0,388.6 890.0,415.0 957.0,459.2" fill="none" stroke="#fff" stroke-width="3" stroke-linejoin="round" stroke-linecap="round"/><polyline points="763.5,298.7 840.0,309.0 890.0,326.7 957.0,330.0 1016.0,309.5 1104.5,297.7 1175.0,290.3" fill="none" stroke="#fff" stroke-width="3" stroke-linejoin="round" stroke-linecap="round"/><polyline points="639.6,250.0 619.0,368.0 604.0,427.0 589.5,500.0" fill="none" stroke="#fff" stroke-width="3" stroke-linejoin="round" stroke-linecap="round"/><polyline points="627.0,114.8 700.7,156.0 750.9,194.5 809.8,244.6 848.0,283.0 900.0,330.0" fill="none" stroke="#fff" stroke-width="3" stroke-linejoin="round" stroke-linecap="round"/><polyline points="627.0,247.5 724.3,215.0 786.0,194.5 863.0,165.0 957.0,144.0" fill="none" stroke="#fff" stroke-width="3" stroke-linejoin="round" stroke-linecap="round"/><polyline points="753.8,106.0 765.6,141.4 753.8,179.7 739.0,203.0" fill="none" stroke="#fff" stroke-width="3" stroke-linejoin="round" stroke-linecap="round"/><polyline points="792.0,247.5 839.3,297.7 921.9,356.0 960.0,390.0" fill="none" stroke="#fff" stroke-width="3" stroke-linejoin="round" stroke-linecap="round"/><polyline points="871.8,114.8 874.7,165.0 892.4,229.9 936.6,283.0 957.0,312.4" fill="none" stroke="#fff" stroke-width="3" stroke-linejoin="round" stroke-linecap="round"/><polyline points="1001.0,176.8 1075.0,200.4 1163.4,210.7 1287.0,224.0 1329.0,238.7 1388.0,250.5 1432.2,256.4 1447.0,262.3" fill="none" stroke="#fff" stroke-width="3" stroke-linejoin="round" stroke-linecap="round"/><polyline points="1027.8,324.2 1134.0,306.5 1287.0,277.0" fill="none" stroke="#fff" stroke-width="3" stroke-linejoin="round" stroke-linecap="round"/><polyline points="1113.0,303.6 1145.7,209.0 1169.0,165.0" fill="none" stroke="#fff" stroke-width="3" stroke-linejoin="round" stroke-linecap="round"/><polyline points="1270.0,117.8 1290.6,135.5 1367.3,128.1 1458.7,106.0" fill="none" stroke="#fff" stroke-width="3" stroke-linejoin="round" stroke-linecap="round"/><polyline points="1290.6,135.5 1281.8,165.0 1287.7,224.0" fill="none" stroke="#fff" stroke-width="3" stroke-linejoin="round" stroke-linecap="round"/><polyline points="1470.5,221.0 1514.8,203.3 1600.0,182.7" fill="none" stroke="#fff" stroke-width="3" stroke-linejoin="round" stroke-linecap="round"/><polyline points="1299.5,356.0 1388.0,312.4 1476.4,288.8" fill="none" stroke="#fff" stroke-width="3" stroke-linejoin="round" stroke-linecap="round"/><polyline points="1388.0,356.0 1470.5,318.3 1535.4,294.7" fill="none" stroke="#fff" stroke-width="3" stroke-linejoin="round" stroke-linecap="round"/><polyline points="297.0,450.4 341.2,482.8 438.5,465.0 503.4,465.0 627.0,423.8 700.0,400.0" fill="none" stroke="#fff" stroke-width="3" stroke-linejoin="round" stroke-linecap="round"/><polyline points="438.5,465.0 474.0,509.3 533.0,521.0 627.0,556.5" fill="none" stroke="#fff" stroke-width="3" stroke-linejoin="round" stroke-linecap="round"/><polyline points="538.8,403.0 562.4,444.5 591.9,474.0 627.0,488.7" fill="none" stroke="#fff" stroke-width="3" stroke-linejoin="round" stroke-linecap="round"/><polyline points="627.0,418.0 715.5,388.4 804.0,364.8 833.4,356.0" fill="none" stroke="#fff" stroke-width="3" stroke-linejoin="round" stroke-linecap="round"/><polyline points="627.0,485.8 715.5,512.3 833.4,556.5 957.0,597.8" fill="none" stroke="#fff" stroke-width="3" stroke-linejoin="round" stroke-linecap="round"/><polyline points="804.0,356.0 848.0,394.3 892.4,420.9 957.0,459.2" fill="none" stroke="#fff" stroke-width="3" stroke-linejoin="round" stroke-linecap="round"/><polyline points="857.0,397.3 921.9,385.5 957.0,379.6 1000.0,375.0 1040.0,372.0" fill="none" stroke="#fff" stroke-width="3" stroke-linejoin="round" stroke-linecap="round"/><polyline points="921.9,385.5 892.4,426.8 857.0,474.0 833.4,533.0" fill="none" stroke="#fff" stroke-width="3" stroke-linejoin="round" stroke-linecap="round"/><polyline points="957.0,441.5 1128.0,438.6 1193.0,397.3 1287.0,382.5" fill="none" stroke="#fff" stroke-width="3" stroke-linejoin="round" stroke-linecap="round"/><polyline points="1036.6,356.0 1033.7,415.0 1036.6,503.5 1021.9,606.0" fill="none" stroke="#fff" stroke-width="3" stroke-linejoin="round" stroke-linecap="round"/><polyline points="1270.0,592.0 1388.0,544.7 1476.4,524.0 1565.0,506.4 1600.0,509.3" fill="none" stroke="#fff" stroke-width="3" stroke-linejoin="round" stroke-linecap="round"/><polyline points="1393.9,485.8 1396.8,606.0" fill="none" stroke="#fff" stroke-width="3" stroke-linejoin="round" stroke-linecap="round"/><polyline points="1447.0,426.8 1461.7,488.7 1491.2,547.7 1506.0,606.0" fill="none" stroke="#fff" stroke-width="3" stroke-linejoin="round" stroke-linecap="round"/><polyline points="1526.6,479.9 1565.0,533.0 1600.0,586.0" fill="none" stroke="#fff" stroke-width="3" stroke-linejoin="round" stroke-linecap="round"/><polyline points="1270.0,379.6 1334.9,379.6 1399.8,356.0" fill="none" stroke="#fff" stroke-width="3" stroke-linejoin="round" stroke-linecap="round"/><polyline points="957.0,780.8 1075.0,801.5 1163.4,828.0 1222.4,848.0" fill="none" stroke="#fff" stroke-width="3" stroke-linejoin="round" stroke-linecap="round"/><polyline points="1083.8,724.8 1066.0,798.5" fill="none" stroke="#fff" stroke-width="3" stroke-linejoin="round" stroke-linecap="round"/><polyline points="1110.3,760.2 1157.5,724.8 1222.4,695.3 1287.0,657.0 1358.5,598.0" fill="none" stroke="#fff" stroke-width="3" stroke-linejoin="round" stroke-linecap="round"/><polyline points="995.3,704.0 995.3,775.0" fill="none" stroke="#fff" stroke-width="3" stroke-linejoin="round" stroke-linecap="round"/><polyline points="1293.6,648.0 1388.0,649.6 1423.4,686.5 1452.8,739.5 1476.4,786.7 1494.0,848.0" fill="none" stroke="#fff" stroke-width="3" stroke-linejoin="round" stroke-linecap="round"/><polyline points="1414.5,598.0 1414.5,662.9 1370.3,716.0 1364.4,751.3" fill="none" stroke="#fff" stroke-width="3" stroke-linejoin="round" stroke-linecap="round"/><polyline points="1452.8,727.8 1535.4,724.8 1550.2,736.6 1600.0,736.6" fill="none" stroke="#fff" stroke-width="3" stroke-linejoin="round" stroke-linecap="round"/><polyline points="297.0,560.0 340.0,600.0 400.0,640.0" fill="none" stroke="#fff" stroke-width="3" stroke-linejoin="round" stroke-linecap="round"/><polyline points="483.0,760.0 560.0,740.0 640.0,760.0" fill="none" stroke="#fff" stroke-width="3" stroke-linejoin="round" stroke-linecap="round"/><polyline points="483.0,800.0 540.0,790.0 600.0,760.0 680.0,700.0" fill="none" stroke="#fff" stroke-width="3" stroke-linejoin="round" stroke-linecap="round"/><polyline points="900.0,660.0 957.0,690.0 1000.0,700.0 1060.0,690.0" fill="none" stroke="#fff" stroke-width="3" stroke-linejoin="round" stroke-linecap="round"/><polyline points="700.0,620.0 760.0,650.0 830.0,680.0 900.0,700.0" fill="none" stroke="#fff" stroke-width="3" stroke-linejoin="round" stroke-linecap="round"/><polyline points="840.0,760.0 900.0,780.0 960.0,790.0" fill="none" stroke="#fff" stroke-width="3" stroke-linejoin="round" stroke-linecap="round"/><polyline points="700.0,790.0 760.0,760.0 800.0,790.0 850.0,800.0" fill="none" stroke="#fff" stroke-width="3" stroke-linejoin="round" stroke-linecap="round"/><polyline points="297.0,180.0 340.0,160.0 380.0,140.0" fill="none" stroke="#fff" stroke-width="3" stroke-linejoin="round" stroke-linecap="round"/><polyline points="297.0,320.0 350.0,300.0 400.0,310.0" fill="none" stroke="#fff" stroke-width="3" stroke-linejoin="round" stroke-linecap="round"/><polyline points="640.0,170.0 700.0,130.0 760.0,110.0" fill="none" stroke="#fff" stroke-width="3" stroke-linejoin="round" stroke-linecap="round"/><polyline points="1200.0,130.0 1230.0,180.0 1260.0,230.0" fill="none" stroke="#fff" stroke-width="3" stroke-linejoin="round" stroke-linecap="round"/><polyline points="1300.0,400.0 1340.0,440.0 1380.0,470.0" fill="none" stroke="#fff" stroke-width="3" stroke-linejoin="round" stroke-linecap="round"/><polyline points="1200.0,530.0 1260.0,560.0 1300.0,600.0" fill="none" stroke="#fff" stroke-width="3" stroke-linejoin="round" stroke-linecap="round"/><polyline points="1560.0,300.0 1580.0,350.0 1600.0,380.0" fill="none" stroke="#fff" stroke-width="3" stroke-linejoin="round" stroke-linecap="round"/><polyline points="1300.0,780.0 1350.0,820.0 1380.0,848.0" fill="none" stroke="#fff" stroke-width="3" stroke-linejoin="round" stroke-linecap="round"/><polyline points="297.0,255.0 424.0,267.5 503.0,270.3 580.0,272.0 627.0,277.0 700.0,286.0 760.5,295.7" fill="none" stroke="#dadada" stroke-width="4.2" stroke-linejoin="round" stroke-linecap="round"/><polyline points="503.4,106.0 491.6,135.5 476.9,148.8 444.4,145.8 429.7,153.2 416.4,182.7 413.5,194.5 417.9,212.2 435.6,238.7 432.7,253.5 423.8,268.2 406.1,300.6 385.5,342.0 379.6,356.0 367.8,385.5 376.6,429.7 373.7,459.0 376.6,494.6 400.2,500.5 403.0,533.0 397.3,606.0" fill="none" stroke="#dadada" stroke-width="4.2" stroke-linejoin="round" stroke-linecap="round"/><polyline points="804.0,106.0 818.7,129.6 857.0,185.6 804.0,218.0 792.0,247.5 765.6,274.0 760.5,295.7 748.7,314.9 731.0,332.6 722.2,350.3 720.7,368.0 725.1,391.5 733.0,409.0 745.0,441.5 750.9,482.8 765.6,506.4 804.0,515.2 830.5,538.8 863.0,598.0 871.8,612.7 892.4,621.6 957.0,619.0 1016.0,614.2 1024.8,605.0" fill="none" stroke="#dadada" stroke-width="4.2" stroke-linejoin="round" stroke-linecap="round"/><polyline points="857.0,185.6 957.0,227.0 980.6,241.7 989.4,271.0 1001.0,296.0" fill="none" stroke="#dadada" stroke-width="4.2" stroke-linejoin="round" stroke-linecap="round"/><polyline points="957.0,138.4 980.6,147.3 995.3,162.0 998.3,179.7 1001.0,203.0 1003.0,240.0" fill="none" stroke="#dadada" stroke-width="4.2" stroke-linejoin="round" stroke-linecap="round"/><polyline points="830.5,541.8 780.3,568.3 768.5,598.0 760.0,603.0 749.0,614.6 744.5,641.0 729.9,674.6 700.6,701.0 674.3,730.0 648.0,766.7 633.4,796.0 637.7,810.6 618.7,848.0" fill="none" stroke="#dadada" stroke-width="4.2" stroke-linejoin="round" stroke-linecap="round"/><polyline points="483.4,649.0 500.0,656.0 519.3,670.0 531.0,684.8 545.0,693.0 560.2,699.4 590.0,708.0 618.7,715.5 648.0,720.0 668.5,725.8 674.3,730.0" fill="none" stroke="#dadada" stroke-width="4.2" stroke-linejoin="round" stroke-linecap="round"/><polyline points="515.2,668.8 485.8,710.0" fill="none" stroke="#dadada" stroke-width="4.2" stroke-linejoin="round" stroke-linecap="round"/><polyline points="839.3,657.0 804.0,701.2 786.2,739.5" fill="none" stroke="#dadada" stroke-width="4.2" stroke-linejoin="round" stroke-linecap="round"/><polyline points="730.2,707.0 759.7,721.9 786.2,739.5" fill="none" stroke="#dadada" stroke-width="4.2" stroke-linejoin="round" stroke-linecap="round"/><polyline points="942.5,634.0 921.9,710.0 898.3,745.5 892.4,789.7 863.0,810.3 804.0,848.0" fill="none" stroke="#dadada" stroke-width="4.2" stroke-linejoin="round" stroke-linecap="round"/><polyline points="1054.3,356.0 1057.3,385.5 1051.4,415.0 1054.3,444.5 1069.0,488.7 1075.0,533.0" fill="none" stroke="#dadada" stroke-width="4.2" stroke-linejoin="round" stroke-linecap="round"/><polyline points="1075.0,533.0 1110.4,509.3 1151.6,479.9 1193.0,456.3 1270.0,429.7 1287.7,426.2 1417.4,425.3 1461.7,413.5 1506.0,398.8 1550.2,403.2 1600.0,418.0" fill="none" stroke="#dadada" stroke-width="4.2" stroke-linejoin="round" stroke-linecap="round"/><polyline points="1110.0,340.0 1114.3,386.7 1118.6,429.0 1135.5,458.9 1163.4,503.5 1193.0,562.4 1207.7,606.0" fill="none" stroke="#dadada" stroke-width="4.2" stroke-linejoin="round" stroke-linecap="round"/><polyline points="1080.9,609.8 1119.2,662.9 1157.5,724.8 1181.0,763.0 1193.0,798.5 1198.8,848.0" fill="none" stroke="#dadada" stroke-width="4.2" stroke-linejoin="round" stroke-linecap="round"/><polyline points="1207.7,686.5 1213.6,757.2 1231.3,804.4 1240.0,848.0" fill="none" stroke="#dadada" stroke-width="4.2" stroke-linejoin="round" stroke-linecap="round"/><polyline points="1240.0,650.0 1270.0,665.8 1346.7,730.7 1417.4,780.8 1476.4,828.0 1517.7,848.0" fill="none" stroke="#dadada" stroke-width="4.2" stroke-linejoin="round" stroke-linecap="round"/><polyline points="1175.2,288.0 1270.0,288.8 1358.5,284.4 1435.0,283.0 1476.4,294.7 1511.8,306.5 1535.4,324.2 1565.0,356.0 1600.0,382.5" fill="none" stroke="#dadada" stroke-width="4.2" stroke-linejoin="round" stroke-linecap="round"/><polyline points="1506.0,303.6 1550.0,259.3 1600.0,206.0" fill="none" stroke="#dadada" stroke-width="4.2" stroke-linejoin="round" stroke-linecap="round"/><polyline points="1166.4,106.0 1175.2,288.8" fill="none" stroke="#dadada" stroke-width="4.2" stroke-linejoin="round" stroke-linecap="round"/><polyline points="1086.8,106.0 1080.9,179.7 1075.0,224.0 1072.0,253.5 1075.0,312.4 1080.9,356.0" fill="none" stroke="#dadada" stroke-width="4.2" stroke-linejoin="round" stroke-linecap="round"/><text x="465.8" y="115.3" font-size="10.55" text-anchor="middle" textLength="48.5" lengthAdjust="spacing" font-family="Liberation Sans" fill="#fff" stroke="#fff" stroke-width="2.4" stroke-linejoin="round">KARALA</text><text x="465.8" y="115.3" font-size="10.55" text-anchor="middle" textLength="48.5" lengthAdjust="spacing" font-family="Liberation Sans" fill="#595959" stroke="#595959" stroke-width="0.35">KARALA</text><path d="M452.0 119.9H479.0M453.8 119.9Q459.2 122.2 455.6 124.5Q460.1 126.7 454.7 127.5M468.2 119.9V127.5M462.4 121.4Q467.8 123.3 463.2 125.6L466.9 127.5M471.8 119.9Q477.2 122.2 473.6 124.5Q478.1 126.7 472.7 127.5" fill="none" stroke="#fff" stroke-width="3.26" stroke-linecap="round" stroke-linejoin="round"/><path d="M452.0 119.9H479.0M453.8 119.9Q459.2 122.2 455.6 124.5Q460.1 126.7 454.7 127.5M468.2 119.9V127.5M462.4 121.4Q467.8 123.3 463.2 125.6L466.9 127.5M471.8 119.9Q477.2 122.2 473.6 124.5Q478.1 126.7 472.7 127.5" fill="none" stroke="#666666" stroke-width="1.26" stroke-linecap="round"/><text x="544.5" y="139.2" font-size="7.50" text-anchor="middle" textLength="53.0" lengthAdjust="spacing" font-family="Liberation Sans" fill="#fff" stroke="#fff" stroke-width="2.4" stroke-linejoin="round">BEGUM PUR</text><text x="544.5" y="139.2" font-size="7.50" text-anchor="middle" textLength="53.0" lengthAdjust="spacing" font-family="Liberation Sans" fill="#595959" stroke="#595959" stroke-width="0.35">BEGUM PUR</text><path d="M530.0 142.6H558.0M531.1 142.6Q534.5 144.5 532.2 146.4Q535.0 148.4 531.7 149.0M540.1 142.6V149.0M536.4 144.2V147.1H540.1M545.7 142.6V149.0M544.7 146.4A1.4 1.6 0 1 0 544.7 146.5M551.3 142.6V149.0M547.6 144.2V147.1H551.3M556.9 142.6V149.0M553.2 143.9Q556.6 145.5 553.8 147.4L556.0 149.0" fill="none" stroke="#fff" stroke-width="3.08" stroke-linecap="round" stroke-linejoin="round"/><path d="M530.0 142.6H558.0M531.1 142.6Q534.5 144.5 532.2 146.4Q535.0 148.4 531.7 149.0M540.1 142.6V149.0M536.4 144.2V147.1H540.1M545.7 142.6V149.0M544.7 146.4A1.4 1.6 0 1 0 544.7 146.5M551.3 142.6V149.0M547.6 144.2V147.1H551.3M556.9 142.6V149.0M553.2 143.9Q556.6 145.5 553.8 147.4L556.0 149.0" fill="none" stroke="#666666" stroke-width="1.08" stroke-linecap="round"/><text x="618.0" y="125.2" font-size="7.60" text-anchor="middle" textLength="50.0" lengthAdjust="spacing" font-family="Liberation Sans" fill="#fff" stroke="#fff" stroke-width="2.4" stroke-linejoin="round">SECTOR 24</text><text x="618.0" y="125.2" font-size="7.60" text-anchor="middle" textLength="50.0" lengthAdjust="spacing" font-family="Liberation Sans" fill="#595959" stroke="#595959" stroke-width="0.35">SECTOR 24</text><path d="M598.0 127.8H636.0M599.5 127.8Q604.1 129.7 601.0 131.6Q604.8 133.6 600.3 134.2M611.7 127.8V134.2M610.3 131.6A1.9 1.6 0 1 0 610.3 131.7M614.7 127.8Q619.3 129.7 616.2 131.6Q620.0 133.6 615.5 134.2M626.9 127.8V134.2M621.7 129.7Q625.0 128.4 625.0 131.0Q624.6 134.2 621.6 133.3M629.9 127.8Q634.5 129.7 631.4 131.6Q635.2 133.6 630.7 134.2" fill="none" stroke="#fff" stroke-width="3.08" stroke-linecap="round" stroke-linejoin="round"/><path d="M598.0 127.8H636.0M599.5 127.8Q604.1 129.7 601.0 131.6Q604.8 133.6 600.3 134.2M611.7 127.8V134.2M610.3 131.6A1.9 1.6 0 1 0 610.3 131.7M614.7 127.8Q619.3 129.7 616.2 131.6Q620.0 133.6 615.5 134.2M626.9 127.8V134.2M621.7 129.7Q625.0 128.4 625.0 131.0Q624.6 134.2 621.6 133.3M629.9 127.8Q634.5 129.7 631.4 131.6Q635.2 133.6 630.7 134.2" fill="none" stroke="#666666" stroke-width="1.08" stroke-linecap="round"/><text x="473.0" y="269.1" font-size="8.03" text-anchor="middle" textLength="40.0" lengthAdjust="spacing" font-family="Liberation Sans" fill="#fff" stroke="#fff" stroke-width="2.4" stroke-linejoin="round">MUNDKA</text><text x="473.0" y="269.1" font-size="8.03" text-anchor="middle" textLength="40.0" lengthAdjust="spacing" font-family="Liberation Sans" fill="#595959" stroke="#595959" stroke-width="0.35">MUNDKA</text><path d="M462.0 271.8H484.0M463.1 271.8Q466.4 273.7 464.2 275.6Q466.9 277.6 463.6 278.2M471.9 271.8V278.2M468.3 273.1Q471.6 274.7 468.9 276.6L471.1 278.2M474.1 271.8Q477.4 273.7 475.2 275.6Q477.9 277.6 474.6 278.2M482.9 271.8V278.2M479.2 273.7Q481.5 272.4 481.5 275.0Q481.2 278.2 479.1 277.3" fill="none" stroke="#fff" stroke-width="3.08" stroke-linecap="round" stroke-linejoin="round"/><path d="M462.0 271.8H484.0M463.1 271.8Q466.4 273.7 464.2 275.6Q466.9 277.6 463.6 278.2M471.9 271.8V278.2M468.3 273.1Q471.6 274.7 468.9 276.6L471.1 278.2M474.1 271.8Q477.4 273.7 475.2 275.6Q477.9 277.6 474.6 278.2M482.9 271.8V278.2M479.2 273.7Q481.5 272.4 481.5 275.0Q481.2 278.2 479.1 277.3" fill="none" stroke="#666666" stroke-width="1.08" stroke-linecap="round"/><text x="562.5" y="269.9" font-size="7.76" text-anchor="middle" textLength="41.0" lengthAdjust="spacing" font-family="Liberation Sans" fill="#fff" stroke="#fff" stroke-width="2.4" stroke-linejoin="round">NANGLOI</text><text x="562.5" y="269.9" font-size="7.76" text-anchor="middle" textLength="41.0" lengthAdjust="spacing" font-family="Liberation Sans" fill="#595959" stroke="#595959" stroke-width="0.35">NANGLOI</text><path d="M548.0 272.8H575.0M549.4 272.8Q553.4 274.7 550.7 276.6Q554.1 278.6 550.0 279.2M560.1 272.8V279.2M555.8 274.4V277.3H560.1M566.9 272.8V279.2M562.5 274.1Q566.6 275.7 563.2 277.6L565.9 279.2M573.6 272.8V279.2M569.3 274.1Q573.3 275.7 569.9 277.6L572.6 279.2" fill="none" stroke="#fff" stroke-width="3.08" stroke-linecap="round" stroke-linejoin="round"/><path d="M548.0 272.8H575.0M549.4 272.8Q553.4 274.7 550.7 276.6Q554.1 278.6 550.0 279.2M560.1 272.8V279.2M555.8 274.4V277.3H560.1M566.9 272.8V279.2M562.5 274.1Q566.6 275.7 563.2 277.6L565.9 279.2M573.6 272.8V279.2M569.3 274.1Q573.3 275.7 569.9 277.6L572.6 279.2" fill="none" stroke="#666666" stroke-width="1.08" stroke-linecap="round"/><text x="309.5" y="268.3" font-size="11.34" text-anchor="middle" textLength="25.0" lengthAdjust="spacing" font-family="Liberation Sans" fill="#fff" stroke="#fff" stroke-width="2.4" stroke-linejoin="round">LAN</text><text x="309.5" y="268.3" font-size="11.34" text-anchor="middle" textLength="25.0" lengthAdjust="spacing" font-family="Liberation Sans" fill="#595959" stroke="#595959" stroke-width="0.35">LAN</text><path d="M297.0 271.2H310.0M298.3 271.2Q302.2 273.5 299.6 275.8Q302.9 278.0 298.9 278.8M308.7 271.2V278.8M304.5 272.7Q308.4 274.6 305.1 276.9L307.7 278.8" fill="none" stroke="#fff" stroke-width="3.26" stroke-linecap="round" stroke-linejoin="round"/><path d="M297.0 271.2H310.0M298.3 271.2Q302.2 273.5 299.6 275.8Q302.9 278.0 298.9 278.8M308.7 271.2V278.8M304.5 272.7Q308.4 274.6 305.1 276.9L307.7 278.8" fill="none" stroke="#666666" stroke-width="1.26" stroke-linecap="round"/><text x="629.0" y="233.3" font-size="7.85" text-anchor="middle" textLength="62.0" lengthAdjust="spacing" font-family="Liberation Sans" fill="#fff" stroke="#fff" stroke-width="2.4" stroke-linejoin="round">MANGOLPURI</text><text x="629.0" y="233.3" font-size="7.85" text-anchor="middle" textLength="62.0" lengthAdjust="spacing" font-family="Liberation Sans" fill="#595959" stroke="#595959" stroke-width="0.35">MANGOLPURI</text><path d="M612.0 236.8H645.0M617.3 236.8V243.2M613.0 238.1Q617.0 239.7 613.6 241.6L616.3 243.2M623.9 236.8V243.2M622.7 240.6A1.6 1.6 0 1 0 622.7 240.7M630.5 236.8V243.2M626.0 238.7Q628.8 237.4 628.8 240.0Q628.5 243.2 625.9 242.3M637.1 236.8V243.2M632.8 238.4V241.3H637.1M643.7 236.8V243.2M642.5 240.6A1.6 1.6 0 1 0 642.5 240.7" fill="none" stroke="#fff" stroke-width="3.08" stroke-linecap="round" stroke-linejoin="round"/><path d="M612.0 236.8H645.0M617.3 236.8V243.2M613.0 238.1Q617.0 239.7 613.6 241.6L616.3 243.2M623.9 236.8V243.2M622.7 240.6A1.6 1.6 0 1 0 622.7 240.7M630.5 236.8V243.2M626.0 238.7Q628.8 237.4 628.8 240.0Q628.5 243.2 625.9 242.3M637.1 236.8V243.2M632.8 238.4V241.3H637.1M643.7 236.8V243.2M642.5 240.6A1.6 1.6 0 1 0 642.5 240.7" fill="none" stroke="#666666" stroke-width="1.08" stroke-linecap="round"/><path d="M614.0 244.8H617.9M614.8 244.8Q617.1 246.7 615.6 248.6Q617.5 250.6 615.2 251.2M622.6 244.8H642.0M627.7 244.8V251.2M623.5 246.4V249.3H627.7M630.3 244.8Q634.2 246.7 631.6 248.6Q634.9 250.6 631.0 251.2M640.7 244.8V251.2M636.3 246.7Q639.1 245.4 639.1 248.0Q638.8 251.2 636.2 250.3" fill="none" stroke="#fff" stroke-width="3.08" stroke-linecap="round" stroke-linejoin="round"/><path d="M614.0 244.8H617.9M614.8 244.8Q617.1 246.7 615.6 248.6Q617.5 250.6 615.2 251.2M622.6 244.8H642.0M627.7 244.8V251.2M623.5 246.4V249.3H627.7M630.3 244.8Q634.2 246.7 631.6 248.6Q634.9 250.6 631.0 251.2M640.7 244.8V251.2M636.3 246.7Q639.1 245.4 639.1 248.0Q638.8 251.2 636.2 250.3" fill="none" stroke="#666666" stroke-width="1.08" stroke-linecap="round"/><text x="631.5" y="309.3" font-size="10.56" text-anchor="middle" textLength="99.0" lengthAdjust="spacing" font-family="Liberation Sans" fill="#fff" stroke="#fff" stroke-width="2.4" stroke-linejoin="round">PASCHIM VIHAR</text><text x="631.5" y="309.3" font-size="10.56" text-anchor="middle" textLength="99.0" lengthAdjust="spacing" font-family="Liberation Sans" fill="#595959" stroke="#595959" stroke-width="0.35">PASCHIM VIHAR</text><path d="M603.0 314.0H630.5M608.5 314.0V321.6M604.0 315.5Q608.2 317.4 604.7 319.7L607.5 321.6M615.4 314.0V321.6M614.2 318.6A1.7 1.9 0 1 0 614.2 318.6M622.3 314.0V321.6M621.0 318.6A1.7 1.9 0 1 0 621.0 318.6M629.2 314.0V321.6M624.5 316.3Q627.4 314.8 627.4 317.8Q627.1 321.6 624.3 320.4M636.0 314.0H659.0M642.2 314.0V321.6M637.2 315.5Q641.8 317.4 638.0 319.7L641.0 321.6M649.8 314.0V321.6M648.4 318.6A1.9 1.9 0 1 0 648.4 318.6M657.5 314.0V321.6M656.1 318.6A1.9 1.9 0 1 0 656.1 318.6" fill="none" stroke="#fff" stroke-width="3.26" stroke-linecap="round" stroke-linejoin="round"/><path d="M603.0 314.0H630.5M608.5 314.0V321.6M604.0 315.5Q608.2 317.4 604.7 319.7L607.5 321.6M615.4 314.0V321.6M614.2 318.6A1.7 1.9 0 1 0 614.2 318.6M622.3 314.0V321.6M621.0 318.6A1.7 1.9 0 1 0 621.0 318.6M629.2 314.0V321.6M624.5 316.3Q627.4 314.8 627.4 317.8Q627.1 321.6 624.3 320.4M636.0 314.0H659.0M642.2 314.0V321.6M637.2 315.5Q641.8 317.4 638.0 319.7L641.0 321.6M649.8 314.0V321.6M648.4 318.6A1.9 1.9 0 1 0 648.4 318.6M657.5 314.0V321.6M656.1 318.6A1.9 1.9 0 1 0 656.1 318.6" fill="none" stroke="#666666" stroke-width="1.26" stroke-linecap="round"/><text x="770.2" y="347.4" font-size="7.93" text-anchor="middle" textLength="59.5" lengthAdjust="spacing" font-family="Liberation Sans" fill="#fff" stroke="#fff" stroke-width="2.4" stroke-linejoin="round">MOTI NAGAR</text><text x="770.2" y="347.4" font-size="7.93" text-anchor="middle" textLength="59.5" lengthAdjust="spacing" font-family="Liberation Sans" fill="#595959" stroke="#595959" stroke-width="0.35">MOTI NAGAR</text><text x="712.6" y="390.9" font-size="7.70" text-anchor="middle" textLength="39.8" lengthAdjust="spacing" font-family="Liberation Sans" fill="#fff" stroke="#fff" stroke-width="2.4" stroke-linejoin="round">RAJOURI</text><text x="712.6" y="390.9" font-size="7.70" text-anchor="middle" textLength="39.8" lengthAdjust="spacing" font-family="Liberation Sans" fill="#595959" stroke="#595959" stroke-width="0.35">RAJOURI</text><text x="712.5" y="399.1" font-size="7.51" text-anchor="middle" textLength="37.0" lengthAdjust="spacing" font-family="Liberation Sans" fill="#fff" stroke="#fff" stroke-width="2.4" stroke-linejoin="round">GARDEN</text><text x="712.5" y="399.1" font-size="7.51" text-anchor="middle" textLength="37.0" lengthAdjust="spacing" font-family="Liberation Sans" fill="#595959" stroke="#595959" stroke-width="0.35">GARDEN</text><path d="M690.0 402.5H710.5M694.1 402.5V408.9M690.6 404.4Q692.8 403.1 692.8 405.7Q692.6 408.9 690.5 408.0M699.2 402.5V408.9M698.3 406.3A1.3 1.6 0 1 0 698.3 406.4M704.3 402.5V408.9M701.0 403.8Q704.1 405.4 701.5 407.3L703.6 408.9M709.4 402.5V408.9M706.1 403.8Q709.2 405.4 706.6 407.3L708.7 408.9M714.5 402.5H735.0M718.6 402.5V408.9M715.3 404.1V407.0H718.6M723.8 402.5V408.9M720.3 404.4Q722.5 403.1 722.5 405.7Q722.2 408.9 720.2 408.0M725.8 402.5Q728.9 404.4 726.8 406.3Q729.4 408.3 726.3 408.9M734.0 402.5V408.9M730.7 404.1V407.0H734.0" fill="none" stroke="#fff" stroke-width="3.08" stroke-linecap="round" stroke-linejoin="round"/><path d="M690.0 402.5H710.5M694.1 402.5V408.9M690.6 404.4Q692.8 403.1 692.8 405.7Q692.6 408.9 690.5 408.0M699.2 402.5V408.9M698.3 406.3A1.3 1.6 0 1 0 698.3 406.4M704.3 402.5V408.9M701.0 403.8Q704.1 405.4 701.5 407.3L703.6 408.9M709.4 402.5V408.9M706.1 403.8Q709.2 405.4 706.6 407.3L708.7 408.9M714.5 402.5H735.0M718.6 402.5V408.9M715.3 404.1V407.0H718.6M723.8 402.5V408.9M720.3 404.4Q722.5 403.1 722.5 405.7Q722.2 408.9 720.2 408.0M725.8 402.5Q728.9 404.4 726.8 406.3Q729.4 408.3 726.3 408.9M734.0 402.5V408.9M730.7 404.1V407.0H734.0" fill="none" stroke="#666666" stroke-width="1.08" stroke-linecap="round"/><text x="757.4" y="424.8" font-size="10.49" text-anchor="middle" textLength="54.8" lengthAdjust="spacing" font-family="Liberation Sans" fill="#fff" stroke="#fff" stroke-width="2.4" stroke-linejoin="round">NARAINA</text><text x="757.4" y="424.8" font-size="10.49" text-anchor="middle" textLength="54.8" lengthAdjust="spacing" font-family="Liberation Sans" fill="#595959" stroke="#595959" stroke-width="0.35">NARAINA</text><path d="M737.0 428.8H777.0M739.0 428.8Q745.0 431.1 741.0 433.4Q746.0 435.6 740.0 436.4M749.0 428.8Q755.0 431.1 751.0 433.4Q756.0 435.6 750.0 436.4M759.0 428.8Q765.0 431.1 761.0 433.4Q766.0 435.6 760.0 436.4M775.0 428.8V436.4M773.2 433.4A2.5 1.9 0 1 0 773.2 433.4" fill="none" stroke="#fff" stroke-width="3.26" stroke-linecap="round" stroke-linejoin="round"/><path d="M737.0 428.8H777.0M739.0 428.8Q745.0 431.1 741.0 433.4Q746.0 435.6 740.0 436.4M749.0 428.8Q755.0 431.1 751.0 433.4Q756.0 435.6 750.0 436.4M759.0 428.8Q765.0 431.1 761.0 433.4Q766.0 435.6 760.0 436.4M775.0 428.8V436.4M773.2 433.4A2.5 1.9 0 1 0 773.2 433.4" fill="none" stroke="#666666" stroke-width="1.26" stroke-linecap="round"/><text x="843.8" y="425.2" font-size="12" font-style="italic" text-anchor="middle" textLength="50.1" lengthAdjust="spacingAndGlyphs" font-family="Liberation Sans" fill="#fff" stroke="#fff" stroke-width="2.4" stroke-linejoin="round">Pusa Hill</text><text x="843.8" y="425.2" font-size="12" font-style="italic" text-anchor="middle" textLength="50.1" lengthAdjust="spacingAndGlyphs" font-family="Liberation Sans" fill="#6e6e6e">Pusa Hill</text><text x="843.5" y="438.3" font-size="12" font-style="italic" text-anchor="middle" textLength="35.0" lengthAdjust="spacingAndGlyphs" font-family="Liberation Sans" fill="#fff" stroke="#fff" stroke-width="2.4" stroke-linejoin="round">Forest</text><text x="843.5" y="438.3" font-size="12" font-style="italic" text-anchor="middle" textLength="35.0" lengthAdjust="spacingAndGlyphs" font-family="Liberation Sans" fill="#6e6e6e">Forest</text><path d="M827.0 442.8H843.1M833.4 442.8V449.2M828.2 444.4V447.3H833.4M841.5 442.8V449.2M836.3 444.4V447.3H841.5M847.9 442.8H860.0M852.8 442.8V449.2M851.7 446.6A1.5 1.6 0 1 0 851.7 446.7M855.2 442.8Q858.8 444.7 856.4 446.6Q859.4 448.6 855.8 449.2" fill="none" stroke="#fff" stroke-width="3.08" stroke-linecap="round" stroke-linejoin="round"/><path d="M827.0 442.8H843.1M833.4 442.8V449.2M828.2 444.4V447.3H833.4M841.5 442.8V449.2M836.3 444.4V447.3H841.5M847.9 442.8H860.0M852.8 442.8V449.2M851.7 446.6A1.5 1.6 0 1 0 851.7 446.7M855.2 442.8Q858.8 444.7 856.4 446.6Q859.4 448.6 855.8 449.2" fill="none" stroke="#666666" stroke-width="1.08" stroke-linecap="round"/><path d="M833.0 452.5H855.0M837.4 452.5V458.9M833.8 454.1V457.0H837.4M842.9 452.5V458.9M839.2 454.4Q841.5 453.1 841.5 455.7Q841.2 458.9 839.0 458.0M848.4 452.5V458.9M844.8 453.8Q848.1 455.4 845.4 457.3L847.6 458.9M853.9 452.5V458.9M850.3 454.1V457.0H853.9" fill="none" stroke="#fff" stroke-width="3.08" stroke-linecap="round" stroke-linejoin="round"/><path d="M833.0 452.5H855.0M837.4 452.5V458.9M833.8 454.1V457.0H837.4M842.9 452.5V458.9M839.2 454.4Q841.5 453.1 841.5 455.7Q841.2 458.9 839.0 458.0M848.4 452.5V458.9M844.8 453.8Q848.1 455.4 845.4 457.3L847.6 458.9M853.9 452.5V458.9M850.3 454.1V457.0H853.9" fill="none" stroke="#666666" stroke-width="1.08" stroke-linecap="round"/><text x="574.5" y="404.2" font-size="10.26" text-anchor="middle" textLength="65.4" lengthAdjust="spacing" font-family="Liberation Sans" fill="#fff" stroke="#fff" stroke-width="2.4" stroke-linejoin="round">VIKASPURI</text><text x="574.5" y="404.2" font-size="10.26" text-anchor="middle" textLength="65.4" lengthAdjust="spacing" font-family="Liberation Sans" fill="#595959" stroke="#595959" stroke-width="0.35">VIKASPURI</text><path d="M551.0 408.2H598.0M552.9 408.2Q558.5 410.5 554.8 412.8Q559.5 415.0 553.8 415.8M567.9 408.2V415.8M561.5 410.5Q565.6 409.0 565.6 412.0Q565.1 415.8 561.3 414.6M577.3 408.2V415.8M571.2 409.7Q576.8 411.6 572.1 413.9L575.9 415.8M586.7 408.2V415.8M580.6 409.7Q586.2 411.6 581.6 413.9L585.3 415.8M596.1 408.2V415.8M590.0 410.1V413.5H596.1" fill="none" stroke="#fff" stroke-width="3.26" stroke-linecap="round" stroke-linejoin="round"/><path d="M551.0 408.2H598.0M552.9 408.2Q558.5 410.5 554.8 412.8Q559.5 415.0 553.8 415.8M567.9 408.2V415.8M561.5 410.5Q565.6 409.0 565.6 412.0Q565.1 415.8 561.3 414.6M577.3 408.2V415.8M571.2 409.7Q576.8 411.6 572.1 413.9L575.9 415.8M586.7 408.2V415.8M580.6 409.7Q586.2 411.6 581.6 413.9L585.3 415.8M596.1 408.2V415.8M590.0 410.1V413.5H596.1" fill="none" stroke="#666666" stroke-width="1.26" stroke-linecap="round"/><text x="618.0" y="456.3" font-size="10.52" text-anchor="middle" textLength="70.0" lengthAdjust="spacing" font-family="Liberation Sans" fill="#fff" stroke="#fff" stroke-width="2.4" stroke-linejoin="round">JANAKPURI</text><text x="618.0" y="456.3" font-size="10.52" text-anchor="middle" textLength="70.0" lengthAdjust="spacing" font-family="Liberation Sans" fill="#595959" stroke="#595959" stroke-width="0.35">JANAKPURI</text><path d="M598.0 460.0H640.0M606.4 460.0V467.6M599.3 462.3Q603.8 460.8 603.8 463.8Q603.2 467.6 599.0 466.4M610.6 460.0Q616.9 462.3 612.7 464.6Q618.0 466.8 611.6 467.6M627.4 460.0V467.6M625.5 464.6A2.6 1.9 0 1 0 625.5 464.6M631.6 460.0Q637.9 462.3 633.7 464.6Q639.0 466.8 632.6 467.6" fill="none" stroke="#fff" stroke-width="3.26" stroke-linecap="round" stroke-linejoin="round"/><path d="M598.0 460.0H640.0M606.4 460.0V467.6M599.3 462.3Q603.8 460.8 603.8 463.8Q603.2 467.6 599.0 466.4M610.6 460.0Q616.9 462.3 612.7 464.6Q618.0 466.8 611.6 467.6M627.4 460.0V467.6M625.5 464.6A2.6 1.9 0 1 0 625.5 464.6M631.6 460.0Q637.9 462.3 633.7 464.6Q639.0 466.8 632.6 467.6" fill="none" stroke="#666666" stroke-width="1.26" stroke-linecap="round"/><text x="893.2" y="353.0" font-size="7.54" text-anchor="middle" textLength="57.6" lengthAdjust="spacing" font-family="Liberation Sans" fill="#fff" stroke="#fff" stroke-width="2.4" stroke-linejoin="round">KAROL BAGH</text><text x="893.2" y="353.0" font-size="7.54" text-anchor="middle" textLength="57.6" lengthAdjust="spacing" font-family="Liberation Sans" fill="#595959" stroke="#595959" stroke-width="0.35">KAROL BAGH</text><path d="M877.0 356.8H893.1M883.4 356.8V363.2M878.0 358.7Q881.4 357.4 881.4 360.0Q881.0 363.2 877.8 362.3M891.5 356.8V363.2M886.3 358.4V361.3H891.5M897.9 356.8H910.0M902.8 356.8V363.2M898.8 358.1Q902.5 359.7 899.4 361.6L901.9 363.2M908.8 356.8V363.2M904.9 358.1Q908.5 359.7 905.5 361.6L907.9 363.2" fill="none" stroke="#fff" stroke-width="3.08" stroke-linecap="round" stroke-linejoin="round"/><path d="M877.0 356.8H893.1M883.4 356.8V363.2M878.0 358.7Q881.4 357.4 881.4 360.0Q881.0 363.2 877.8 362.3M891.5 356.8V363.2M886.3 358.4V361.3H891.5M897.9 356.8H910.0M902.8 356.8V363.2M898.8 358.1Q902.5 359.7 899.4 361.6L901.9 363.2M908.8 356.8V363.2M904.9 358.1Q908.5 359.7 905.5 361.6L907.9 363.2" fill="none" stroke="#666666" stroke-width="1.08" stroke-linecap="round"/><text x="804.6" y="163.2" font-size="10.39" text-anchor="middle" textLength="101.7" lengthAdjust="spacing" font-family="Liberation Sans" fill="#fff" stroke="#fff" stroke-width="2.4" stroke-linejoin="round">SHALIMAR BAGH</text><text x="804.6" y="163.2" font-size="10.39" text-anchor="middle" textLength="101.7" lengthAdjust="spacing" font-family="Liberation Sans" fill="#595959" stroke="#595959" stroke-width="0.35">SHALIMAR BAGH</text><path d="M774.5 167.7H809.2M781.4 167.7V175.3M775.8 169.2Q781.0 171.1 776.7 173.4L780.1 175.3M790.1 167.7V175.3M784.5 169.6V173.0H790.1M798.8 167.7V175.3M797.2 172.3A2.2 1.9 0 1 0 797.2 172.3M807.5 167.7V175.3M805.9 172.3A2.2 1.9 0 1 0 805.9 172.3M815.2 167.7H835.0M823.1 167.7V175.3M816.4 170.0Q820.6 168.5 820.6 171.5Q820.1 175.3 816.2 174.1M833.0 167.7V175.3M826.6 169.2Q832.5 171.1 827.6 173.4L831.5 175.3" fill="none" stroke="#fff" stroke-width="3.26" stroke-linecap="round" stroke-linejoin="round"/><path d="M774.5 167.7H809.2M781.4 167.7V175.3M775.8 169.2Q781.0 171.1 776.7 173.4L780.1 175.3M790.1 167.7V175.3M784.5 169.6V173.0H790.1M798.8 167.7V175.3M797.2 172.3A2.2 1.9 0 1 0 797.2 172.3M807.5 167.7V175.3M805.9 172.3A2.2 1.9 0 1 0 805.9 172.3M815.2 167.7H835.0M823.1 167.7V175.3M816.4 170.0Q820.6 168.5 820.6 171.5Q820.1 175.3 816.2 174.1M833.0 167.7V175.3M826.6 169.2Q832.5 171.1 827.6 173.4L831.5 175.3" fill="none" stroke="#666666" stroke-width="1.26" stroke-linecap="round"/><text x="922.5" y="127.1" font-size="12" text-anchor="middle" textLength="131.0" lengthAdjust="spacingAndGlyphs" font-family="Liberation Sans" fill="#fff" stroke="#fff" stroke-width="2.4" stroke-linejoin="round">Nirankari Sarovar delhi</text><text x="922.5" y="127.1" font-size="12" text-anchor="middle" textLength="131.0" lengthAdjust="spacingAndGlyphs" font-family="Liberation Sans" fill="#5a5a5a" stroke="#5a5a5a" stroke-width="0.25">Nirankari Sarovar delhi</text><path d="M883.0 130.8H913.3M887.8 130.8V137.2M883.9 132.1Q887.5 133.7 884.5 135.6L886.9 137.2M890.3 130.8Q893.9 132.7 891.5 134.6Q894.5 136.6 890.9 137.2M900.0 130.8V137.2M896.0 132.4V135.3H900.0M906.0 130.8V137.2M901.9 132.7Q904.5 131.4 904.5 134.0Q904.2 137.2 901.8 136.3M912.1 130.8V137.2M908.1 132.1Q911.8 133.7 908.7 135.6L911.2 137.2M917.8 130.8H936.7M922.9 130.8V137.2M918.8 132.4V135.3H922.9M925.4 130.8Q929.2 132.7 926.7 134.6Q929.8 136.6 926.0 137.2M935.5 130.8V137.2M931.4 132.4V135.3H935.5M941.3 130.8H964.0M945.8 130.8V137.2M942.1 132.1Q945.5 133.7 942.7 135.6L945.0 137.2M948.1 130.8Q951.5 132.7 949.2 134.6Q952.1 136.6 948.7 137.2M957.2 130.8V137.2M953.5 132.1Q956.9 133.7 954.1 135.6L956.3 137.2M962.9 130.8V137.2M959.2 132.4V135.3H962.9" fill="none" stroke="#fff" stroke-width="3.08" stroke-linecap="round" stroke-linejoin="round"/><path d="M883.0 130.8H913.3M887.8 130.8V137.2M883.9 132.1Q887.5 133.7 884.5 135.6L886.9 137.2M890.3 130.8Q893.9 132.7 891.5 134.6Q894.5 136.6 890.9 137.2M900.0 130.8V137.2M896.0 132.4V135.3H900.0M906.0 130.8V137.2M901.9 132.7Q904.5 131.4 904.5 134.0Q904.2 137.2 901.8 136.3M912.1 130.8V137.2M908.1 132.1Q911.8 133.7 908.7 135.6L911.2 137.2M917.8 130.8H936.7M922.9 130.8V137.2M918.8 132.4V135.3H922.9M925.4 130.8Q929.2 132.7 926.7 134.6Q929.8 136.6 926.0 137.2M935.5 130.8V137.2M931.4 132.4V135.3H935.5M941.3 130.8H964.0M945.8 130.8V137.2M942.1 132.1Q945.5 133.7 942.7 135.6L945.0 137.2M948.1 130.8Q951.5 132.7 949.2 134.6Q952.1 136.6 948.7 137.2M957.2 130.8V137.2M953.5 132.1Q956.9 133.7 954.1 135.6L956.3 137.2M962.9 130.8V137.2M959.2 132.4V135.3H962.9" fill="none" stroke="#666666" stroke-width="1.08" stroke-linecap="round"/><text x="672.0" y="189.2" font-size="7.50" text-anchor="middle" textLength="44.0" lengthAdjust="spacing" font-family="Liberation Sans" fill="#fff" stroke="#fff" stroke-width="2.4" stroke-linejoin="round">SECTOR 3</text><text x="672.0" y="189.2" font-size="7.50" text-anchor="middle" textLength="44.0" lengthAdjust="spacing" font-family="Liberation Sans" fill="#595959" stroke="#595959" stroke-width="0.35">SECTOR 3</text><path d="M657.0 192.8H679.7M661.5 192.8V199.2M657.9 194.1Q661.3 195.7 658.4 197.6L660.7 199.2M667.2 192.8V199.2M663.4 194.7Q665.8 193.4 665.8 196.0Q665.5 199.2 663.2 198.3M672.9 192.8V199.2M669.2 194.1Q672.6 195.7 669.8 197.6L672.0 199.2M678.5 192.8V199.2M674.9 194.4V197.3H678.5M684.2 192.8H688.0M687.2 192.8V199.2M684.8 194.4V197.3H687.2" fill="none" stroke="#fff" stroke-width="3.08" stroke-linecap="round" stroke-linejoin="round"/><path d="M657.0 192.8H679.7M661.5 192.8V199.2M657.9 194.1Q661.3 195.7 658.4 197.6L660.7 199.2M667.2 192.8V199.2M663.4 194.7Q665.8 193.4 665.8 196.0Q665.5 199.2 663.2 198.3M672.9 192.8V199.2M669.2 194.1Q672.6 195.7 669.8 197.6L672.0 199.2M678.5 192.8V199.2M674.9 194.4V197.3H678.5M684.2 192.8H688.0M687.2 192.8V199.2M684.8 194.4V197.3H687.2" fill="none" stroke="#666666" stroke-width="1.08" stroke-linecap="round"/><text x="753.0" y="217.3" font-size="9.12" text-anchor="middle" textLength="62.0" lengthAdjust="spacing" font-family="Liberation Sans" fill="#fff" stroke="#fff" stroke-width="2.4" stroke-linejoin="round">PITAMPURA</text><text x="753.0" y="217.3" font-size="9.12" text-anchor="middle" textLength="62.0" lengthAdjust="spacing" font-family="Liberation Sans" fill="#595959" stroke="#595959" stroke-width="0.35">PITAMPURA</text><path d="M743.0 219.8H772.0M747.6 219.8V226.2M743.9 221.4V224.3H747.6M753.4 219.8V226.2M752.4 223.6A1.4 1.6 0 1 0 752.4 223.7M759.2 219.8V226.2M755.5 221.4V224.3H759.2M765.0 219.8V226.2M761.1 221.7Q763.6 220.4 763.6 223.0Q763.3 226.2 761.0 225.3M770.8 219.8V226.2M767.1 221.4V224.3H770.8" fill="none" stroke="#fff" stroke-width="3.08" stroke-linecap="round" stroke-linejoin="round"/><path d="M743.0 219.8H772.0M747.6 219.8V226.2M743.9 221.4V224.3H747.6M753.4 219.8V226.2M752.4 223.6A1.4 1.6 0 1 0 752.4 223.7M759.2 219.8V226.2M755.5 221.4V224.3H759.2M765.0 219.8V226.2M761.1 221.7Q763.6 220.4 763.6 223.0Q763.3 226.2 761.0 225.3M770.8 219.8V226.2M767.1 221.4V224.3H770.8" fill="none" stroke="#666666" stroke-width="1.08" stroke-linecap="round"/><text x="860.4" y="241.2" font-size="10.41" text-anchor="middle" textLength="84.7" lengthAdjust="spacing" font-family="Liberation Sans" fill="#fff" stroke="#fff" stroke-width="2.4" stroke-linejoin="round">ASHOK VIHAR</text><text x="860.4" y="241.2" font-size="10.41" text-anchor="middle" textLength="84.7" lengthAdjust="spacing" font-family="Liberation Sans" fill="#595959" stroke="#595959" stroke-width="0.35">ASHOK VIHAR</text><path d="M830.5 245.8H853.8M839.8 245.8V253.4M831.9 248.1Q836.9 246.6 836.9 249.6Q836.3 253.4 831.7 252.2M851.5 245.8V253.4M843.6 248.1Q848.6 246.6 848.6 249.6Q848.0 253.4 843.3 252.2M860.8 245.8H890.0M868.6 245.8V253.4M862.3 247.3Q868.1 249.2 863.3 251.5L867.2 253.4M878.3 245.8V253.4M876.6 250.4A2.4 1.9 0 1 0 876.6 250.4M888.1 245.8V253.4M881.7 247.3Q887.6 249.2 882.7 251.5L886.6 253.4" fill="none" stroke="#fff" stroke-width="3.26" stroke-linecap="round" stroke-linejoin="round"/><path d="M830.5 245.8H853.8M839.8 245.8V253.4M831.9 248.1Q836.9 246.6 836.9 249.6Q836.3 253.4 831.7 252.2M851.5 245.8V253.4M843.6 248.1Q848.6 246.6 848.6 249.6Q848.0 253.4 843.3 252.2M860.8 245.8H890.0M868.6 245.8V253.4M862.3 247.3Q868.1 249.2 863.3 251.5L867.2 253.4M878.3 245.8V253.4M876.6 250.4A2.4 1.9 0 1 0 876.6 250.4M888.1 245.8V253.4M881.7 247.3Q887.6 249.2 882.7 251.5L886.6 253.4" fill="none" stroke="#666666" stroke-width="1.26" stroke-linecap="round"/><path d="M774.0 105.8H801.0M777.1 105.8V112.2M776.4 109.6A1.0 1.6 0 1 0 776.4 109.7M780.9 105.8V112.2M778.3 107.7Q780.0 106.4 780.0 109.0Q779.8 112.2 778.2 111.3M782.5 105.8Q784.8 107.7 783.3 109.6Q785.2 111.6 782.9 112.2M788.7 105.8V112.2M788.0 109.6A1.0 1.6 0 1 0 788.0 109.7M790.2 105.8Q792.5 107.7 791.0 109.6Q792.9 111.6 790.6 112.2M796.4 105.8V112.2M795.7 109.6A1.0 1.6 0 1 0 795.7 109.7M800.2 105.8V112.2M797.7 107.1Q800.0 108.7 798.1 110.6L799.6 112.2" fill="none" stroke="#fff" stroke-width="3.08" stroke-linecap="round" stroke-linejoin="round"/><path d="M774.0 105.8H801.0M777.1 105.8V112.2M776.4 109.6A1.0 1.6 0 1 0 776.4 109.7M780.9 105.8V112.2M778.3 107.7Q780.0 106.4 780.0 109.0Q779.8 112.2 778.2 111.3M782.5 105.8Q784.8 107.7 783.3 109.6Q785.2 111.6 782.9 112.2M788.7 105.8V112.2M788.0 109.6A1.0 1.6 0 1 0 788.0 109.7M790.2 105.8Q792.5 107.7 791.0 109.6Q792.9 111.6 790.6 112.2M796.4 105.8V112.2M795.7 109.6A1.0 1.6 0 1 0 795.7 109.7M800.2 105.8V112.2M797.7 107.1Q800.0 108.7 798.1 110.6L799.6 112.2" fill="none" stroke="#666666" stroke-width="1.08" stroke-linecap="round"/><path d="M781.0 112.8H794.0M786.2 112.8V119.2M782.0 114.4V117.3H786.2M792.7 112.8V119.2M791.5 116.6A1.6 1.6 0 1 0 791.5 116.7" fill="none" stroke="#fff" stroke-width="3.08" stroke-linecap="round" stroke-linejoin="round"/><path d="M781.0 112.8H794.0M786.2 112.8V119.2M782.0 114.4V117.3H786.2M792.7 112.8V119.2M791.5 116.6A1.6 1.6 0 1 0 791.5 116.7" fill="none" stroke="#666666" stroke-width="1.08" stroke-linecap="round"/><text x="965.0" y="186.2" font-size="7.50" text-anchor="middle" textLength="50.0" lengthAdjust="spacing" font-family="Liberation Sans" fill="#fff" stroke="#fff" stroke-width="2.4" stroke-linejoin="round">MUKHERJEE</text><text x="965.0" y="186.2" font-size="7.50" text-anchor="middle" textLength="50.0" lengthAdjust="spacing" font-family="Liberation Sans" fill="#595959" stroke="#595959" stroke-width="0.35">MUKHERJEE</text><text x="964.0" y="195.2" font-size="7.50" text-anchor="middle" textLength="28.0" lengthAdjust="spacing" font-family="Liberation Sans" fill="#fff" stroke="#fff" stroke-width="2.4" stroke-linejoin="round">NAGAR</text><text x="964.0" y="195.2" font-size="7.50" text-anchor="middle" textLength="28.0" lengthAdjust="spacing" font-family="Liberation Sans" fill="#595959" stroke="#595959" stroke-width="0.35">NAGAR</text><path d="M946.0 199.8H969.1M947.2 199.8Q950.6 201.7 948.3 203.6Q951.2 205.6 947.7 206.2M956.4 199.8V206.2M952.5 201.7Q955.0 200.4 955.0 203.0Q954.7 206.2 952.4 205.3M962.2 199.8V206.2M958.4 201.1Q961.9 202.7 959.0 204.6L961.3 206.2M968.0 199.8V206.2M966.9 203.6A1.4 1.6 0 1 0 966.9 203.7M973.1 199.8H983.0M974.1 199.8Q977.1 201.7 975.1 203.6Q977.5 205.6 974.6 206.2M982.0 199.8V206.2M978.8 201.1Q981.8 202.7 979.3 204.6L981.3 206.2" fill="none" stroke="#fff" stroke-width="3.08" stroke-linecap="round" stroke-linejoin="round"/><path d="M946.0 199.8H969.1M947.2 199.8Q950.6 201.7 948.3 203.6Q951.2 205.6 947.7 206.2M956.4 199.8V206.2M952.5 201.7Q955.0 200.4 955.0 203.0Q954.7 206.2 952.4 205.3M962.2 199.8V206.2M958.4 201.1Q961.9 202.7 959.0 204.6L961.3 206.2M968.0 199.8V206.2M966.9 203.6A1.4 1.6 0 1 0 966.9 203.7M973.1 199.8H983.0M974.1 199.8Q977.1 201.7 975.1 203.6Q977.5 205.6 974.6 206.2M982.0 199.8V206.2M978.8 201.1Q981.8 202.7 979.3 204.6L981.3 206.2" fill="none" stroke="#666666" stroke-width="1.08" stroke-linecap="round"/><text x="1120.8" y="120.7" font-size="7.81" text-anchor="middle" textLength="79.5" lengthAdjust="spacing" font-family="Liberation Sans" fill="#fff" stroke="#fff" stroke-width="2.4" stroke-linejoin="round">KARAWAL NAGAR</text><text x="1120.8" y="120.7" font-size="7.81" text-anchor="middle" textLength="79.5" lengthAdjust="spacing" font-family="Liberation Sans" fill="#595959" stroke="#595959" stroke-width="0.35">KARAWAL NAGAR</text><path d="M1099.0 123.8H1122.4M1105.2 123.8V130.2M1100.2 125.1Q1104.8 126.7 1100.9 128.6L1104.1 130.2M1113.0 123.8V130.2M1107.7 125.7Q1111.1 124.4 1111.1 127.0Q1110.7 130.2 1107.6 129.3M1120.8 123.8V130.2M1115.5 125.7Q1118.9 124.4 1118.9 127.0Q1118.5 130.2 1115.4 129.3M1128.0 123.8H1142.0M1133.6 123.8V130.2M1128.8 125.7Q1131.8 124.4 1131.8 127.0Q1131.5 130.2 1128.7 129.3M1140.6 123.8V130.2M1136.0 125.1Q1140.2 126.7 1136.7 128.6L1139.5 130.2" fill="none" stroke="#fff" stroke-width="3.08" stroke-linecap="round" stroke-linejoin="round"/><path d="M1099.0 123.8H1122.4M1105.2 123.8V130.2M1100.2 125.1Q1104.8 126.7 1100.9 128.6L1104.1 130.2M1113.0 123.8V130.2M1107.7 125.7Q1111.1 124.4 1111.1 127.0Q1110.7 130.2 1107.6 129.3M1120.8 123.8V130.2M1115.5 125.7Q1118.9 124.4 1118.9 127.0Q1118.5 130.2 1115.4 129.3M1128.0 123.8H1142.0M1133.6 123.8V130.2M1128.8 125.7Q1131.8 124.4 1131.8 127.0Q1131.5 130.2 1128.7 129.3M1140.6 123.8V130.2M1136.0 125.1Q1140.2 126.7 1136.7 128.6L1139.5 130.2" fill="none" stroke="#666666" stroke-width="1.08" stroke-linecap="round"/><text x="1191.3" y="110.5" font-size="9.80" text-anchor="middle" textLength="26.7" lengthAdjust="spacing" font-family="Liberation Sans" fill="#fff" stroke="#fff" stroke-width="2.4" stroke-linejoin="round">LONI</text><text x="1191.3" y="110.5" font-size="9.80" text-anchor="middle" textLength="26.7" lengthAdjust="spacing" font-family="Liberation Sans" fill="#595959" stroke="#595959" stroke-width="0.35">LONI</text><path d="M1181.0 114.6H1203.0M1189.8 114.6V122.2M1182.7 116.1Q1189.2 118.0 1183.8 120.3L1188.2 122.2M1200.8 114.6V122.2M1198.8 119.2A2.8 1.9 0 1 0 1198.8 119.2" fill="none" stroke="#fff" stroke-width="3.26" stroke-linecap="round" stroke-linejoin="round"/><path d="M1181.0 114.6H1203.0M1189.8 114.6V122.2M1182.7 116.1Q1189.2 118.0 1183.8 120.3L1188.2 122.2M1200.8 114.6V122.2M1198.8 119.2A2.8 1.9 0 1 0 1198.8 119.2" fill="none" stroke="#666666" stroke-width="1.26" stroke-linecap="round"/><text x="1085.8" y="212.2" font-size="8.07" text-anchor="middle" textLength="63.7" lengthAdjust="spacing" font-family="Liberation Sans" fill="#fff" stroke="#fff" stroke-width="2.4" stroke-linejoin="round">BHAJANPURA</text><text x="1085.8" y="212.2" font-size="8.07" text-anchor="middle" textLength="63.7" lengthAdjust="spacing" font-family="Liberation Sans" fill="#595959" stroke="#595959" stroke-width="0.35">BHAJANPURA</text><path d="M1070.0 215.4H1101.0M1076.2 215.4V221.8M1074.8 219.2A1.9 1.6 0 1 0 1074.8 219.3M1084.0 215.4V221.8M1082.6 219.2A1.9 1.6 0 1 0 1082.6 219.3M1091.7 215.4V221.8M1086.7 217.0V219.9H1091.7M1094.8 215.4Q1099.5 217.3 1096.3 219.2Q1100.2 221.2 1095.6 221.8" fill="none" stroke="#fff" stroke-width="3.08" stroke-linecap="round" stroke-linejoin="round"/><path d="M1070.0 215.4H1101.0M1076.2 215.4V221.8M1074.8 219.2A1.9 1.6 0 1 0 1074.8 219.3M1084.0 215.4V221.8M1082.6 219.2A1.9 1.6 0 1 0 1082.6 219.3M1091.7 215.4V221.8M1086.7 217.0V219.9H1091.7M1094.8 215.4Q1099.5 217.3 1096.3 219.2Q1100.2 221.2 1095.6 221.8" fill="none" stroke="#666666" stroke-width="1.08" stroke-linecap="round"/><text x="1224.0" y="205.3" font-size="10.49" text-anchor="middle" textLength="56.0" lengthAdjust="spacing" font-family="Liberation Sans" fill="#fff" stroke="#fff" stroke-width="2.4" stroke-linejoin="round">MANDOLI</text><text x="1224.0" y="205.3" font-size="10.49" text-anchor="middle" textLength="56.0" lengthAdjust="spacing" font-family="Liberation Sans" fill="#595959" stroke="#595959" stroke-width="0.35">MANDOLI</text><path d="M1206.0 209.2H1242.0M1213.2 209.2V216.8M1207.3 210.7Q1212.8 212.6 1208.2 214.9L1211.8 216.8M1222.2 209.2V216.8M1220.6 213.8A2.2 1.9 0 1 0 1220.6 213.8M1231.2 209.2V216.8M1225.1 211.5Q1229.0 210.0 1229.0 213.0Q1228.5 216.8 1224.9 215.6M1240.2 209.2V216.8M1234.3 210.7Q1239.8 212.6 1235.2 214.9L1238.8 216.8" fill="none" stroke="#fff" stroke-width="3.26" stroke-linecap="round" stroke-linejoin="round"/><path d="M1206.0 209.2H1242.0M1213.2 209.2V216.8M1207.3 210.7Q1212.8 212.6 1208.2 214.9L1211.8 216.8M1222.2 209.2V216.8M1220.6 213.8A2.2 1.9 0 1 0 1220.6 213.8M1231.2 209.2V216.8M1225.1 211.5Q1229.0 210.0 1229.0 213.0Q1228.5 216.8 1224.9 215.6M1240.2 209.2V216.8M1234.3 210.7Q1239.8 212.6 1235.2 214.9L1238.8 216.8" fill="none" stroke="#666666" stroke-width="1.26" stroke-linecap="round"/><text x="1175.0" y="246.3" font-size="10.52" text-anchor="middle" textLength="68.0" lengthAdjust="spacing" font-family="Liberation Sans" fill="#fff" stroke="#fff" stroke-width="2.4" stroke-linejoin="round">SHAHDARA</text><text x="1175.0" y="246.3" font-size="10.52" text-anchor="middle" textLength="68.0" lengthAdjust="spacing" font-family="Liberation Sans" fill="#595959" stroke="#595959" stroke-width="0.35">SHAHDARA</text><path d="M1159.0 250.2H1191.0M1160.6 250.2Q1165.4 252.5 1162.2 254.8Q1166.2 257.0 1161.4 257.8M1173.4 250.2V257.8M1172.0 254.8A2.0 1.9 0 1 0 1172.0 254.8M1181.4 250.2V257.8M1176.0 252.5Q1179.4 251.0 1179.4 254.0Q1179.0 257.8 1175.8 256.6M1184.6 250.2Q1189.4 252.5 1186.2 254.8Q1190.2 257.0 1185.4 257.8" fill="none" stroke="#fff" stroke-width="3.26" stroke-linecap="round" stroke-linejoin="round"/><path d="M1159.0 250.2H1191.0M1160.6 250.2Q1165.4 252.5 1162.2 254.8Q1166.2 257.0 1161.4 257.8M1173.4 250.2V257.8M1172.0 254.8A2.0 1.9 0 1 0 1172.0 254.8M1181.4 250.2V257.8M1176.0 252.5Q1179.4 251.0 1179.4 254.0Q1179.0 257.8 1175.8 256.6M1184.6 250.2Q1189.4 252.5 1186.2 254.8Q1190.2 257.0 1185.4 257.8" fill="none" stroke="#666666" stroke-width="1.26" stroke-linecap="round"/><text x="1126.0" y="319.1" font-size="7.65" text-anchor="middle" textLength="70.0" lengthAdjust="spacing" font-family="Liberation Sans" fill="#fff" stroke="#fff" stroke-width="2.4" stroke-linejoin="round">GANDHI NAGAR</text><text x="1126.0" y="319.1" font-size="7.65" text-anchor="middle" textLength="70.0" lengthAdjust="spacing" font-family="Liberation Sans" fill="#595959" stroke="#595959" stroke-width="0.35">GANDHI NAGAR</text><path d="M1109.0 322.5H1127.5M1110.2 322.5Q1113.9 324.4 1111.5 326.3Q1114.5 328.3 1110.8 328.9M1120.1 322.5V328.9M1116.1 324.1V327.0H1120.1M1126.2 322.5V328.9M1122.2 324.1V327.0H1126.2M1131.9 322.5H1143.0M1136.3 322.5V328.9M1132.6 324.4Q1135.0 323.1 1135.0 325.7Q1134.7 328.9 1132.5 328.0M1141.9 322.5V328.9M1138.3 324.1V327.0H1141.9" fill="none" stroke="#fff" stroke-width="3.08" stroke-linecap="round" stroke-linejoin="round"/><path d="M1109.0 322.5H1127.5M1110.2 322.5Q1113.9 324.4 1111.5 326.3Q1114.5 328.3 1110.8 328.9M1120.1 322.5V328.9M1116.1 324.1V327.0H1120.1M1126.2 322.5V328.9M1122.2 324.1V327.0H1126.2M1131.9 322.5H1143.0M1136.3 322.5V328.9M1132.6 324.4Q1135.0 323.1 1135.0 325.7Q1134.7 328.9 1132.5 328.0M1141.9 322.5V328.9M1138.3 324.1V327.0H1141.9" fill="none" stroke="#666666" stroke-width="1.08" stroke-linecap="round"/><text x="1004.5" y="316.7" font-size="7.62" text-anchor="middle" textLength="77.0" lengthAdjust="spacing" font-family="Liberation Sans" fill="#fff" stroke="#fff" stroke-width="2.4" stroke-linejoin="round">KASHMERE GATE</text><text x="1004.5" y="316.7" font-size="7.62" text-anchor="middle" textLength="77.0" lengthAdjust="spacing" font-family="Liberation Sans" fill="#595959" stroke="#595959" stroke-width="0.35">KASHMERE GATE</text><path d="M985.0 319.8H1008.8M989.8 319.8V326.2M985.9 321.4V324.3H989.8M995.7 319.8V326.2M994.6 323.6A1.5 1.6 0 1 0 994.6 323.7M1001.6 319.8V326.2M1000.6 323.6A1.5 1.6 0 1 0 1000.6 323.7M1007.6 319.8V326.2M1006.5 323.6A1.5 1.6 0 1 0 1006.5 323.7M1012.8 319.8H1023.0M1016.9 319.8V326.2M1013.4 321.7Q1015.6 320.4 1015.6 323.0Q1015.4 326.2 1013.3 325.3M1022.0 319.8V326.2M1018.7 321.4V324.3H1022.0" fill="none" stroke="#fff" stroke-width="3.08" stroke-linecap="round" stroke-linejoin="round"/><path d="M985.0 319.8H1008.8M989.8 319.8V326.2M985.9 321.4V324.3H989.8M995.7 319.8V326.2M994.6 323.6A1.5 1.6 0 1 0 994.6 323.7M1001.6 319.8V326.2M1000.6 323.6A1.5 1.6 0 1 0 1000.6 323.7M1007.6 319.8V326.2M1006.5 323.6A1.5 1.6 0 1 0 1006.5 323.7M1012.8 319.8H1023.0M1016.9 319.8V326.2M1013.4 321.7Q1015.6 320.4 1015.6 323.0Q1015.4 326.2 1013.3 325.3M1022.0 319.8V326.2M1018.7 321.4V324.3H1022.0" fill="none" stroke="#666666" stroke-width="1.08" stroke-linecap="round"/><text x="1552.3" y="192.7" font-size="10.25" text-anchor="middle" textLength="69.3" lengthAdjust="spacing" font-family="Liberation Sans" fill="#fff" stroke="#fff" stroke-width="2.4" stroke-linejoin="round">RAJ NAGAR</text><text x="1552.3" y="192.7" font-size="10.25" text-anchor="middle" textLength="69.3" lengthAdjust="spacing" font-family="Liberation Sans" fill="#595959" stroke="#595959" stroke-width="0.35">RAJ NAGAR</text><text x="1552.3" y="204.2" font-size="10.16" text-anchor="middle" textLength="69.3" lengthAdjust="spacing" font-family="Liberation Sans" fill="#fff" stroke="#fff" stroke-width="2.4" stroke-linejoin="round">EXTENSION</text><text x="1552.3" y="204.2" font-size="10.16" text-anchor="middle" textLength="69.3" lengthAdjust="spacing" font-family="Liberation Sans" fill="#595959" stroke="#595959" stroke-width="0.35">EXTENSION</text><path d="M1532.0 208.2H1549.1M1538.8 208.2V215.8M1537.3 212.8A2.1 1.9 0 1 0 1537.3 212.8M1547.4 208.2V215.8M1545.8 212.8A2.1 1.9 0 1 0 1545.8 212.8M1555.9 208.2H1573.0M1562.8 208.2V215.8M1556.9 210.5Q1560.6 209.0 1560.6 212.0Q1560.2 215.8 1556.8 214.6M1571.3 208.2V215.8M1565.7 210.1V213.5H1571.3" fill="none" stroke="#fff" stroke-width="3.26" stroke-linecap="round" stroke-linejoin="round"/><path d="M1532.0 208.2H1549.1M1538.8 208.2V215.8M1537.3 212.8A2.1 1.9 0 1 0 1537.3 212.8M1547.4 208.2V215.8M1545.8 212.8A2.1 1.9 0 1 0 1545.8 212.8M1555.9 208.2H1573.0M1562.8 208.2V215.8M1556.9 210.5Q1560.6 209.0 1560.6 212.0Q1560.2 215.8 1556.8 214.6M1571.3 208.2V215.8M1565.7 210.1V213.5H1571.3" fill="none" stroke="#666666" stroke-width="1.26" stroke-linecap="round"/><path d="M1531.0 219.6H1574.0M1537.9 219.6V227.2M1536.3 224.2A2.1 1.9 0 1 0 1536.3 224.2M1541.3 219.6Q1546.5 221.9 1543.0 224.2Q1547.3 226.4 1542.2 227.2M1555.1 219.6V227.2M1549.2 221.9Q1552.9 220.4 1552.9 223.4Q1552.5 227.2 1549.1 226.0M1558.5 219.6Q1563.7 221.9 1560.2 224.2Q1564.5 226.4 1559.4 227.2M1567.1 219.6Q1572.3 221.9 1568.8 224.2Q1573.1 226.4 1568.0 227.2" fill="none" stroke="#fff" stroke-width="3.26" stroke-linecap="round" stroke-linejoin="round"/><path d="M1531.0 219.6H1574.0M1537.9 219.6V227.2M1536.3 224.2A2.1 1.9 0 1 0 1536.3 224.2M1541.3 219.6Q1546.5 221.9 1543.0 224.2Q1547.3 226.4 1542.2 227.2M1555.1 219.6V227.2M1549.2 221.9Q1552.9 220.4 1552.9 223.4Q1552.5 227.2 1549.1 226.0M1558.5 219.6Q1563.7 221.9 1560.2 224.2Q1564.5 226.4 1559.4 227.2M1567.1 219.6Q1572.3 221.9 1568.8 224.2Q1573.1 226.4 1568.0 227.2" fill="none" stroke="#666666" stroke-width="1.26" stroke-linecap="round"/><text x="1582.5" y="267.2" font-size="10.27" text-anchor="middle" textLength="35.0" lengthAdjust="spacing" font-family="Liberation Sans" fill="#fff" stroke="#fff" stroke-width="2.4" stroke-linejoin="round">RAJ N</text><text x="1582.5" y="267.2" font-size="10.27" text-anchor="middle" textLength="35.0" lengthAdjust="spacing" font-family="Liberation Sans" fill="#595959" stroke="#595959" stroke-width="0.35">RAJ N</text><path d="M1578.0 272.2H1596.0M1585.2 272.2V279.8M1583.6 276.8A2.2 1.9 0 1 0 1583.6 276.8M1594.2 272.2V279.8M1588.3 273.7Q1593.8 275.6 1589.2 277.9L1592.8 279.8" fill="none" stroke="#fff" stroke-width="3.26" stroke-linecap="round" stroke-linejoin="round"/><path d="M1578.0 272.2H1596.0M1585.2 272.2V279.8M1583.6 276.8A2.2 1.9 0 1 0 1583.6 276.8M1594.2 272.2V279.8M1588.3 273.7Q1593.8 275.6 1589.2 277.9L1592.8 279.8" fill="none" stroke="#666666" stroke-width="1.26" stroke-linecap="round"/><text x="1358.5" y="277.3" font-size="7.84" text-anchor="middle" textLength="53.0" lengthAdjust="spacing" font-family="Liberation Sans" fill="#fff" stroke="#fff" stroke-width="2.4" stroke-linejoin="round">SAHIBABAD</text><text x="1358.5" y="277.3" font-size="7.84" text-anchor="middle" textLength="53.0" lengthAdjust="spacing" font-family="Liberation Sans" fill="#595959" stroke="#595959" stroke-width="0.35">SAHIBABAD</text><path d="M1341.0 280.6H1378.0M1346.9 280.6V287.0M1341.9 282.5Q1345.1 281.2 1345.1 283.8Q1344.7 287.0 1341.7 286.1M1349.9 280.6Q1354.3 282.5 1351.4 284.4Q1355.1 286.4 1350.6 287.0M1361.7 280.6V287.0M1356.9 281.9Q1361.3 283.5 1357.6 285.4L1360.6 287.0M1364.7 280.6Q1369.1 282.5 1366.2 284.4Q1369.9 286.4 1365.4 287.0M1376.5 280.6V287.0M1371.7 281.9Q1376.1 283.5 1372.4 285.4L1375.4 287.0" fill="none" stroke="#fff" stroke-width="3.08" stroke-linecap="round" stroke-linejoin="round"/><path d="M1341.0 280.6H1378.0M1346.9 280.6V287.0M1341.9 282.5Q1345.1 281.2 1345.1 283.8Q1344.7 287.0 1341.7 286.1M1349.9 280.6Q1354.3 282.5 1351.4 284.4Q1355.1 286.4 1350.6 287.0M1361.7 280.6V287.0M1356.9 281.9Q1361.3 283.5 1357.6 285.4L1360.6 287.0M1364.7 280.6Q1369.1 282.5 1366.2 284.4Q1369.9 286.4 1365.4 287.0M1376.5 280.6V287.0M1371.7 281.9Q1376.1 283.5 1372.4 285.4L1375.4 287.0" fill="none" stroke="#666666" stroke-width="1.08" stroke-linecap="round"/><text x="1431.9" y="298.0" font-size="7.93" text-anchor="middle" textLength="70.2" lengthAdjust="spacing" font-family="Liberation Sans" fill="#fff" stroke="#fff" stroke-width="2.4" stroke-linejoin="round">MOHAN NAGAR</text><text x="1431.9" y="298.0" font-size="7.93" text-anchor="middle" textLength="70.2" lengthAdjust="spacing" font-family="Liberation Sans" fill="#595959" stroke="#595959" stroke-width="0.35">MOHAN NAGAR</text><path d="M1414.5 301.3H1431.8M1421.4 301.3V307.7M1419.9 305.1A2.2 1.6 0 1 0 1419.9 305.2M1424.9 301.3Q1430.1 303.2 1426.6 305.1Q1431.0 307.1 1425.8 307.7M1437.0 301.3H1450.0M1442.2 301.3V307.7M1438.0 302.9V305.8H1442.2M1448.7 301.3V307.7M1444.3 303.2Q1447.1 301.9 1447.1 304.5Q1446.8 307.7 1444.2 306.8" fill="none" stroke="#fff" stroke-width="3.08" stroke-linecap="round" stroke-linejoin="round"/><path d="M1414.5 301.3H1431.8M1421.4 301.3V307.7M1419.9 305.1A2.2 1.6 0 1 0 1419.9 305.2M1424.9 301.3Q1430.1 303.2 1426.6 305.1Q1431.0 307.1 1425.8 307.7M1437.0 301.3H1450.0M1442.2 301.3V307.7M1438.0 302.9V305.8H1442.2M1448.7 301.3V307.7M1444.3 303.2Q1447.1 301.9 1447.1 304.5Q1446.8 307.7 1444.2 306.8" fill="none" stroke="#666666" stroke-width="1.08" stroke-linecap="round"/><text x="1397.4" y="330.3" font-size="7.86" text-anchor="middle" textLength="63.2" lengthAdjust="spacing" font-family="Liberation Sans" fill="#fff" stroke="#fff" stroke-width="2.4" stroke-linejoin="round">VASUNDHARA</text><text x="1397.4" y="330.3" font-size="7.86" text-anchor="middle" textLength="63.2" lengthAdjust="spacing" font-family="Liberation Sans" fill="#595959" stroke="#595959" stroke-width="0.35">VASUNDHARA</text><path d="M1385.0 334.3H1408.6M1389.7 334.3V340.7M1385.7 336.2Q1388.2 334.9 1388.2 337.5Q1388.0 340.7 1385.6 339.8M1395.6 334.3V340.7M1391.6 336.2Q1394.1 334.9 1394.1 337.5Q1393.9 340.7 1391.5 339.8M1401.5 334.3V340.7M1400.5 338.1A1.5 1.6 0 1 0 1400.5 338.2M1407.4 334.3V340.7M1406.4 338.1A1.5 1.6 0 1 0 1406.4 338.2" fill="none" stroke="#fff" stroke-width="3.08" stroke-linecap="round" stroke-linejoin="round"/><path d="M1385.0 334.3H1408.6M1389.7 334.3V340.7M1385.7 336.2Q1388.2 334.9 1388.2 337.5Q1388.0 340.7 1385.6 339.8M1395.6 334.3V340.7M1391.6 336.2Q1394.1 334.9 1394.1 337.5Q1393.9 340.7 1391.5 339.8M1401.5 334.3V340.7M1400.5 338.1A1.5 1.6 0 1 0 1400.5 338.2M1407.4 334.3V340.7M1406.4 338.1A1.5 1.6 0 1 0 1406.4 338.2" fill="none" stroke="#666666" stroke-width="1.08" stroke-linecap="round"/><text x="336.2" y="396.0" font-size="7.76" text-anchor="middle" textLength="75.5" lengthAdjust="spacing" font-family="Liberation Sans" fill="#fff" stroke="#fff" stroke-width="2.4" stroke-linejoin="round">DICHAON KALAN</text><text x="336.2" y="396.0" font-size="7.76" text-anchor="middle" textLength="75.5" lengthAdjust="spacing" font-family="Liberation Sans" fill="#595959" stroke="#595959" stroke-width="0.35">DICHAON KALAN</text><path d="M316.0 398.8H337.4M320.3 398.8V405.2M319.3 402.6A1.3 1.6 0 1 0 319.3 402.7M325.6 398.8V405.2M324.7 402.6A1.3 1.6 0 1 0 324.7 402.7M331.0 398.8V405.2M327.4 400.7Q329.7 399.4 329.7 402.0Q329.4 405.2 327.2 404.3M333.1 398.8Q336.4 400.7 334.2 402.6Q336.9 404.6 333.7 405.2M341.7 398.8H356.0M347.4 398.8V405.2M342.8 400.4V403.3H347.4M354.6 398.8V405.2M349.7 400.7Q352.8 399.4 352.8 402.0Q352.4 405.2 349.6 404.3" fill="none" stroke="#fff" stroke-width="3.08" stroke-linecap="round" stroke-linejoin="round"/><path d="M316.0 398.8H337.4M320.3 398.8V405.2M319.3 402.6A1.3 1.6 0 1 0 319.3 402.7M325.6 398.8V405.2M324.7 402.6A1.3 1.6 0 1 0 324.7 402.7M331.0 398.8V405.2M327.4 400.7Q329.7 399.4 329.7 402.0Q329.4 405.2 327.2 404.3M333.1 398.8Q336.4 400.7 334.2 402.6Q336.9 404.6 333.7 405.2M341.7 398.8H356.0M347.4 398.8V405.2M342.8 400.4V403.3H347.4M354.6 398.8V405.2M349.7 400.7Q352.8 399.4 352.8 402.0Q352.4 405.2 349.6 404.3" fill="none" stroke="#666666" stroke-width="1.08" stroke-linecap="round"/><text x="338.2" y="496.2" font-size="10.37" text-anchor="middle" textLength="73.6" lengthAdjust="spacing" font-family="Liberation Sans" fill="#fff" stroke="#fff" stroke-width="2.4" stroke-linejoin="round">NAJAFGARH</text><text x="338.2" y="496.2" font-size="10.37" text-anchor="middle" textLength="73.6" lengthAdjust="spacing" font-family="Liberation Sans" fill="#595959" stroke="#595959" stroke-width="0.35">NAJAFGARH</text><path d="M319.0 501.2H359.0M321.0 501.2Q327.0 503.5 323.0 505.8Q328.0 508.0 322.0 508.8M337.0 501.2V508.8M330.2 503.5Q334.5 502.0 334.5 505.0Q334.0 508.8 330.0 507.6M347.0 501.2V508.8M345.2 505.8A2.5 1.9 0 1 0 345.2 505.8M357.0 501.2V508.8M350.2 503.5Q354.5 502.0 354.5 505.0Q354.0 508.8 350.0 507.6" fill="none" stroke="#fff" stroke-width="3.26" stroke-linecap="round" stroke-linejoin="round"/><path d="M319.0 501.2H359.0M321.0 501.2Q327.0 503.5 323.0 505.8Q328.0 508.0 322.0 508.8M337.0 501.2V508.8M330.2 503.5Q334.5 502.0 334.5 505.0Q334.0 508.8 330.0 507.6M347.0 501.2V508.8M345.2 505.8A2.5 1.9 0 1 0 345.2 505.8M357.0 501.2V508.8M350.2 503.5Q354.5 502.0 354.5 505.0Q354.0 508.8 350.0 507.6" fill="none" stroke="#666666" stroke-width="1.26" stroke-linecap="round"/><text x="528.5" y="464.0" font-size="7.97" text-anchor="middle" textLength="67.8" lengthAdjust="spacing" font-family="Liberation Sans" fill="#fff" stroke="#fff" stroke-width="2.4" stroke-linejoin="round">UTTAM NAGAR</text><text x="528.5" y="464.0" font-size="7.97" text-anchor="middle" textLength="67.8" lengthAdjust="spacing" font-family="Liberation Sans" fill="#595959" stroke="#595959" stroke-width="0.35">UTTAM NAGAR</text><path d="M511.0 466.8H529.5M515.9 466.8V473.2M511.9 468.4V471.3H515.9M518.4 466.8Q522.1 468.7 519.6 470.6Q522.7 472.6 519.0 473.2M528.2 466.8V473.2M524.2 468.4V471.3H528.2M533.9 466.8H545.0M538.3 466.8V473.2M537.4 470.6A1.4 1.6 0 1 0 537.4 470.7M540.6 466.8Q543.9 468.7 541.7 470.6Q544.4 472.6 541.1 473.2" fill="none" stroke="#fff" stroke-width="3.08" stroke-linecap="round" stroke-linejoin="round"/><path d="M511.0 466.8H529.5M515.9 466.8V473.2M511.9 468.4V471.3H515.9M518.4 466.8Q522.1 468.7 519.6 470.6Q522.7 472.6 519.0 473.2M528.2 466.8V473.2M524.2 468.4V471.3H528.2M533.9 466.8H545.0M538.3 466.8V473.2M537.4 470.6A1.4 1.6 0 1 0 537.4 470.7M540.6 466.8Q543.9 468.7 541.7 470.6Q544.4 472.6 541.1 473.2" fill="none" stroke="#666666" stroke-width="1.08" stroke-linecap="round"/><text x="454.4" y="533.2" font-size="10.32" text-anchor="middle" textLength="56.8" lengthAdjust="spacing" font-family="Liberation Sans" fill="#fff" stroke="#fff" stroke-width="2.4" stroke-linejoin="round">KAKROLA</text><text x="454.4" y="533.2" font-size="10.32" text-anchor="middle" textLength="56.8" lengthAdjust="spacing" font-family="Liberation Sans" fill="#595959" stroke="#595959" stroke-width="0.35">KAKROLA</text><path d="M434.0 537.2H474.0M442.0 537.2V544.8M440.2 541.8A2.5 1.9 0 1 0 440.2 541.8M452.0 537.2V544.8M445.5 538.7Q451.5 540.6 446.5 542.9L450.5 544.8M462.0 537.2V544.8M455.5 538.7Q461.5 540.6 456.5 542.9L460.5 544.8M466.0 537.2Q472.0 539.5 468.0 541.8Q473.0 544.0 467.0 544.8" fill="none" stroke="#fff" stroke-width="3.26" stroke-linecap="round" stroke-linejoin="round"/><path d="M434.0 537.2H474.0M442.0 537.2V544.8M440.2 541.8A2.5 1.9 0 1 0 440.2 541.8M452.0 537.2V544.8M445.5 538.7Q451.5 540.6 446.5 542.9L450.5 544.8M462.0 537.2V544.8M455.5 538.7Q461.5 540.6 456.5 542.9L460.5 544.8M466.0 537.2Q472.0 539.5 468.0 541.8Q473.0 544.0 467.0 544.8" fill="none" stroke="#666666" stroke-width="1.26" stroke-linecap="round"/><text x="385.8" y="542.1" font-size="7.93" text-anchor="middle" textLength="64.4" lengthAdjust="spacing" font-family="Liberation Sans" fill="#fff" stroke="#fff" stroke-width="2.4" stroke-linejoin="round">SHYAM VIHAR</text><text x="385.8" y="542.1" font-size="7.93" text-anchor="middle" textLength="64.4" lengthAdjust="spacing" font-family="Liberation Sans" fill="#595959" stroke="#595959" stroke-width="0.35">SHYAM VIHAR</text><path d="M366.0 544.8H383.9M370.8 544.8V551.2M366.9 546.1Q370.5 547.7 367.5 549.6L369.9 551.2M373.1 544.8Q376.7 546.7 374.3 548.6Q377.3 550.6 373.7 551.2M382.7 544.8V551.2M378.6 546.7Q381.2 545.4 381.2 548.0Q380.9 551.2 378.5 550.3M388.1 544.8H406.0M392.9 544.8V551.2M391.8 548.6A1.5 1.6 0 1 0 391.8 548.7M398.9 544.8V551.2M394.8 546.7Q397.4 545.4 397.4 548.0Q397.1 551.2 394.7 550.3M404.8 544.8V551.2M400.9 546.1Q404.5 547.7 401.5 549.6L403.9 551.2" fill="none" stroke="#fff" stroke-width="3.08" stroke-linecap="round" stroke-linejoin="round"/><path d="M366.0 544.8H383.9M370.8 544.8V551.2M366.9 546.1Q370.5 547.7 367.5 549.6L369.9 551.2M373.1 544.8Q376.7 546.7 374.3 548.6Q377.3 550.6 373.7 551.2M382.7 544.8V551.2M378.6 546.7Q381.2 545.4 381.2 548.0Q380.9 551.2 378.5 550.3M388.1 544.8H406.0M392.9 544.8V551.2M391.8 548.6A1.5 1.6 0 1 0 391.8 548.7M398.9 544.8V551.2M394.8 546.7Q397.4 545.4 397.4 548.0Q397.1 551.2 394.7 550.3M404.8 544.8V551.2M400.9 546.1Q404.5 547.7 401.5 549.6L403.9 551.2" fill="none" stroke="#666666" stroke-width="1.08" stroke-linecap="round"/><text x="514.7" y="580.1" font-size="7.88" text-anchor="middle" textLength="39.4" lengthAdjust="spacing" font-family="Liberation Sans" fill="#fff" stroke="#fff" stroke-width="2.4" stroke-linejoin="round">DWARKA</text><text x="514.7" y="580.1" font-size="7.88" text-anchor="middle" textLength="39.4" lengthAdjust="spacing" font-family="Liberation Sans" fill="#595959" stroke="#595959" stroke-width="0.35">DWARKA</text><path d="M503.0 582.8H525.5M507.5 582.8V589.2M503.7 584.7Q506.1 583.4 506.1 586.0Q505.8 589.2 503.6 588.3M513.1 582.8V589.2M509.5 584.1Q512.8 585.7 510.0 587.6L512.3 589.2M518.8 582.8V589.2M515.1 584.1Q518.5 585.7 515.7 587.6L517.9 589.2M524.4 582.8V589.2M520.7 584.1Q524.1 585.7 521.3 587.6L523.5 589.2" fill="none" stroke="#fff" stroke-width="3.08" stroke-linecap="round" stroke-linejoin="round"/><path d="M503.0 582.8H525.5M507.5 582.8V589.2M503.7 584.7Q506.1 583.4 506.1 586.0Q505.8 589.2 503.6 588.3M513.1 582.8V589.2M509.5 584.1Q512.8 585.7 510.0 587.6L512.3 589.2M518.8 582.8V589.2M515.1 584.1Q518.5 585.7 515.7 587.6L517.9 589.2M524.4 582.8V589.2M520.7 584.1Q524.1 585.7 521.3 587.6L523.5 589.2" fill="none" stroke="#666666" stroke-width="1.08" stroke-linecap="round"/><text x="573.0" y="565.2" font-size="7.50" text-anchor="middle" textLength="44.0" lengthAdjust="spacing" font-family="Liberation Sans" fill="#fff" stroke="#fff" stroke-width="2.4" stroke-linejoin="round">SECTOR 7</text><text x="573.0" y="565.2" font-size="7.50" text-anchor="middle" textLength="44.0" lengthAdjust="spacing" font-family="Liberation Sans" fill="#595959" stroke="#595959" stroke-width="0.35">SECTOR 7</text><text x="573.0" y="573.4" font-size="8.00" text-anchor="middle" textLength="40.0" lengthAdjust="spacing" font-family="Liberation Sans" fill="#fff" stroke="#fff" stroke-width="2.4" stroke-linejoin="round">DWARKA</text><text x="573.0" y="573.4" font-size="8.00" text-anchor="middle" textLength="40.0" lengthAdjust="spacing" font-family="Liberation Sans" fill="#595959" stroke="#595959" stroke-width="0.35">DWARKA</text><path d="M559.5 576.8H580.0M563.6 576.8V583.2M560.3 578.4V581.3H563.6M568.7 576.8V583.2M565.2 578.7Q567.4 577.4 567.4 580.0Q567.2 583.2 565.1 582.3M573.8 576.8V583.2M572.9 580.6A1.3 1.6 0 1 0 572.9 580.7M579.0 576.8V583.2M575.6 578.4V581.3H579.0M584.1 576.8H587.5M586.8 576.8V583.2M584.5 578.7Q586.0 577.4 586.0 580.0Q585.8 583.2 584.4 582.3" fill="none" stroke="#fff" stroke-width="3.08" stroke-linecap="round" stroke-linejoin="round"/><path d="M559.5 576.8H580.0M563.6 576.8V583.2M560.3 578.4V581.3H563.6M568.7 576.8V583.2M565.2 578.7Q567.4 577.4 567.4 580.0Q567.2 583.2 565.1 582.3M573.8 576.8V583.2M572.9 580.6A1.3 1.6 0 1 0 572.9 580.7M579.0 576.8V583.2M575.6 578.4V581.3H579.0M584.1 576.8H587.5M586.8 576.8V583.2M584.5 578.7Q586.0 577.4 586.0 580.0Q585.8 583.2 584.4 582.3" fill="none" stroke="#666666" stroke-width="1.08" stroke-linecap="round"/><path d="M562.0 584.8H584.0M566.4 584.8V591.2M562.7 586.7Q565.0 585.4 565.0 588.0Q564.8 591.2 562.5 590.3M571.9 584.8V591.2M568.2 586.7Q570.5 585.4 570.5 588.0Q570.2 591.2 568.0 590.3M577.4 584.8V591.2M573.7 586.7Q576.0 585.4 576.0 588.0Q575.8 591.2 573.5 590.3M582.9 584.8V591.2M579.3 586.4V589.3H582.9" fill="none" stroke="#fff" stroke-width="3.08" stroke-linecap="round" stroke-linejoin="round"/><path d="M562.0 584.8H584.0M566.4 584.8V591.2M562.7 586.7Q565.0 585.4 565.0 588.0Q564.8 591.2 562.5 590.3M571.9 584.8V591.2M568.2 586.7Q570.5 585.4 570.5 588.0Q570.2 591.2 568.0 590.3M577.4 584.8V591.2M573.7 586.7Q576.0 585.4 576.0 588.0Q575.8 591.2 573.5 590.3M582.9 584.8V591.2M579.3 586.4V589.3H582.9" fill="none" stroke="#666666" stroke-width="1.08" stroke-linecap="round"/><text x="571.5" y="603.7" font-size="7.50" text-anchor="middle" textLength="43.0" lengthAdjust="spacing" font-family="Liberation Sans" fill="#fff" stroke="#fff" stroke-width="2.4" stroke-linejoin="round">SECTOR 8</text><text x="571.5" y="603.7" font-size="7.50" text-anchor="middle" textLength="43.0" lengthAdjust="spacing" font-family="Liberation Sans" fill="#595959" stroke="#595959" stroke-width="0.35">SECTOR 8</text><text x="572.0" y="612.2" font-size="8.00" text-anchor="middle" textLength="40.0" lengthAdjust="spacing" font-family="Liberation Sans" fill="#fff" stroke="#fff" stroke-width="2.4" stroke-linejoin="round">DWARKA</text><text x="572.0" y="612.2" font-size="8.00" text-anchor="middle" textLength="40.0" lengthAdjust="spacing" font-family="Liberation Sans" fill="#595959" stroke="#595959" stroke-width="0.35">DWARKA</text><path d="M558.0 614.8H578.5M562.1 614.8V621.2M561.2 618.6A1.3 1.6 0 1 0 561.2 618.7M567.2 614.8V621.2M563.9 616.1Q567.0 617.7 564.4 619.6L566.5 621.2M569.3 614.8Q572.3 616.7 570.3 618.6Q572.9 620.6 569.8 621.2M577.5 614.8V621.2M574.1 616.4V619.3H577.5M582.6 614.8H586.0M585.3 614.8V621.2M584.7 618.6A0.9 1.6 0 1 0 584.7 618.7" fill="none" stroke="#fff" stroke-width="3.08" stroke-linecap="round" stroke-linejoin="round"/><path d="M558.0 614.8H578.5M562.1 614.8V621.2M561.2 618.6A1.3 1.6 0 1 0 561.2 618.7M567.2 614.8V621.2M563.9 616.1Q567.0 617.7 564.4 619.6L566.5 621.2M569.3 614.8Q572.3 616.7 570.3 618.6Q572.9 620.6 569.8 621.2M577.5 614.8V621.2M574.1 616.4V619.3H577.5M582.6 614.8H586.0M585.3 614.8V621.2M584.7 618.6A0.9 1.6 0 1 0 584.7 618.7" fill="none" stroke="#666666" stroke-width="1.08" stroke-linecap="round"/><path d="M562.0 623.3H582.0M566.0 623.3V629.7M562.6 625.2Q564.8 623.9 564.8 626.5Q564.5 629.7 562.5 628.8M571.0 623.3V629.7M567.6 625.2Q569.8 623.9 569.8 626.5Q569.5 629.7 567.5 628.8M576.0 623.3V629.7M572.6 625.2Q574.8 623.9 574.8 626.5Q574.5 629.7 572.5 628.8M581.0 623.3V629.7M577.8 624.9V627.8H581.0" fill="none" stroke="#fff" stroke-width="3.08" stroke-linecap="round" stroke-linejoin="round"/><path d="M562.0 623.3H582.0M566.0 623.3V629.7M562.6 625.2Q564.8 623.9 564.8 626.5Q564.5 629.7 562.5 628.8M571.0 623.3V629.7M567.6 625.2Q569.8 623.9 569.8 626.5Q569.5 629.7 567.5 628.8M576.0 623.3V629.7M572.6 625.2Q574.8 623.9 574.8 626.5Q574.5 629.7 572.5 628.8M581.0 623.3V629.7M577.8 624.9V627.8H581.0" fill="none" stroke="#666666" stroke-width="1.08" stroke-linecap="round"/><text x="622.5" y="555.8" font-size="9.12" text-anchor="middle" textLength="35.0" lengthAdjust="spacing" font-family="Liberation Sans" fill="#fff" stroke="#fff" stroke-width="2.4" stroke-linejoin="round">PALAM</text><text x="622.5" y="555.8" font-size="9.12" text-anchor="middle" textLength="35.0" lengthAdjust="spacing" font-family="Liberation Sans" fill="#595959" stroke="#595959" stroke-width="0.35">PALAM</text><path d="M610.0 558.8H632.0M618.8 558.8V565.2M611.6 560.1Q618.2 561.7 612.8 563.6L617.1 565.2M629.8 558.8V565.2M622.6 560.1Q629.2 561.7 623.8 563.6L628.1 565.2" fill="none" stroke="#fff" stroke-width="3.08" stroke-linecap="round" stroke-linejoin="round"/><path d="M610.0 558.8H632.0M618.8 558.8V565.2M611.6 560.1Q618.2 561.7 612.8 563.6L617.1 565.2M629.8 558.8V565.2M622.6 560.1Q629.2 561.7 623.8 563.6L628.1 565.2" fill="none" stroke="#666666" stroke-width="1.08" stroke-linecap="round"/><text x="737.5" y="530.3" font-size="7.79" text-anchor="middle" textLength="27.0" lengthAdjust="spacing" font-family="Liberation Sans" fill="#fff" stroke="#fff" stroke-width="2.4" stroke-linejoin="round">DELHI</text><text x="737.5" y="530.3" font-size="7.79" text-anchor="middle" textLength="27.0" lengthAdjust="spacing" font-family="Liberation Sans" fill="#595959" stroke="#595959" stroke-width="0.35">DELHI</text><text x="737.0" y="538.8" font-size="7.80" text-anchor="middle" textLength="64.0" lengthAdjust="spacing" font-family="Liberation Sans" fill="#fff" stroke="#fff" stroke-width="2.4" stroke-linejoin="round">CANTONMENT</text><text x="737.0" y="538.8" font-size="7.80" text-anchor="middle" textLength="64.0" lengthAdjust="spacing" font-family="Liberation Sans" fill="#595959" stroke="#595959" stroke-width="0.35">CANTONMENT</text><path d="M717.0 541.8H736.7M718.0 541.8Q720.9 543.7 719.0 545.6Q721.4 547.6 718.5 548.2M725.9 541.8V548.2M722.5 543.7Q724.6 542.4 724.6 545.0Q724.4 548.2 722.4 547.3M730.8 541.8V548.2M729.9 545.6A1.2 1.6 0 1 0 729.9 545.7M735.7 541.8V548.2M732.5 543.4V546.3H735.7M740.6 541.8H757.0M745.0 541.8V548.2M741.3 543.7Q743.6 542.4 743.6 545.0Q743.3 548.2 741.2 547.3M750.4 541.8V548.2M746.9 543.4V546.3H750.4M755.9 541.8V548.2M752.4 543.1Q755.6 544.7 752.9 546.6L755.1 548.2" fill="none" stroke="#fff" stroke-width="3.08" stroke-linecap="round" stroke-linejoin="round"/><path d="M717.0 541.8H736.7M718.0 541.8Q720.9 543.7 719.0 545.6Q721.4 547.6 718.5 548.2M725.9 541.8V548.2M722.5 543.7Q724.6 542.4 724.6 545.0Q724.4 548.2 722.4 547.3M730.8 541.8V548.2M729.9 545.6A1.2 1.6 0 1 0 729.9 545.7M735.7 541.8V548.2M732.5 543.4V546.3H735.7M740.6 541.8H757.0M745.0 541.8V548.2M741.3 543.7Q743.6 542.4 743.6 545.0Q743.3 548.2 741.2 547.3M750.4 541.8V548.2M746.9 543.4V546.3H750.4M755.9 541.8V548.2M752.4 543.1Q755.6 544.7 752.9 546.6L755.1 548.2" fill="none" stroke="#666666" stroke-width="1.08" stroke-linecap="round"/><text x="958.2" y="383.0" font-size="10.79" text-anchor="middle" textLength="76.4" lengthAdjust="spacing" font-family="Liberation Sans" fill="#fff" stroke="#fff" stroke-width="2.4" stroke-linejoin="round">PAHARGANJ</text><text x="958.2" y="383.0" font-size="10.79" text-anchor="middle" textLength="76.4" lengthAdjust="spacing" font-family="Liberation Sans" fill="#595959" stroke="#595959" stroke-width="0.35">PAHARGANJ</text><path d="M935.0 386.7H983.0M942.7 386.7V394.3M936.2 389.0Q940.3 387.5 940.3 390.5Q939.8 394.3 936.0 393.1M946.5 386.7Q952.3 389.0 948.4 391.3Q953.2 393.5 947.5 394.3M961.9 386.7V394.3M960.2 391.3A2.4 1.9 0 1 0 960.2 391.3M971.5 386.7V394.3M965.2 388.2Q971.0 390.1 966.2 392.4L970.0 394.3M975.3 386.7Q981.1 389.0 977.2 391.3Q982.0 393.5 976.3 394.3" fill="none" stroke="#fff" stroke-width="3.26" stroke-linecap="round" stroke-linejoin="round"/><path d="M935.0 386.7H983.0M942.7 386.7V394.3M936.2 389.0Q940.3 387.5 940.3 390.5Q939.8 394.3 936.0 393.1M946.5 386.7Q952.3 389.0 948.4 391.3Q953.2 393.5 947.5 394.3M961.9 386.7V394.3M960.2 391.3A2.4 1.9 0 1 0 960.2 391.3M971.5 386.7V394.3M965.2 388.2Q971.0 390.1 966.2 392.4L970.0 394.3M975.3 386.7Q981.1 389.0 977.2 391.3Q982.0 393.5 976.3 394.3" fill="none" stroke="#666666" stroke-width="1.26" stroke-linecap="round"/><text x="971.0" y="423.3" font-size="10.42" text-anchor="middle" textLength="78.0" lengthAdjust="spacing" font-family="Liberation Sans" fill="#fff" stroke="#fff" stroke-width="2.4" stroke-linejoin="round">CONNAUGHT</text><text x="971.0" y="423.3" font-size="10.42" text-anchor="middle" textLength="78.0" lengthAdjust="spacing" font-family="Liberation Sans" fill="#595959" stroke="#595959" stroke-width="0.35">CONNAUGHT</text><text x="971.5" y="435.2" font-size="10.26" text-anchor="middle" textLength="39.0" lengthAdjust="spacing" font-family="Liberation Sans" fill="#fff" stroke="#fff" stroke-width="2.4" stroke-linejoin="round">PLACE</text><text x="971.5" y="435.2" font-size="10.26" text-anchor="middle" textLength="39.0" lengthAdjust="spacing" font-family="Liberation Sans" fill="#595959" stroke="#595959" stroke-width="0.35">PLACE</text><path d="M946.0 439.2H966.0M954.0 439.2V446.8M947.5 440.7Q953.5 442.6 948.5 444.9L952.5 446.8M958.0 439.2Q964.0 441.5 960.0 443.8Q965.0 446.0 959.0 446.8M972.0 439.2H997.0M978.7 439.2V446.8M973.2 441.1V444.5H978.7M987.0 439.2V446.8M981.3 441.5Q984.9 440.0 984.9 443.0Q984.5 446.8 981.2 445.6M995.3 439.2V446.8M993.8 443.8A2.1 1.9 0 1 0 993.8 443.8" fill="none" stroke="#fff" stroke-width="3.26" stroke-linecap="round" stroke-linejoin="round"/><path d="M946.0 439.2H966.0M954.0 439.2V446.8M947.5 440.7Q953.5 442.6 948.5 444.9L952.5 446.8M958.0 439.2Q964.0 441.5 960.0 443.8Q965.0 446.0 959.0 446.8M972.0 439.2H997.0M978.7 439.2V446.8M973.2 441.1V444.5H978.7M987.0 439.2V446.8M981.3 441.5Q984.9 440.0 984.9 443.0Q984.5 446.8 981.2 445.6M995.3 439.2V446.8M993.8 443.8A2.1 1.9 0 1 0 993.8 443.8" fill="none" stroke="#666666" stroke-width="1.26" stroke-linecap="round"/><text x="918.0" y="605.5" font-size="7.50" text-anchor="middle" textLength="72.0" lengthAdjust="spacing" font-family="Liberation Sans" fill="#fff" stroke="#fff" stroke-width="2.4" stroke-linejoin="round">SAROJINI NAGAR</text><text x="918.0" y="605.5" font-size="7.50" text-anchor="middle" textLength="72.0" lengthAdjust="spacing" font-family="Liberation Sans" fill="#595959" stroke="#595959" stroke-width="0.35">SAROJINI NAGAR</text><path d="M897.0 608.8H926.4M902.9 608.8V615.2M898.1 610.4V613.3H902.9M910.2 608.8V615.2M908.9 612.6A1.8 1.6 0 1 0 908.9 612.7M917.6 608.8V615.2M912.8 610.4V613.3H917.6M924.9 608.8V615.2M919.9 610.7Q923.1 609.4 923.1 612.0Q922.7 615.2 919.8 614.3M931.4 608.8H944.0M932.7 608.8Q936.4 610.7 933.9 612.6Q937.1 614.6 933.3 615.2M939.0 608.8Q942.7 610.7 940.2 612.6Q943.4 614.6 939.6 615.2" fill="none" stroke="#fff" stroke-width="3.08" stroke-linecap="round" stroke-linejoin="round"/><path d="M897.0 608.8H926.4M902.9 608.8V615.2M898.1 610.4V613.3H902.9M910.2 608.8V615.2M908.9 612.6A1.8 1.6 0 1 0 908.9 612.7M917.6 608.8V615.2M912.8 610.4V613.3H917.6M924.9 608.8V615.2M919.9 610.7Q923.1 609.4 923.1 612.0Q922.7 615.2 919.8 614.3M931.4 608.8H944.0M932.7 608.8Q936.4 610.7 933.9 612.6Q937.1 614.6 933.3 615.2M939.0 608.8Q942.7 610.7 940.2 612.6Q943.4 614.6 939.6 615.2" fill="none" stroke="#666666" stroke-width="1.08" stroke-linecap="round"/><text x="1159.4" y="366.3" font-size="7.74" text-anchor="middle" textLength="75.7" lengthAdjust="spacing" font-family="Liberation Sans" fill="#fff" stroke="#fff" stroke-width="2.4" stroke-linejoin="round">KRISHNA NAGAR</text><text x="1159.4" y="366.3" font-size="7.74" text-anchor="middle" textLength="75.7" lengthAdjust="spacing" font-family="Liberation Sans" fill="#595959" stroke="#595959" stroke-width="0.35">KRISHNA NAGAR</text><path d="M1141.0 369.6H1163.9M1145.6 369.6V376.0M1144.6 373.4A1.4 1.6 0 1 0 1144.6 373.5M1147.9 369.6Q1151.3 371.5 1149.0 373.4Q1151.9 375.4 1148.5 376.0M1157.1 369.6V376.0M1156.0 373.4A1.4 1.6 0 1 0 1156.0 373.5M1162.8 369.6V376.0M1159.1 370.9Q1162.5 372.5 1159.6 374.4L1161.9 376.0M1168.5 369.6H1180.0M1173.1 369.6V376.0M1169.2 371.5Q1171.7 370.2 1171.7 372.8Q1171.4 376.0 1169.1 375.1M1178.9 369.6V376.0M1175.1 370.9Q1178.6 372.5 1175.7 374.4L1178.0 376.0" fill="none" stroke="#fff" stroke-width="3.08" stroke-linecap="round" stroke-linejoin="round"/><path d="M1141.0 369.6H1163.9M1145.6 369.6V376.0M1144.6 373.4A1.4 1.6 0 1 0 1144.6 373.5M1147.9 369.6Q1151.3 371.5 1149.0 373.4Q1151.9 375.4 1148.5 376.0M1157.1 369.6V376.0M1156.0 373.4A1.4 1.6 0 1 0 1156.0 373.5M1162.8 369.6V376.0M1159.1 370.9Q1162.5 372.5 1159.6 374.4L1161.9 376.0M1168.5 369.6H1180.0M1173.1 369.6V376.0M1169.2 371.5Q1171.7 370.2 1171.7 372.8Q1171.4 376.0 1169.1 375.1M1178.9 369.6V376.0M1175.1 370.9Q1178.6 372.5 1175.7 374.4L1178.0 376.0" fill="none" stroke="#666666" stroke-width="1.08" stroke-linecap="round"/><text x="1130.7" y="409.3" font-size="7.90" text-anchor="middle" textLength="64.3" lengthAdjust="spacing" font-family="Liberation Sans" fill="#fff" stroke="#fff" stroke-width="2.4" stroke-linejoin="round">LAXMI NAGAR</text><text x="1130.7" y="409.3" font-size="7.90" text-anchor="middle" textLength="64.3" lengthAdjust="spacing" font-family="Liberation Sans" fill="#595959" stroke="#595959" stroke-width="0.35">LAXMI NAGAR</text><path d="M1112.0 412.4H1135.1M1113.2 412.4Q1116.6 414.3 1114.3 416.2Q1117.2 418.2 1113.7 418.8M1122.4 412.4V418.8M1121.4 416.2A1.4 1.6 0 1 0 1121.4 416.3M1124.7 412.4Q1128.2 414.3 1125.9 416.2Q1128.8 418.2 1125.3 418.8M1130.5 412.4Q1134.0 414.3 1131.7 416.2Q1134.5 418.2 1131.1 418.8M1139.1 412.4H1149.0M1143.1 412.4V418.8M1142.2 416.2A1.2 1.6 0 1 0 1142.2 416.3M1145.0 412.4Q1148.0 414.3 1146.0 416.2Q1148.5 418.2 1145.5 418.8" fill="none" stroke="#fff" stroke-width="3.08" stroke-linecap="round" stroke-linejoin="round"/><path d="M1112.0 412.4H1135.1M1113.2 412.4Q1116.6 414.3 1114.3 416.2Q1117.2 418.2 1113.7 418.8M1122.4 412.4V418.8M1121.4 416.2A1.4 1.6 0 1 0 1121.4 416.3M1124.7 412.4Q1128.2 414.3 1125.9 416.2Q1128.8 418.2 1125.3 418.8M1130.5 412.4Q1134.0 414.3 1131.7 416.2Q1134.5 418.2 1131.1 418.8M1139.1 412.4H1149.0M1143.1 412.4V418.8M1142.2 416.2A1.2 1.6 0 1 0 1142.2 416.3M1145.0 412.4Q1148.0 414.3 1146.0 416.2Q1148.5 418.2 1145.5 418.8" fill="none" stroke="#666666" stroke-width="1.08" stroke-linecap="round"/><text x="1209.6" y="416.4" font-size="10.73" text-anchor="middle" textLength="81.7" lengthAdjust="spacing" font-family="Liberation Sans" fill="#fff" stroke="#fff" stroke-width="2.4" stroke-linejoin="round">PATPARGANJ</text><text x="1209.6" y="416.4" font-size="10.73" text-anchor="middle" textLength="81.7" lengthAdjust="spacing" font-family="Liberation Sans" fill="#595959" stroke="#595959" stroke-width="0.35">PATPARGANJ</text><path d="M1190.0 420.0H1230.0M1198.0 420.0V427.6M1191.5 421.5Q1197.5 423.4 1192.5 425.7L1196.5 427.6M1202.0 420.0Q1208.0 422.3 1204.0 424.6Q1209.0 426.8 1203.0 427.6M1212.0 420.0Q1218.0 422.3 1214.0 424.6Q1219.0 426.8 1213.0 427.6M1228.0 420.0V427.6M1226.2 424.6A2.5 1.9 0 1 0 1226.2 424.6" fill="none" stroke="#fff" stroke-width="3.26" stroke-linecap="round" stroke-linejoin="round"/><path d="M1190.0 420.0H1230.0M1198.0 420.0V427.6M1191.5 421.5Q1197.5 423.4 1192.5 425.7L1196.5 427.6M1202.0 420.0Q1208.0 422.3 1204.0 424.6Q1209.0 426.8 1203.0 427.6M1212.0 420.0Q1218.0 422.3 1214.0 424.6Q1219.0 426.8 1213.0 427.6M1228.0 420.0V427.6M1226.2 424.6A2.5 1.9 0 1 0 1226.2 424.6" fill="none" stroke="#666666" stroke-width="1.26" stroke-linecap="round"/><text x="1178.4" y="499.0" font-size="7.87" text-anchor="middle" textLength="64.3" lengthAdjust="spacing" font-family="Liberation Sans" fill="#fff" stroke="#fff" stroke-width="2.4" stroke-linejoin="round">MAYUR VIHAR</text><text x="1178.4" y="499.0" font-size="7.87" text-anchor="middle" textLength="64.3" lengthAdjust="spacing" font-family="Liberation Sans" fill="#595959" stroke="#595959" stroke-width="0.35">MAYUR VIHAR</text><path d="M1160.0 502.3H1174.1M1161.4 502.3Q1165.6 504.2 1162.8 506.1Q1166.4 508.1 1162.1 508.7M1168.5 502.3Q1172.7 504.2 1169.9 506.1Q1173.4 508.1 1169.2 508.7M1178.4 502.3H1196.0M1183.1 502.3V508.7M1179.2 503.9V506.8H1183.1M1188.9 502.3V508.7M1185.1 503.9V506.8H1188.9M1191.3 502.3Q1194.8 504.2 1192.5 506.1Q1195.4 508.1 1191.9 508.7" fill="none" stroke="#fff" stroke-width="3.08" stroke-linecap="round" stroke-linejoin="round"/><path d="M1160.0 502.3H1174.1M1161.4 502.3Q1165.6 504.2 1162.8 506.1Q1166.4 508.1 1162.1 508.7M1168.5 502.3Q1172.7 504.2 1169.9 506.1Q1173.4 508.1 1169.2 508.7M1178.4 502.3H1196.0M1183.1 502.3V508.7M1179.2 503.9V506.8H1183.1M1188.9 502.3V508.7M1185.1 503.9V506.8H1188.9M1191.3 502.3Q1194.8 504.2 1192.5 506.1Q1195.4 508.1 1191.9 508.7" fill="none" stroke="#666666" stroke-width="1.08" stroke-linecap="round"/><text x="1280.2" y="491.1" font-size="8.02" text-anchor="middle" textLength="65.5" lengthAdjust="spacing" font-family="Liberation Sans" fill="#fff" stroke="#fff" stroke-width="2.4" stroke-linejoin="round">MAYUR VIHAR</text><text x="1280.2" y="491.1" font-size="8.02" text-anchor="middle" textLength="65.5" lengthAdjust="spacing" font-family="Liberation Sans" fill="#595959" stroke="#595959" stroke-width="0.35">MAYUR VIHAR</text><text x="1279.5" y="499.2" font-size="7.50" text-anchor="middle" textLength="41.0" lengthAdjust="spacing" font-family="Liberation Sans" fill="#fff" stroke="#fff" stroke-width="2.4" stroke-linejoin="round">PHASE III</text><text x="1279.5" y="499.2" font-size="7.50" text-anchor="middle" textLength="41.0" lengthAdjust="spacing" font-family="Liberation Sans" fill="#595959" stroke="#595959" stroke-width="0.35">PHASE III</text><path d="M1262.0 502.8H1273.1M1266.5 502.8V509.2M1262.8 504.4V507.3H1266.5M1272.0 502.8V509.2M1268.4 504.4V507.3H1272.0M1276.5 502.8H1296.0M1277.5 502.8Q1280.4 504.7 1278.4 506.6Q1280.9 508.6 1278.0 509.2M1285.3 502.8V509.2M1284.4 506.6A1.2 1.6 0 1 0 1284.4 506.7M1290.1 502.8V509.2M1287.0 504.4V507.3H1290.1M1295.0 502.8V509.2M1291.9 504.1Q1294.8 505.7 1292.3 507.6L1294.3 509.2" fill="none" stroke="#fff" stroke-width="3.08" stroke-linecap="round" stroke-linejoin="round"/><path d="M1262.0 502.8H1273.1M1266.5 502.8V509.2M1262.8 504.4V507.3H1266.5M1272.0 502.8V509.2M1268.4 504.4V507.3H1272.0M1276.5 502.8H1296.0M1277.5 502.8Q1280.4 504.7 1278.4 506.6Q1280.9 508.6 1278.0 509.2M1285.3 502.8V509.2M1284.4 506.6A1.2 1.6 0 1 0 1284.4 506.7M1290.1 502.8V509.2M1287.0 504.4V507.3H1290.1M1295.0 502.8V509.2M1291.9 504.1Q1294.8 505.7 1292.3 507.6L1294.3 509.2" fill="none" stroke="#666666" stroke-width="1.08" stroke-linecap="round"/><text x="1089.3" y="545.2" font-size="7.62" text-anchor="middle" textLength="53.4" lengthAdjust="spacing" font-family="Liberation Sans" fill="#fff" stroke="#fff" stroke-width="2.4" stroke-linejoin="round">SARAI KALE</text><text x="1089.3" y="545.2" font-size="7.62" text-anchor="middle" textLength="53.4" lengthAdjust="spacing" font-family="Liberation Sans" fill="#595959" stroke="#595959" stroke-width="0.35">SARAI KALE</text><text x="1089.0" y="553.8" font-size="7.89" text-anchor="middle" textLength="25.0" lengthAdjust="spacing" font-family="Liberation Sans" fill="#fff" stroke="#fff" stroke-width="2.4" stroke-linejoin="round">KHAN</text><text x="1089.0" y="553.8" font-size="7.89" text-anchor="middle" textLength="25.0" lengthAdjust="spacing" font-family="Liberation Sans" fill="#595959" stroke="#595959" stroke-width="0.35">KHAN</text><path d="M1080.0 556.8H1098.0M1087.2 556.8V563.2M1081.3 558.1Q1086.8 559.7 1082.2 561.6L1085.8 563.2M1096.2 556.8V563.2M1090.3 558.1Q1095.8 559.7 1091.2 561.6L1094.8 563.2" fill="none" stroke="#fff" stroke-width="3.08" stroke-linecap="round" stroke-linejoin="round"/><path d="M1080.0 556.8H1098.0M1087.2 556.8V563.2M1081.3 558.1Q1086.8 559.7 1082.2 561.6L1085.8 563.2M1096.2 556.8V563.2M1090.3 558.1Q1095.8 559.7 1091.2 561.6L1094.8 563.2" fill="none" stroke="#666666" stroke-width="1.08" stroke-linecap="round"/><path d="M1071.4 565.1H1088.3M1078.2 565.1V571.5M1072.4 567.0Q1076.0 565.7 1076.0 568.3Q1075.6 571.5 1072.2 570.6M1086.6 565.1V571.5M1081.1 566.7V569.6H1086.6M1093.3 565.1H1106.0M1098.4 565.1V571.5M1094.3 566.7V569.6H1098.4M1104.7 565.1V571.5M1103.6 568.9A1.6 1.6 0 1 0 1103.6 569.0" fill="none" stroke="#fff" stroke-width="3.08" stroke-linecap="round" stroke-linejoin="round"/><path d="M1071.4 565.1H1088.3M1078.2 565.1V571.5M1072.4 567.0Q1076.0 565.7 1076.0 568.3Q1075.6 571.5 1072.2 570.6M1086.6 565.1V571.5M1081.1 566.7V569.6H1086.6M1093.3 565.1H1106.0M1098.4 565.1V571.5M1094.3 566.7V569.6H1098.4M1104.7 565.1V571.5M1103.6 568.9A1.6 1.6 0 1 0 1103.6 569.0" fill="none" stroke="#666666" stroke-width="1.08" stroke-linecap="round"/><text x="1386.5" y="381.3" font-size="7.83" text-anchor="middle" textLength="65.0" lengthAdjust="spacing" font-family="Liberation Sans" fill="#fff" stroke="#fff" stroke-width="2.4" stroke-linejoin="round">INDIRAPURAM</text><text x="1386.5" y="381.3" font-size="7.83" text-anchor="middle" textLength="65.0" lengthAdjust="spacing" font-family="Liberation Sans" fill="#595959" stroke="#595959" stroke-width="0.35">INDIRAPURAM</text><path d="M1370.0 384.6H1403.0M1374.4 384.6V391.0M1370.8 385.9Q1374.1 387.5 1371.4 389.4L1373.6 391.0M1379.9 384.6V391.0M1376.2 386.5Q1378.5 385.2 1378.5 387.8Q1378.2 391.0 1376.0 390.1M1385.4 384.6V391.0M1381.8 386.2V389.1H1385.4M1390.9 384.6V391.0M1387.3 385.9Q1390.6 387.5 1387.9 389.4L1390.1 391.0M1396.4 384.6V391.0M1392.8 386.2V389.1H1396.4M1401.9 384.6V391.0M1398.3 386.2V389.1H1401.9" fill="none" stroke="#fff" stroke-width="3.08" stroke-linecap="round" stroke-linejoin="round"/><path d="M1370.0 384.6H1403.0M1374.4 384.6V391.0M1370.8 385.9Q1374.1 387.5 1371.4 389.4L1373.6 391.0M1379.9 384.6V391.0M1376.2 386.5Q1378.5 385.2 1378.5 387.8Q1378.2 391.0 1376.0 390.1M1385.4 384.6V391.0M1381.8 386.2V389.1H1385.4M1390.9 384.6V391.0M1387.3 385.9Q1390.6 387.5 1387.9 389.4L1390.1 391.0M1396.4 384.6V391.0M1392.8 386.2V389.1H1396.4M1401.9 384.6V391.0M1398.3 386.2V389.1H1401.9" fill="none" stroke="#666666" stroke-width="1.08" stroke-linecap="round"/><text x="1535.3" y="380.8" font-size="10.57" text-anchor="middle" textLength="82.7" lengthAdjust="spacing" font-family="Liberation Sans" fill="#fff" stroke="#fff" stroke-width="2.4" stroke-linejoin="round">VIJAY NAGAR</text><text x="1535.3" y="380.8" font-size="10.57" text-anchor="middle" textLength="82.7" lengthAdjust="spacing" font-family="Liberation Sans" fill="#595959" stroke="#595959" stroke-width="0.35">VIJAY NAGAR</text><path d="M1510.0 384.9H1534.9M1512.5 384.9Q1520.0 387.2 1515.0 389.5Q1521.2 391.7 1513.7 392.5M1524.9 384.9Q1532.4 387.2 1527.4 389.5Q1533.6 391.7 1526.2 392.5M1542.3 384.9H1561.0M1549.8 384.9V392.5M1548.1 389.5A2.3 1.9 0 1 0 1548.1 389.5M1559.1 384.9V392.5M1553.1 386.8V390.2H1559.1" fill="none" stroke="#fff" stroke-width="3.26" stroke-linecap="round" stroke-linejoin="round"/><path d="M1510.0 384.9H1534.9M1512.5 384.9Q1520.0 387.2 1515.0 389.5Q1521.2 391.7 1513.7 392.5M1524.9 384.9Q1532.4 387.2 1527.4 389.5Q1533.6 391.7 1526.2 392.5M1542.3 384.9H1561.0M1549.8 384.9V392.5M1548.1 389.5A2.3 1.9 0 1 0 1548.1 389.5M1559.1 384.9V392.5M1553.1 386.8V390.2H1559.1" fill="none" stroke="#666666" stroke-width="1.26" stroke-linecap="round"/><text x="1374.0" y="437.8" font-size="7.60" text-anchor="middle" textLength="50.0" lengthAdjust="spacing" font-family="Liberation Sans" fill="#fff" stroke="#fff" stroke-width="2.4" stroke-linejoin="round">SECTOR 62</text><text x="1374.0" y="437.8" font-size="7.60" text-anchor="middle" textLength="50.0" lengthAdjust="spacing" font-family="Liberation Sans" fill="#595959" stroke="#595959" stroke-width="0.35">SECTOR 62</text><path d="M1357.0 440.8H1379.2M1361.4 440.8V447.2M1357.8 442.4V445.3H1361.4M1363.7 440.8Q1367.0 442.7 1364.8 444.6Q1367.5 446.6 1364.2 447.2M1372.5 440.8V447.2M1368.9 442.4V445.3H1372.5M1378.1 440.8V447.2M1377.1 444.6A1.4 1.6 0 1 0 1377.1 444.7M1383.6 440.8H1391.0M1389.5 440.8V447.2M1384.7 442.1Q1389.2 443.7 1385.5 445.6L1388.4 447.2" fill="none" stroke="#fff" stroke-width="3.08" stroke-linecap="round" stroke-linejoin="round"/><path d="M1357.0 440.8H1379.2M1361.4 440.8V447.2M1357.8 442.4V445.3H1361.4M1363.7 440.8Q1367.0 442.7 1364.8 444.6Q1367.5 446.6 1364.2 447.2M1372.5 440.8V447.2M1368.9 442.4V445.3H1372.5M1378.1 440.8V447.2M1377.1 444.6A1.4 1.6 0 1 0 1377.1 444.7M1383.6 440.8H1391.0M1389.5 440.8V447.2M1384.7 442.1Q1389.2 443.7 1385.5 445.6L1388.4 447.2" fill="none" stroke="#666666" stroke-width="1.08" stroke-linecap="round"/><text x="1418.2" y="458.8" font-size="10.09" text-anchor="middle" textLength="66.4" lengthAdjust="spacing" font-family="Liberation Sans" fill="#fff" stroke="#fff" stroke-width="2.4" stroke-linejoin="round">SECTOR 63</text><text x="1418.2" y="458.8" font-size="10.09" text-anchor="middle" textLength="66.4" lengthAdjust="spacing" font-family="Liberation Sans" fill="#595959" stroke="#595959" stroke-width="0.35">SECTOR 63</text><path d="M1397.0 463.7H1425.0M1402.6 463.7V471.3M1401.3 468.3A1.8 1.9 0 1 0 1401.3 468.3M1405.4 463.7Q1409.6 466.0 1406.8 468.3Q1410.3 470.5 1406.1 471.3M1412.4 463.7Q1416.6 466.0 1413.8 468.3Q1417.3 470.5 1413.1 471.3M1423.6 463.7V471.3M1419.1 465.2Q1423.3 467.1 1419.8 469.4L1422.6 471.3M1430.7 463.7H1440.0M1432.5 463.7Q1438.1 466.0 1434.4 468.3Q1439.1 470.5 1433.5 471.3" fill="none" stroke="#fff" stroke-width="3.26" stroke-linecap="round" stroke-linejoin="round"/><path d="M1397.0 463.7H1425.0M1402.6 463.7V471.3M1401.3 468.3A1.8 1.9 0 1 0 1401.3 468.3M1405.4 463.7Q1409.6 466.0 1406.8 468.3Q1410.3 470.5 1406.1 471.3M1412.4 463.7Q1416.6 466.0 1413.8 468.3Q1417.3 470.5 1413.1 471.3M1423.6 463.7V471.3M1419.1 465.2Q1423.3 467.1 1419.8 469.4L1422.6 471.3M1430.7 463.7H1440.0M1432.5 463.7Q1438.1 466.0 1434.4 468.3Q1439.1 470.5 1433.5 471.3" fill="none" stroke="#666666" stroke-width="1.26" stroke-linecap="round"/><text x="1511.5" y="434.0" font-size="12" text-anchor="middle" textLength="53.0" lengthAdjust="spacingAndGlyphs" font-family="Liberation Sans" fill="#fff" stroke="#fff" stroke-width="2.4" stroke-linejoin="round">Chipyana</text><text x="1511.5" y="434.0" font-size="12" text-anchor="middle" textLength="53.0" lengthAdjust="spacingAndGlyphs" font-family="Liberation Sans" fill="#5a5a5a" stroke="#5a5a5a" stroke-width="0.25">Chipyana</text><text x="1511.8" y="446.7" font-size="12" text-anchor="middle" textLength="35.5" lengthAdjust="spacingAndGlyphs" font-family="Liberation Sans" fill="#fff" stroke="#fff" stroke-width="2.4" stroke-linejoin="round">Khurd</text><text x="1511.8" y="446.7" font-size="12" text-anchor="middle" textLength="35.5" lengthAdjust="spacingAndGlyphs" font-family="Liberation Sans" fill="#5a5a5a" stroke="#5a5a5a" stroke-width="0.25">Khurd</text><text x="1511.7" y="460.0" font-size="12" text-anchor="middle" textLength="47.4" lengthAdjust="spacingAndGlyphs" font-family="Liberation Sans" fill="#fff" stroke="#fff" stroke-width="2.4" stroke-linejoin="round">Urf Tigri</text><text x="1511.7" y="460.0" font-size="12" text-anchor="middle" textLength="47.4" lengthAdjust="spacingAndGlyphs" font-family="Liberation Sans" fill="#5a5a5a" stroke="#5a5a5a" stroke-width="0.25">Urf Tigri</text><path d="M1482.0 464.8H1513.3M1488.3 464.8V472.4M1482.9 467.1Q1486.3 465.6 1486.3 468.6Q1485.9 472.4 1482.8 471.2M1496.1 464.8V472.4M1491.0 466.3Q1495.7 468.2 1491.8 470.5L1494.9 472.4M1503.9 464.8V472.4M1498.8 466.7V470.1H1503.9M1511.7 464.8V472.4M1506.6 466.3Q1511.3 468.2 1507.4 470.5L1510.6 472.4M1518.7 464.8H1541.0M1524.6 464.8V472.4M1519.8 466.3Q1524.2 468.2 1520.5 470.5L1523.5 472.4M1527.6 464.8Q1532.1 467.1 1529.1 469.4Q1532.8 471.6 1528.3 472.4M1535.0 464.8Q1539.5 467.1 1536.5 469.4Q1540.3 471.6 1535.8 472.4" fill="none" stroke="#fff" stroke-width="3.26" stroke-linecap="round" stroke-linejoin="round"/><path d="M1482.0 464.8H1513.3M1488.3 464.8V472.4M1482.9 467.1Q1486.3 465.6 1486.3 468.6Q1485.9 472.4 1482.8 471.2M1496.1 464.8V472.4M1491.0 466.3Q1495.7 468.2 1491.8 470.5L1494.9 472.4M1503.9 464.8V472.4M1498.8 466.7V470.1H1503.9M1511.7 464.8V472.4M1506.6 466.3Q1511.3 468.2 1507.4 470.5L1510.6 472.4M1518.7 464.8H1541.0M1524.6 464.8V472.4M1519.8 466.3Q1524.2 468.2 1520.5 470.5L1523.5 472.4M1527.6 464.8Q1532.1 467.1 1529.1 469.4Q1532.8 471.6 1528.3 472.4M1535.0 464.8Q1539.5 467.1 1536.5 469.4Q1540.3 471.6 1535.8 472.4" fill="none" stroke="#666666" stroke-width="1.26" stroke-linecap="round"/><path d="M1488.0 477.5H1509.0M1493.6 477.5V485.1M1488.8 479.8Q1491.8 478.3 1491.8 481.3Q1491.5 485.1 1488.7 483.9M1500.6 477.5V485.1M1495.8 479.8Q1498.8 478.3 1498.8 481.3Q1498.5 485.1 1495.7 483.9M1507.6 477.5V485.1M1502.8 479.8Q1505.8 478.3 1505.8 481.3Q1505.5 485.1 1502.7 483.9M1514.0 477.5H1535.0M1519.6 477.5V485.1M1515.1 479.0Q1519.3 480.9 1515.8 483.2L1518.6 485.1M1526.6 477.5V485.1M1525.3 482.1A1.7 1.9 0 1 0 1525.3 482.1M1533.6 477.5V485.1M1529.1 479.4V482.8H1533.6" fill="none" stroke="#fff" stroke-width="3.26" stroke-linecap="round" stroke-linejoin="round"/><path d="M1488.0 477.5H1509.0M1493.6 477.5V485.1M1488.8 479.8Q1491.8 478.3 1491.8 481.3Q1491.5 485.1 1488.7 483.9M1500.6 477.5V485.1M1495.8 479.8Q1498.8 478.3 1498.8 481.3Q1498.5 485.1 1495.7 483.9M1507.6 477.5V485.1M1502.8 479.8Q1505.8 478.3 1505.8 481.3Q1505.5 485.1 1502.7 483.9M1514.0 477.5H1535.0M1519.6 477.5V485.1M1515.1 479.0Q1519.3 480.9 1515.8 483.2L1518.6 485.1M1526.6 477.5V485.1M1525.3 482.1A1.7 1.9 0 1 0 1525.3 482.1M1533.6 477.5V485.1M1529.1 479.4V482.8H1533.6" fill="none" stroke="#666666" stroke-width="1.26" stroke-linecap="round"/><text x="523.0" y="734.4" font-size="8.02" text-anchor="middle" textLength="48.0" lengthAdjust="spacing" font-family="Liberation Sans" fill="#fff" stroke="#fff" stroke-width="2.4" stroke-linejoin="round">BIJWASAN</text><text x="523.0" y="734.4" font-size="8.02" text-anchor="middle" textLength="48.0" lengthAdjust="spacing" font-family="Liberation Sans" fill="#595959" stroke="#595959" stroke-width="0.35">BIJWASAN</text><path d="M506.0 737.8H539.0M507.6 737.8Q512.6 739.7 509.3 741.6Q513.4 743.6 508.5 744.2M520.9 737.8V744.2M515.5 739.1Q520.4 740.7 516.3 742.6L519.6 744.2M529.1 737.8V744.2M527.6 741.6A2.1 1.6 0 1 0 527.6 741.7M532.4 737.8Q537.4 739.7 534.0 741.6Q538.2 743.6 533.2 744.2" fill="none" stroke="#fff" stroke-width="3.08" stroke-linecap="round" stroke-linejoin="round"/><path d="M506.0 737.8H539.0M507.6 737.8Q512.6 739.7 509.3 741.6Q513.4 743.6 508.5 744.2M520.9 737.8V744.2M515.5 739.1Q520.4 740.7 516.3 742.6L519.6 744.2M529.1 737.8V744.2M527.6 741.6A2.1 1.6 0 1 0 527.6 741.7M532.4 737.8Q537.4 739.7 534.0 741.6Q538.2 743.6 533.2 744.2" fill="none" stroke="#666666" stroke-width="1.08" stroke-linecap="round"/><text x="820.2" y="647.9" font-size="10.55" text-anchor="middle" textLength="91.5" lengthAdjust="spacing" font-family="Liberation Sans" fill="#fff" stroke="#fff" stroke-width="2.4" stroke-linejoin="round">VASANT VIHAR</text><text x="820.2" y="647.9" font-size="10.55" text-anchor="middle" textLength="91.5" lengthAdjust="spacing" font-family="Liberation Sans" fill="#595959" stroke="#595959" stroke-width="0.35">VASANT VIHAR</text><path d="M793.6 652.2H813.8M795.6 652.2Q801.7 654.5 797.6 656.8Q802.7 659.0 796.6 659.8M811.7 652.2V659.8M809.9 656.8A2.5 1.9 0 1 0 809.9 656.8M819.8 652.2H845.0M826.5 652.2V659.8M825.0 656.8A2.1 1.9 0 1 0 825.0 656.8M834.9 652.2V659.8M829.2 654.5Q832.8 653.0 832.8 656.0Q832.4 659.8 829.0 658.6M843.3 652.2V659.8M837.6 654.5Q841.2 653.0 841.2 656.0Q840.8 659.8 837.4 658.6" fill="none" stroke="#fff" stroke-width="3.26" stroke-linecap="round" stroke-linejoin="round"/><path d="M793.6 652.2H813.8M795.6 652.2Q801.7 654.5 797.6 656.8Q802.7 659.0 796.6 659.8M811.7 652.2V659.8M809.9 656.8A2.5 1.9 0 1 0 809.9 656.8M819.8 652.2H845.0M826.5 652.2V659.8M825.0 656.8A2.1 1.9 0 1 0 825.0 656.8M834.9 652.2V659.8M829.2 654.5Q832.8 653.0 832.8 656.0Q832.4 659.8 829.0 658.6M843.3 652.2V659.8M837.6 654.5Q841.2 653.0 841.2 656.0Q840.8 659.8 837.4 658.6" fill="none" stroke="#666666" stroke-width="1.26" stroke-linecap="round"/><text x="932.9" y="686.8" font-size="10.68" text-anchor="middle" textLength="72.2" lengthAdjust="spacing" font-family="Liberation Sans" fill="#fff" stroke="#fff" stroke-width="2.4" stroke-linejoin="round">HAUZ KHAS</text><text x="932.9" y="686.8" font-size="10.68" text-anchor="middle" textLength="72.2" lengthAdjust="spacing" font-family="Liberation Sans" fill="#595959" stroke="#595959" stroke-width="0.35">HAUZ KHAS</text><path d="M913.0 690.2H938.4M915.5 690.2Q923.1 692.5 918.1 694.8Q924.4 697.0 916.8 697.8M935.8 690.2V697.8M933.5 694.8A3.2 1.9 0 1 0 933.5 694.8M946.0 690.2H965.0M953.6 690.2V697.8M947.4 692.1V695.5H953.6M963.1 690.2V697.8M956.6 692.5Q960.7 691.0 960.7 694.0Q960.2 697.8 956.4 696.6" fill="none" stroke="#fff" stroke-width="3.26" stroke-linecap="round" stroke-linejoin="round"/><path d="M913.0 690.2H938.4M915.5 690.2Q923.1 692.5 918.1 694.8Q924.4 697.0 916.8 697.8M935.8 690.2V697.8M933.5 694.8A3.2 1.9 0 1 0 933.5 694.8M946.0 690.2H965.0M953.6 690.2V697.8M947.4 692.1V695.5H953.6M963.1 690.2V697.8M956.6 692.5Q960.7 691.0 960.7 694.0Q960.2 697.8 956.4 696.6" fill="none" stroke="#666666" stroke-width="1.26" stroke-linecap="round"/><text x="727.9" y="696.2" font-size="7.92" text-anchor="middle" textLength="60.2" lengthAdjust="spacing" font-family="Liberation Sans" fill="#fff" stroke="#fff" stroke-width="2.4" stroke-linejoin="round">MAHIPALPUR</text><text x="727.9" y="696.2" font-size="7.92" text-anchor="middle" textLength="60.2" lengthAdjust="spacing" font-family="Liberation Sans" fill="#595959" stroke="#595959" stroke-width="0.35">MAHIPALPUR</text><path d="M709.6 699.5H745.0M715.3 699.5V705.9M710.7 701.1V704.0H715.3M722.3 699.5V705.9M717.7 701.1V704.0H722.3M729.4 699.5V705.9M724.6 701.4Q727.7 700.1 727.7 702.7Q727.3 705.9 724.5 705.0M736.5 699.5V705.9M731.9 700.8Q736.1 702.4 732.6 704.3L735.4 705.9M743.6 699.5V705.9M742.3 703.3A1.8 1.6 0 1 0 742.3 703.4" fill="none" stroke="#fff" stroke-width="3.08" stroke-linecap="round" stroke-linejoin="round"/><path d="M709.6 699.5H745.0M715.3 699.5V705.9M710.7 701.1V704.0H715.3M722.3 699.5V705.9M717.7 701.1V704.0H722.3M729.4 699.5V705.9M724.6 701.4Q727.7 700.1 727.7 702.7Q727.3 705.9 724.5 705.0M736.5 699.5V705.9M731.9 700.8Q736.1 702.4 732.6 704.3L735.4 705.9M743.6 699.5V705.9M742.3 703.3A1.8 1.6 0 1 0 742.3 703.4" fill="none" stroke="#666666" stroke-width="1.08" stroke-linecap="round"/><text x="783.3" y="744.4" font-size="8.00" text-anchor="middle" textLength="64.8" lengthAdjust="spacing" font-family="Liberation Sans" fill="#fff" stroke="#fff" stroke-width="2.4" stroke-linejoin="round">VASANT KUNJ</text><text x="783.3" y="744.4" font-size="8.00" text-anchor="middle" textLength="64.8" lengthAdjust="spacing" font-family="Liberation Sans" fill="#595959" stroke="#595959" stroke-width="0.35">VASANT KUNJ</text><path d="M764.0 747.6H779.1M770.0 747.6V754.0M764.9 749.5Q768.2 748.2 768.2 750.8Q767.8 754.0 764.8 753.1M773.1 747.6Q777.6 749.5 774.6 751.4Q778.3 753.4 773.8 754.0M783.6 747.6H802.5M788.7 747.6V754.0M784.6 748.9Q788.3 750.5 785.2 752.4L787.7 754.0M795.0 747.6V754.0M790.9 749.2V752.1H795.0M801.2 747.6V754.0M797.2 749.2V752.1H801.2" fill="none" stroke="#fff" stroke-width="3.08" stroke-linecap="round" stroke-linejoin="round"/><path d="M764.0 747.6H779.1M770.0 747.6V754.0M764.9 749.5Q768.2 748.2 768.2 750.8Q767.8 754.0 764.8 753.1M773.1 747.6Q777.6 749.5 774.6 751.4Q778.3 753.4 773.8 754.0M783.6 747.6H802.5M788.7 747.6V754.0M784.6 748.9Q788.3 750.5 785.2 752.4L787.7 754.0M795.0 747.6V754.0M790.9 749.2V752.1H795.0M801.2 747.6V754.0M797.2 749.2V752.1H801.2" fill="none" stroke="#666666" stroke-width="1.08" stroke-linecap="round"/><text x="866.2" y="771.9" font-size="7.65" text-anchor="middle" textLength="46.5" lengthAdjust="spacing" font-family="Liberation Sans" fill="#fff" stroke="#fff" stroke-width="2.4" stroke-linejoin="round">MEHRAULI</text><text x="866.2" y="771.9" font-size="7.65" text-anchor="middle" textLength="46.5" lengthAdjust="spacing" font-family="Liberation Sans" fill="#595959" stroke="#595959" stroke-width="0.35">MEHRAULI</text><path d="M852.6 774.8H877.6M857.6 774.8V781.2M856.5 778.6A1.6 1.6 0 1 0 856.5 778.7M860.1 774.8Q863.9 776.7 861.4 778.6Q864.5 780.6 860.7 781.2M870.1 774.8V781.2M865.9 776.7Q868.5 775.4 868.5 778.0Q868.2 781.2 865.7 780.3M876.4 774.8V781.2M872.1 776.7Q874.8 775.4 874.8 778.0Q874.5 781.2 872.0 780.3" fill="none" stroke="#fff" stroke-width="3.08" stroke-linecap="round" stroke-linejoin="round"/><path d="M852.6 774.8H877.6M857.6 774.8V781.2M856.5 778.6A1.6 1.6 0 1 0 856.5 778.7M860.1 774.8Q863.9 776.7 861.4 778.6Q864.5 780.6 860.7 781.2M870.1 774.8V781.2M865.9 776.7Q868.5 775.4 868.5 778.0Q868.2 781.2 865.7 780.3M876.4 774.8V781.2M872.1 776.7Q874.8 775.4 874.8 778.0Q874.5 781.2 872.0 780.3" fill="none" stroke="#666666" stroke-width="1.08" stroke-linecap="round"/><text x="949.8" y="729.3" font-size="8.02" text-anchor="middle" textLength="76.4" lengthAdjust="spacing" font-family="Liberation Sans" fill="#fff" stroke="#fff" stroke-width="2.4" stroke-linejoin="round">MALVIYA NAGAR</text><text x="949.8" y="729.3" font-size="8.02" text-anchor="middle" textLength="76.4" lengthAdjust="spacing" font-family="Liberation Sans" fill="#595959" stroke="#595959" stroke-width="0.35">MALVIYA NAGAR</text><path d="M927.0 732.8H949.9M931.6 732.8V739.2M927.7 734.7Q930.2 733.4 930.2 736.0Q929.9 739.2 927.6 738.3M937.3 732.8V739.2M933.6 734.4V737.3H937.3M943.1 732.8V739.2M939.2 734.7Q941.6 733.4 941.6 736.0Q941.3 739.2 939.0 738.3M948.8 732.8V739.2M945.1 734.4V737.3H948.8M954.5 732.8H966.0M959.1 732.8V739.2M958.1 736.6A1.4 1.6 0 1 0 958.1 736.7M964.9 732.8V739.2M961.1 734.1Q964.6 735.7 961.7 737.6L964.0 739.2" fill="none" stroke="#fff" stroke-width="3.08" stroke-linecap="round" stroke-linejoin="round"/><path d="M927.0 732.8H949.9M931.6 732.8V739.2M927.7 734.7Q930.2 733.4 930.2 736.0Q929.9 739.2 927.6 738.3M937.3 732.8V739.2M933.6 734.4V737.3H937.3M943.1 732.8V739.2M939.2 734.7Q941.6 733.4 941.6 736.0Q941.3 739.2 939.0 738.3M948.8 732.8V739.2M945.1 734.4V737.3H948.8M954.5 732.8H966.0M959.1 732.8V739.2M958.1 736.6A1.4 1.6 0 1 0 958.1 736.7M964.9 732.8V739.2M961.1 734.1Q964.6 735.7 961.7 737.6L964.0 739.2" fill="none" stroke="#666666" stroke-width="1.08" stroke-linecap="round"/><text x="953.3" y="767.3" font-size="8.79" text-anchor="middle" textLength="33.4" lengthAdjust="spacing" font-family="Liberation Sans" fill="#fff" stroke="#fff" stroke-width="2.4" stroke-linejoin="round">SAKET</text><text x="953.3" y="767.3" font-size="8.79" text-anchor="middle" textLength="33.4" lengthAdjust="spacing" font-family="Liberation Sans" fill="#595959" stroke="#595959" stroke-width="0.35">SAKET</text><path d="M945.0 769.8H962.0M946.1 769.8Q949.5 771.7 947.3 773.6Q950.1 775.6 946.7 776.2M955.2 769.8V776.2M951.5 771.4V774.3H955.2M960.9 769.8V776.2M957.2 771.1Q960.6 772.7 957.8 774.6L960.0 776.2" fill="none" stroke="#fff" stroke-width="3.08" stroke-linecap="round" stroke-linejoin="round"/><path d="M945.0 769.8H962.0M946.1 769.8Q949.5 771.7 947.3 773.6Q950.1 775.6 946.7 776.2M955.2 769.8V776.2M951.5 771.4V774.3H955.2M960.9 769.8V776.2M957.2 771.1Q960.6 772.7 957.8 774.6L960.0 776.2" fill="none" stroke="#666666" stroke-width="1.08" stroke-linecap="round"/><text x="758.5" y="845.8" font-size="7.54" text-anchor="middle" textLength="43.6" lengthAdjust="spacing" font-family="Liberation Sans" fill="#fff" stroke="#fff" stroke-width="2.4" stroke-linejoin="round">GHITORNI</text><text x="758.5" y="845.8" font-size="7.54" text-anchor="middle" textLength="43.6" lengthAdjust="spacing" font-family="Liberation Sans" fill="#595959" stroke="#595959" stroke-width="0.35">GHITORNI</text><text x="882.8" y="847.4" font-size="7.97" text-anchor="middle" textLength="63.5" lengthAdjust="spacing" font-family="Liberation Sans" fill="#fff" stroke="#fff" stroke-width="2.4" stroke-linejoin="round">CHHATARPUR</text><text x="882.8" y="847.4" font-size="7.97" text-anchor="middle" textLength="63.5" lengthAdjust="spacing" font-family="Liberation Sans" fill="#595959" stroke="#595959" stroke-width="0.35">CHHATARPUR</text><text x="1034.5" y="633.3" font-size="10.60" text-anchor="middle" textLength="92.9" lengthAdjust="spacing" font-family="Liberation Sans" fill="#fff" stroke="#fff" stroke-width="2.4" stroke-linejoin="round">LAJPAT NAGAR</text><text x="1034.5" y="633.3" font-size="10.60" text-anchor="middle" textLength="92.9" lengthAdjust="spacing" font-family="Liberation Sans" fill="#595959" stroke="#595959" stroke-width="0.35">LAJPAT NAGAR</text><path d="M1005.6 637.8H1037.7M1014.2 637.8V645.4M1007.2 639.3Q1013.6 641.2 1008.3 643.5L1012.5 645.4M1018.4 637.8Q1024.8 640.1 1020.6 642.4Q1025.9 644.6 1019.5 645.4M1029.1 637.8Q1035.5 640.1 1031.3 642.4Q1036.6 644.6 1030.2 645.4M1045.4 637.8H1064.6M1053.1 637.8V645.4M1046.8 639.7V643.1H1053.1M1062.7 637.8V645.4M1060.9 642.4A2.4 1.9 0 1 0 1060.9 642.4" fill="none" stroke="#fff" stroke-width="3.26" stroke-linecap="round" stroke-linejoin="round"/><path d="M1005.6 637.8H1037.7M1014.2 637.8V645.4M1007.2 639.3Q1013.6 641.2 1008.3 643.5L1012.5 645.4M1018.4 637.8Q1024.8 640.1 1020.6 642.4Q1025.9 644.6 1019.5 645.4M1029.1 637.8Q1035.5 640.1 1031.3 642.4Q1036.6 644.6 1030.2 645.4M1045.4 637.8H1064.6M1053.1 637.8V645.4M1046.8 639.7V643.1H1053.1M1062.7 637.8V645.4M1060.9 642.4A2.4 1.9 0 1 0 1060.9 642.4" fill="none" stroke="#666666" stroke-width="1.26" stroke-linecap="round"/><text x="1027.8" y="679.4" font-size="9.82" text-anchor="middle" textLength="54.4" lengthAdjust="spacing" font-family="Liberation Sans" fill="#fff" stroke="#fff" stroke-width="2.4" stroke-linejoin="round">GREATER</text><text x="1027.8" y="679.4" font-size="9.82" text-anchor="middle" textLength="54.4" lengthAdjust="spacing" font-family="Liberation Sans" fill="#595959" stroke="#595959" stroke-width="0.35">GREATER</text><text x="1027.5" y="690.7" font-size="10.59" text-anchor="middle" textLength="53.0" lengthAdjust="spacing" font-family="Liberation Sans" fill="#fff" stroke="#fff" stroke-width="2.4" stroke-linejoin="round">KAILASH</text><text x="1027.5" y="690.7" font-size="10.59" text-anchor="middle" textLength="53.0" lengthAdjust="spacing" font-family="Liberation Sans" fill="#595959" stroke="#595959" stroke-width="0.35">KAILASH</text><path d="M999.0 695.2H1026.0M1004.4 695.2V702.8M1000.0 696.7Q1004.1 698.6 1000.7 700.9L1003.4 702.8M1011.2 695.2V702.8M1006.8 697.1V700.5H1011.2M1013.9 695.2Q1017.9 697.5 1015.2 699.8Q1018.6 702.0 1014.6 702.8M1020.6 695.2Q1024.7 697.5 1022.0 699.8Q1025.4 702.0 1021.3 702.8M1031.5 695.2H1054.0M1037.5 695.2V702.8M1032.4 697.5Q1035.6 696.0 1035.6 699.0Q1035.2 702.8 1032.2 701.6M1045.0 695.2V702.8M1040.1 696.7Q1044.6 698.6 1040.9 700.9L1043.9 702.8M1052.5 695.2V702.8M1047.6 696.7Q1052.1 698.6 1048.4 700.9L1051.4 702.8" fill="none" stroke="#fff" stroke-width="3.26" stroke-linecap="round" stroke-linejoin="round"/><path d="M999.0 695.2H1026.0M1004.4 695.2V702.8M1000.0 696.7Q1004.1 698.6 1000.7 700.9L1003.4 702.8M1011.2 695.2V702.8M1006.8 697.1V700.5H1011.2M1013.9 695.2Q1017.9 697.5 1015.2 699.8Q1018.6 702.0 1014.6 702.8M1020.6 695.2Q1024.7 697.5 1022.0 699.8Q1025.4 702.0 1021.3 702.8M1031.5 695.2H1054.0M1037.5 695.2V702.8M1032.4 697.5Q1035.6 696.0 1035.6 699.0Q1035.2 702.8 1032.2 701.6M1045.0 695.2V702.8M1040.1 696.7Q1044.6 698.6 1040.9 700.9L1043.9 702.8M1052.5 695.2V702.8M1047.6 696.7Q1052.1 698.6 1048.4 700.9L1051.4 702.8" fill="none" stroke="#666666" stroke-width="1.26" stroke-linecap="round"/><text x="1085.2" y="711.9" font-size="8.05" text-anchor="middle" textLength="38.5" lengthAdjust="spacing" font-family="Liberation Sans" fill="#fff" stroke="#fff" stroke-width="2.4" stroke-linejoin="round">KALKAJI</text><text x="1085.2" y="711.9" font-size="8.05" text-anchor="middle" textLength="38.5" lengthAdjust="spacing" font-family="Liberation Sans" fill="#595959" stroke="#595959" stroke-width="0.35">KALKAJI</text><path d="M1068.0 714.2H1101.5M1069.7 714.2Q1074.7 716.1 1071.3 718.0Q1075.5 720.0 1070.5 720.6M1078.0 714.2Q1083.1 716.1 1079.7 718.0Q1083.9 720.0 1078.9 720.6M1091.5 714.2V720.6M1085.8 716.1Q1089.4 714.8 1089.4 717.4Q1088.9 720.6 1085.6 719.7M1094.8 714.2Q1099.8 716.1 1096.5 718.0Q1100.7 720.0 1095.6 720.6" fill="none" stroke="#fff" stroke-width="3.08" stroke-linecap="round" stroke-linejoin="round"/><path d="M1068.0 714.2H1101.5M1069.7 714.2Q1074.7 716.1 1071.3 718.0Q1075.5 720.0 1070.5 720.6M1078.0 714.2Q1083.1 716.1 1079.7 718.0Q1083.9 720.0 1078.9 720.6M1091.5 714.2V720.6M1085.8 716.1Q1089.4 714.8 1089.4 717.4Q1088.9 720.6 1085.6 719.7M1094.8 714.2Q1099.8 716.1 1096.5 718.0Q1100.7 720.0 1095.6 720.6" fill="none" stroke="#666666" stroke-width="1.08" stroke-linecap="round"/><text x="1159.0" y="623.1" font-size="7.98" text-anchor="middle" textLength="31.2" lengthAdjust="spacing" font-family="Liberation Sans" fill="#fff" stroke="#fff" stroke-width="2.4" stroke-linejoin="round">OKHLA</text><text x="1159.0" y="623.1" font-size="7.98" text-anchor="middle" textLength="31.2" lengthAdjust="spacing" font-family="Liberation Sans" fill="#595959" stroke="#595959" stroke-width="0.35">OKHLA</text><path d="M1145.7 625.8H1172.3M1156.3 625.8V632.2M1147.7 627.1Q1155.7 628.7 1149.0 630.6L1154.3 632.2M1169.6 625.8V632.2M1161.0 627.1Q1169.0 628.7 1162.3 630.6L1167.6 632.2" fill="none" stroke="#fff" stroke-width="3.08" stroke-linecap="round" stroke-linejoin="round"/><path d="M1145.7 625.8H1172.3M1156.3 625.8V632.2M1147.7 627.1Q1155.7 628.7 1149.0 630.6L1154.3 632.2M1169.6 625.8V632.2M1161.0 627.1Q1169.0 628.7 1162.3 630.6L1167.6 632.2" fill="none" stroke="#666666" stroke-width="1.08" stroke-linecap="round"/><text x="1196.6" y="679.9" font-size="7.70" text-anchor="middle" textLength="72.2" lengthAdjust="spacing" font-family="Liberation Sans" fill="#fff" stroke="#fff" stroke-width="2.4" stroke-linejoin="round">SHAHEEN BAGH</text><text x="1196.6" y="679.9" font-size="7.70" text-anchor="middle" textLength="72.2" lengthAdjust="spacing" font-family="Liberation Sans" fill="#595959" stroke="#595959" stroke-width="0.35">SHAHEEN BAGH</text><path d="M1176.7 683.3H1197.5M1182.3 683.3V689.7M1177.7 684.6Q1181.9 686.2 1178.4 688.1L1181.2 689.7M1189.2 683.3V689.7M1184.7 684.6Q1188.8 686.2 1185.4 688.1L1188.1 689.7M1192.0 683.3Q1196.1 685.2 1193.4 687.1Q1196.8 689.1 1192.7 689.7M1202.5 683.3H1215.0M1207.5 683.3V689.7M1203.4 684.9V687.8H1207.5M1213.8 683.3V689.7M1212.6 687.1A1.6 1.6 0 1 0 1212.6 687.2" fill="none" stroke="#fff" stroke-width="3.08" stroke-linecap="round" stroke-linejoin="round"/><path d="M1176.7 683.3H1197.5M1182.3 683.3V689.7M1177.7 684.6Q1181.9 686.2 1178.4 688.1L1181.2 689.7M1189.2 683.3V689.7M1184.7 684.6Q1188.8 686.2 1185.4 688.1L1188.1 689.7M1192.0 683.3Q1196.1 685.2 1193.4 687.1Q1196.8 689.1 1192.7 689.7M1202.5 683.3H1215.0M1207.5 683.3V689.7M1203.4 684.9V687.8H1207.5M1213.8 683.3V689.7M1212.6 687.1A1.6 1.6 0 1 0 1212.6 687.2" fill="none" stroke="#666666" stroke-width="1.08" stroke-linecap="round"/><text x="1180.8" y="739.0" font-size="7.95" text-anchor="middle" textLength="65.6" lengthAdjust="spacing" font-family="Liberation Sans" fill="#fff" stroke="#fff" stroke-width="2.4" stroke-linejoin="round">SARITA VIHAR</text><text x="1180.8" y="739.0" font-size="7.95" text-anchor="middle" textLength="65.6" lengthAdjust="spacing" font-family="Liberation Sans" fill="#595959" stroke="#595959" stroke-width="0.35">SARITA VIHAR</text><path d="M1159.0 742.3H1178.2M1160.3 742.3Q1164.1 744.2 1161.6 746.1Q1164.8 748.1 1160.9 748.7M1170.5 742.3V748.7M1166.4 743.9V746.8H1170.5M1176.9 742.3V748.7M1175.8 746.1A1.6 1.6 0 1 0 1175.8 746.2M1182.8 742.3H1202.0M1187.9 742.3V748.7M1183.8 743.9V746.8H1187.9M1194.3 742.3V748.7M1190.2 743.9V746.8H1194.3M1200.7 742.3V748.7M1196.6 743.9V746.8H1200.7" fill="none" stroke="#fff" stroke-width="3.08" stroke-linecap="round" stroke-linejoin="round"/><path d="M1159.0 742.3H1178.2M1160.3 742.3Q1164.1 744.2 1161.6 746.1Q1164.8 748.1 1160.9 748.7M1170.5 742.3V748.7M1166.4 743.9V746.8H1170.5M1176.9 742.3V748.7M1175.8 746.1A1.6 1.6 0 1 0 1175.8 746.2M1182.8 742.3H1202.0M1187.9 742.3V748.7M1183.8 743.9V746.8H1187.9M1194.3 742.3V748.7M1190.2 743.9V746.8H1194.3M1200.7 742.3V748.7M1196.6 743.9V746.8H1200.7" fill="none" stroke="#666666" stroke-width="1.08" stroke-linecap="round"/><text x="1193.0" y="803.3" font-size="7.73" text-anchor="middle" textLength="50.0" lengthAdjust="spacing" font-family="Liberation Sans" fill="#fff" stroke="#fff" stroke-width="2.4" stroke-linejoin="round">BADARPUR</text><text x="1193.0" y="803.3" font-size="7.73" text-anchor="middle" textLength="50.0" lengthAdjust="spacing" font-family="Liberation Sans" fill="#595959" stroke="#595959" stroke-width="0.35">BADARPUR</text><path d="M1181.0 806.5H1204.7M1185.7 806.5V812.9M1181.7 808.4Q1184.3 807.1 1184.3 809.7Q1184.0 812.9 1181.6 812.0M1191.7 806.5V812.9M1187.8 808.1V811.0H1191.7M1197.6 806.5V812.9M1193.7 807.8Q1197.3 809.4 1194.3 811.3L1196.7 812.9M1203.5 806.5V812.9M1199.5 808.4Q1202.0 807.1 1202.0 809.7Q1201.7 812.9 1199.4 812.0" fill="none" stroke="#fff" stroke-width="3.08" stroke-linecap="round" stroke-linejoin="round"/><path d="M1181.0 806.5H1204.7M1185.7 806.5V812.9M1181.7 808.4Q1184.3 807.1 1184.3 809.7Q1184.0 812.9 1181.6 812.0M1191.7 806.5V812.9M1187.8 808.1V811.0H1191.7M1197.6 806.5V812.9M1193.7 807.8Q1197.3 809.4 1194.3 811.3L1196.7 812.9M1203.5 806.5V812.9M1199.5 808.4Q1202.0 807.1 1202.0 809.7Q1201.7 812.9 1199.4 812.0" fill="none" stroke="#666666" stroke-width="1.08" stroke-linecap="round"/><text x="1280.4" y="810.0" font-size="10.35" text-anchor="middle" textLength="51.2" lengthAdjust="spacing" font-family="Liberation Sans" fill="#fff" stroke="#fff" stroke-width="2.4" stroke-linejoin="round">JAITPUR</text><text x="1280.4" y="810.0" font-size="10.35" text-anchor="middle" textLength="51.2" lengthAdjust="spacing" font-family="Liberation Sans" fill="#595959" stroke="#595959" stroke-width="0.35">JAITPUR</text><path d="M1263.0 815.2H1294.0M1269.2 815.2V822.8M1263.9 817.5Q1267.3 816.0 1267.3 819.0Q1266.9 822.8 1263.8 821.6M1272.3 815.2Q1277.0 817.5 1273.8 819.8Q1277.7 822.0 1273.1 822.8M1284.7 815.2V822.8M1279.7 817.1V820.5H1284.7M1292.5 815.2V822.8M1287.4 817.1V820.5H1292.5" fill="none" stroke="#fff" stroke-width="3.26" stroke-linecap="round" stroke-linejoin="round"/><path d="M1263.0 815.2H1294.0M1269.2 815.2V822.8M1263.9 817.5Q1267.3 816.0 1267.3 819.0Q1266.9 822.8 1263.8 821.6M1272.3 815.2Q1277.0 817.5 1273.8 819.8Q1277.7 822.0 1273.1 822.8M1284.7 815.2V822.8M1279.7 817.1V820.5H1284.7M1292.5 815.2V822.8M1287.4 817.1V820.5H1292.5" fill="none" stroke="#666666" stroke-width="1.26" stroke-linecap="round"/><text x="1028.5" y="837.8" font-size="7.94" text-anchor="middle" textLength="72.2" lengthAdjust="spacing" font-family="Liberation Sans" fill="#fff" stroke="#fff" stroke-width="2.4" stroke-linejoin="round">SANGAM VIHAR</text><text x="1028.5" y="837.8" font-size="7.94" text-anchor="middle" textLength="72.2" lengthAdjust="spacing" font-family="Liberation Sans" fill="#595959" stroke="#595959" stroke-width="0.35">SANGAM VIHAR</text><path d="M1008.6 840.4H1024.2M1014.8 840.4V846.8M1009.8 842.0V844.9H1014.8M1018.0 840.4Q1022.6 842.3 1019.5 844.2Q1023.4 846.2 1018.7 846.8M1028.9 840.4H1048.4M1034.1 840.4V846.8M1032.9 844.2A1.6 1.6 0 1 0 1032.9 844.3M1036.7 840.4Q1040.6 842.3 1038.0 844.2Q1041.2 846.2 1037.3 846.8M1047.1 840.4V846.8M1042.9 841.7Q1046.8 843.3 1043.5 845.2L1046.1 846.8" fill="none" stroke="#fff" stroke-width="3.08" stroke-linecap="round" stroke-linejoin="round"/><path d="M1008.6 840.4H1024.2M1014.8 840.4V846.8M1009.8 842.0V844.9H1014.8M1018.0 840.4Q1022.6 842.3 1019.5 844.2Q1023.4 846.2 1018.7 846.8M1028.9 840.4H1048.4M1034.1 840.4V846.8M1032.9 844.2A1.6 1.6 0 1 0 1032.9 844.3M1036.7 840.4Q1040.6 842.3 1038.0 844.2Q1041.2 846.2 1037.3 846.8M1047.1 840.4V846.8M1042.9 841.7Q1046.8 843.3 1043.5 845.2L1046.1 846.8" fill="none" stroke="#666666" stroke-width="1.08" stroke-linecap="round"/><text x="1256.3" y="617.0" font-size="7.62" text-anchor="middle" textLength="50.1" lengthAdjust="spacing" font-family="Liberation Sans" fill="#fff" stroke="#fff" stroke-width="2.4" stroke-linejoin="round">SECTOR 18</text><text x="1256.3" y="617.0" font-size="7.62" text-anchor="middle" textLength="50.1" lengthAdjust="spacing" font-family="Liberation Sans" fill="#595959" stroke="#595959" stroke-width="0.35">SECTOR 18</text><path d="M1240.0 619.8H1261.2M1244.2 619.8V626.2M1240.8 621.1Q1244.0 622.7 1241.3 624.6L1243.4 626.2M1249.5 619.8V626.2M1246.1 621.4V624.3H1249.5M1254.8 619.8V626.2M1251.4 621.4V624.3H1254.8M1260.1 619.8V626.2M1256.5 621.7Q1258.8 620.4 1258.8 623.0Q1258.5 626.2 1256.4 625.3M1265.4 619.8H1272.5M1266.8 619.8Q1271.1 621.7 1268.3 623.6Q1271.8 625.6 1267.6 626.2" fill="none" stroke="#fff" stroke-width="3.08" stroke-linecap="round" stroke-linejoin="round"/><path d="M1240.0 619.8H1261.2M1244.2 619.8V626.2M1240.8 621.1Q1244.0 622.7 1241.3 624.6L1243.4 626.2M1249.5 619.8V626.2M1246.1 621.4V624.3H1249.5M1254.8 619.8V626.2M1251.4 621.4V624.3H1254.8M1260.1 619.8V626.2M1256.5 621.7Q1258.8 620.4 1258.8 623.0Q1258.5 626.2 1256.4 625.3M1265.4 619.8H1272.5M1266.8 619.8Q1271.1 621.7 1268.3 623.6Q1271.8 625.6 1267.6 626.2" fill="none" stroke="#666666" stroke-width="1.08" stroke-linecap="round"/><text x="1386.5" y="612.0" font-size="7.62" text-anchor="middle" textLength="50.1" lengthAdjust="spacing" font-family="Liberation Sans" fill="#fff" stroke="#fff" stroke-width="2.4" stroke-linejoin="round">SECTOR 50</text><text x="1386.5" y="612.0" font-size="7.62" text-anchor="middle" textLength="50.1" lengthAdjust="spacing" font-family="Liberation Sans" fill="#595959" stroke="#595959" stroke-width="0.35">SECTOR 50</text><path d="M1369.7 614.8H1391.2M1374.0 614.8V621.2M1370.5 616.1Q1373.7 617.7 1371.0 619.6L1373.2 621.2M1379.4 614.8V621.2M1375.7 616.7Q1378.0 615.4 1378.0 618.0Q1377.8 621.2 1375.6 620.3M1384.8 614.8V621.2M1381.3 616.1Q1384.5 617.7 1381.8 619.6L1384.0 621.2M1390.1 614.8V621.2M1386.6 616.4V619.3H1390.1M1395.5 614.8H1402.7M1397.0 614.8Q1401.3 616.7 1398.4 618.6Q1402.0 620.6 1397.7 621.2" fill="none" stroke="#fff" stroke-width="3.08" stroke-linecap="round" stroke-linejoin="round"/><path d="M1369.7 614.8H1391.2M1374.0 614.8V621.2M1370.5 616.1Q1373.7 617.7 1371.0 619.6L1373.2 621.2M1379.4 614.8V621.2M1375.7 616.7Q1378.0 615.4 1378.0 618.0Q1377.8 621.2 1375.6 620.3M1384.8 614.8V621.2M1381.3 616.1Q1384.5 617.7 1381.8 619.6L1384.0 621.2M1390.1 614.8V621.2M1386.6 616.4V619.3H1390.1M1395.5 614.8H1402.7M1397.0 614.8Q1401.3 616.7 1398.4 618.6Q1402.0 620.6 1397.7 621.2" fill="none" stroke="#666666" stroke-width="1.08" stroke-linecap="round"/><text x="1564.2" y="610.6" font-size="12" text-anchor="middle" textLength="45.7" lengthAdjust="spacingAndGlyphs" font-family="Liberation Sans" fill="#fff" stroke="#fff" stroke-width="2.4" stroke-linejoin="round">Bisrakh</text><text x="1564.2" y="610.6" font-size="12" text-anchor="middle" textLength="45.7" lengthAdjust="spacingAndGlyphs" font-family="Liberation Sans" fill="#5a5a5a" stroke="#5a5a5a" stroke-width="0.25">Bisrakh</text><text x="1564.3" y="623.8" font-size="12" text-anchor="middle" textLength="47.2" lengthAdjust="spacingAndGlyphs" font-family="Liberation Sans" fill="#fff" stroke="#fff" stroke-width="2.4" stroke-linejoin="round">Jalalpur</text><text x="1564.3" y="623.8" font-size="12" text-anchor="middle" textLength="47.2" lengthAdjust="spacingAndGlyphs" font-family="Liberation Sans" fill="#5a5a5a" stroke="#5a5a5a" stroke-width="0.25">Jalalpur</text><path d="M1546.6 629.0H1581.0M1548.9 629.0Q1555.8 631.3 1551.2 633.6Q1556.9 635.8 1550.0 636.6M1567.2 629.0V636.6M1559.8 630.5Q1566.7 632.4 1560.9 634.7L1565.5 636.6M1571.8 629.0Q1578.7 631.3 1574.1 633.6Q1579.9 635.8 1573.0 636.6" fill="none" stroke="#fff" stroke-width="3.26" stroke-linecap="round" stroke-linejoin="round"/><path d="M1546.6 629.0H1581.0M1548.9 629.0Q1555.8 631.3 1551.2 633.6Q1556.9 635.8 1550.0 636.6M1567.2 629.0V636.6M1559.8 630.5Q1566.7 632.4 1560.9 634.7L1565.5 636.6M1571.8 629.0Q1578.7 631.3 1574.1 633.6Q1579.9 635.8 1573.0 636.6" fill="none" stroke="#666666" stroke-width="1.26" stroke-linecap="round"/><path d="M1542.8 641.2H1585.5M1544.9 641.2Q1551.3 643.5 1547.1 645.8Q1552.4 648.0 1546.0 648.8M1562.0 641.2V648.8M1555.1 643.1V646.5H1562.0M1572.7 641.2V648.8M1570.8 645.8A2.7 1.9 0 1 0 1570.8 645.8M1583.4 641.2V648.8M1576.4 643.1V646.5H1583.4" fill="none" stroke="#fff" stroke-width="3.26" stroke-linecap="round" stroke-linejoin="round"/><path d="M1542.8 641.2H1585.5M1544.9 641.2Q1551.3 643.5 1547.1 645.8Q1552.4 648.0 1546.0 648.8M1562.0 641.2V648.8M1555.1 643.1V646.5H1562.0M1572.7 641.2V648.8M1570.8 645.8A2.7 1.9 0 1 0 1570.8 645.8M1583.4 641.2V648.8M1576.4 643.1V646.5H1583.4" fill="none" stroke="#666666" stroke-width="1.26" stroke-linecap="round"/><text x="1350.5" y="764.9" font-size="10.16" text-anchor="middle" textLength="73.8" lengthAdjust="spacing" font-family="Liberation Sans" fill="#fff" stroke="#fff" stroke-width="2.4" stroke-linejoin="round">SECTOR 128</text><text x="1350.5" y="764.9" font-size="10.16" text-anchor="middle" textLength="73.8" lengthAdjust="spacing" font-family="Liberation Sans" fill="#595959" stroke="#595959" stroke-width="0.35">SECTOR 128</text><path d="M1324.5 769.2H1354.0M1330.4 769.2V776.8M1325.4 771.5Q1328.6 770.0 1328.6 773.0Q1328.2 776.8 1325.2 775.6M1333.4 769.2Q1337.8 771.5 1334.8 773.8Q1338.5 776.0 1334.1 776.8M1340.7 769.2Q1345.2 771.5 1342.2 773.8Q1345.9 776.0 1341.5 776.8M1348.1 769.2Q1352.6 771.5 1349.6 773.8Q1353.3 776.0 1348.9 776.8M1359.9 769.2H1374.7M1365.8 769.2V776.8M1364.5 773.8A1.8 1.9 0 1 0 1364.5 773.8M1373.2 769.2V776.8M1368.4 770.7Q1372.9 772.6 1369.2 774.9L1372.1 776.8" fill="none" stroke="#fff" stroke-width="3.26" stroke-linecap="round" stroke-linejoin="round"/><path d="M1324.5 769.2H1354.0M1330.4 769.2V776.8M1325.4 771.5Q1328.6 770.0 1328.6 773.0Q1328.2 776.8 1325.2 775.6M1333.4 769.2Q1337.8 771.5 1334.8 773.8Q1338.5 776.0 1334.1 776.8M1340.7 769.2Q1345.2 771.5 1342.2 773.8Q1345.9 776.0 1341.5 776.8M1348.1 769.2Q1352.6 771.5 1349.6 773.8Q1353.3 776.0 1348.9 776.8M1359.9 769.2H1374.7M1365.8 769.2V776.8M1364.5 773.8A1.8 1.9 0 1 0 1364.5 773.8M1373.2 769.2V776.8M1368.4 770.7Q1372.9 772.6 1369.2 774.9L1372.1 776.8" fill="none" stroke="#666666" stroke-width="1.26" stroke-linecap="round"/><text x="495.0" y="789.3" font-size="7.92" text-anchor="middle" textLength="22.0" lengthAdjust="spacing" font-family="Liberation Sans" fill="#fff" stroke="#fff" stroke-width="2.4" stroke-linejoin="round">IHAR</text><text x="495.0" y="789.3" font-size="7.92" text-anchor="middle" textLength="22.0" lengthAdjust="spacing" font-family="Liberation Sans" fill="#595959" stroke="#595959" stroke-width="0.35">IHAR</text><path d="M484.0 792.8H500.0M490.4 792.8V799.2M489.0 796.6A2.0 1.6 0 1 0 489.0 796.7M498.4 792.8V799.2M493.2 794.4V797.3H498.4" fill="none" stroke="#fff" stroke-width="3.08" stroke-linecap="round" stroke-linejoin="round"/><path d="M484.0 792.8H500.0M490.4 792.8V799.2M489.0 796.6A2.0 1.6 0 1 0 489.0 796.7M498.4 792.8V799.2M493.2 794.4V797.3H498.4" fill="none" stroke="#666666" stroke-width="1.08" stroke-linecap="round"/><text x="986.2" y="270.3" font-size="23" text-anchor="middle" textLength="53.5" lengthAdjust="spacingAndGlyphs" font-family="Liberation Sans" fill="#fff" stroke="#fff" stroke-width="2.6" stroke-linejoin="round">Delhi</text><text x="986.2" y="270.3" font-size="23" text-anchor="middle" textLength="53.5" lengthAdjust="spacingAndGlyphs" font-family="Liberation Sans" fill="#555" stroke="#555" stroke-width="0.4">Delhi</text><path d="M958.0 274.6H1014.0M960.8 274.6Q969.2 280.3 963.6 285.9Q970.6 291.5 962.2 293.3M983.2 274.6V293.3M974.1 278.4Q982.5 283.1 975.5 288.7L981.1 293.3M997.2 274.6V293.3M987.7 280.3Q993.7 276.5 993.7 284.0Q993.0 293.3 987.4 290.5M1011.2 274.6V293.3M1002.1 279.3V287.7H1011.2" fill="none" stroke="#fff" stroke-width="4.86" stroke-linecap="round" stroke-linejoin="round"/><path d="M958.0 274.6H1014.0M960.8 274.6Q969.2 280.3 963.6 285.9Q970.6 291.5 962.2 293.3M983.2 274.6V293.3M974.1 278.4Q982.5 283.1 975.5 288.7L981.1 293.3M997.2 274.6V293.3M987.7 280.3Q993.7 276.5 993.7 284.0Q993.0 293.3 987.4 290.5M1011.2 274.6V293.3M1002.1 279.3V287.7H1011.2" fill="none" stroke="#555555" stroke-width="2.86" stroke-linecap="round"/><text x="948.0" y="479.9" font-size="23" text-anchor="middle" textLength="108.0" lengthAdjust="spacingAndGlyphs" font-family="Liberation Sans" fill="#fff" stroke="#fff" stroke-width="2.6" stroke-linejoin="round">New Delhi</text><text x="948.0" y="479.9" font-size="23" text-anchor="middle" textLength="108.0" lengthAdjust="spacingAndGlyphs" font-family="Liberation Sans" fill="#555" stroke="#555" stroke-width="0.4">New Delhi</text><path d="M902.0 485.6H921.8M906.0 485.6Q917.8 491.3 909.9 496.9Q919.8 502.5 907.9 504.3M933.7 485.6H993.0M945.5 485.6V504.3M935.9 489.4Q944.8 494.1 937.4 499.7L943.3 504.3M960.4 485.6V504.3M950.7 490.3V498.7H960.4M975.2 485.6V504.3M965.6 490.3V498.7H975.2M981.1 485.6Q990.0 491.3 984.1 496.9Q991.5 502.5 982.6 504.3" fill="none" stroke="#fff" stroke-width="4.86" stroke-linecap="round" stroke-linejoin="round"/><path d="M902.0 485.6H921.8M906.0 485.6Q917.8 491.3 909.9 496.9Q919.8 502.5 907.9 504.3M933.7 485.6H993.0M945.5 485.6V504.3M935.9 489.4Q944.8 494.1 937.4 499.7L943.3 504.3M960.4 485.6V504.3M950.7 490.3V498.7H960.4M975.2 485.6V504.3M965.6 490.3V498.7H975.2M981.1 485.6Q990.0 491.3 984.1 496.9Q991.5 502.5 982.6 504.3" fill="none" stroke="#555555" stroke-width="2.86" stroke-linecap="round"/><text x="1445.5" y="722.8" font-size="23" text-anchor="middle" textLength="61.9" lengthAdjust="spacingAndGlyphs" font-family="Liberation Sans" fill="#fff" stroke="#fff" stroke-width="2.6" stroke-linejoin="round">Noida</text><text x="1445.5" y="722.8" font-size="23" text-anchor="middle" textLength="61.9" lengthAdjust="spacingAndGlyphs" font-family="Liberation Sans" fill="#555" stroke="#555" stroke-width="0.4">Noida</text><path d="M1416.0 731.6H1475.0M1431.7 731.6V750.4M1419.0 736.3V744.7H1431.7M1451.4 731.6V750.4M1438.6 735.4Q1450.4 740.1 1440.6 745.7L1448.5 750.4M1471.1 731.6V750.4M1467.5 742.9A4.9 4.7 0 1 0 1467.5 743.1" fill="none" stroke="#fff" stroke-width="4.86" stroke-linecap="round" stroke-linejoin="round"/><path d="M1416.0 731.6H1475.0M1431.7 731.6V750.4M1419.0 736.3V744.7H1431.7M1451.4 731.6V750.4M1438.6 735.4Q1450.4 740.1 1440.6 745.7L1448.5 750.4M1471.1 731.6V750.4M1467.5 742.9A4.9 4.7 0 1 0 1467.5 743.1" fill="none" stroke="#555555" stroke-width="2.86" stroke-linecap="round"/><text x="1579.5" y="307.3" font-size="23" text-anchor="middle" textLength="41.0" lengthAdjust="spacingAndGlyphs" font-family="Liberation Sans" fill="#fff" stroke="#fff" stroke-width="2.6" stroke-linejoin="round">Gha</text><text x="1579.5" y="307.3" font-size="23" text-anchor="middle" textLength="41.0" lengthAdjust="spacingAndGlyphs" font-family="Liberation Sans" fill="#555" stroke="#555" stroke-width="0.4">Gha</text><path d="M1562.0 313.3H1600.0M1577.2 313.3V332.0M1564.3 319.0Q1572.5 315.2 1572.5 322.7Q1571.5 332.0 1563.9 329.2M1584.8 313.3Q1596.2 319.0 1588.6 324.6Q1598.1 330.2 1586.7 332.0" fill="none" stroke="#fff" stroke-width="4.86" stroke-linecap="round" stroke-linejoin="round"/><path d="M1562.0 313.3H1600.0M1577.2 313.3V332.0M1564.3 319.0Q1572.5 315.2 1572.5 322.7Q1571.5 332.0 1563.9 329.2M1584.8 313.3Q1596.2 319.0 1588.6 324.6Q1598.1 330.2 1586.7 332.0" fill="none" stroke="#555555" stroke-width="2.86" stroke-linecap="round"/><text x="1244.5" y="312" transform="rotate(-72 1244.5 312)" font-size="10.5" font-weight="bold" fill="#616161" text-anchor="middle" dominant-baseline="central" letter-spacing="0.5" stroke="#f5f5f5" stroke-width="2" paint-order="stroke" font-family="Liberation Sans">DELHI</text><text x="1290" y="330" transform="rotate(-70 1290 330)" font-size="10.5" font-weight="bold" fill="#616161" text-anchor="middle" dominant-baseline="central" letter-spacing="0.5" stroke="#f5f5f5" stroke-width="2" paint-order="stroke" font-family="Liberation Sans">UTTAR PRADESH</text><text x="1193" y="565" transform="rotate(-62 1193 565)" font-size="10.5" font-weight="bold" fill="#616161" text-anchor="middle" dominant-baseline="central" letter-spacing="0.5" stroke="#f5f5f5" stroke-width="2" paint-order="stroke" font-family="Liberation Sans">DELHI</text><text x="1238" y="578" transform="rotate(-58 1238 578)" font-size="10.5" font-weight="bold" fill="#616161" text-anchor="middle" dominant-baseline="central" letter-spacing="0.5" stroke="#f5f5f5" stroke-width="2" paint-order="stroke" font-family="Liberation Sans">UTTAR PRADESH</text><text x="701" y="834" transform="rotate(58 701 834)" font-size="11" font-weight="bold" fill="#616161" text-anchor="middle" dominant-baseline="central" letter-spacing="0.5" stroke="#f5f5f5" stroke-width="2" paint-order="stroke" font-family="Liberation Sans">DELHI</text><text x="655" y="840" transform="rotate(58 655 840)" font-size="11" font-weight="bold" fill="#616161" text-anchor="middle" dominant-baseline="central" letter-spacing="0.5" stroke="#f5f5f5" stroke-width="2" paint-order="stroke" font-family="Liberation Sans">HA</text><text x="1521" y="280" transform="rotate(-45 1521 280)" font-size="9" font-weight="normal" fill="#757575" text-anchor="middle" dominant-baseline="central" letter-spacing="0.5" stroke="#f5f5f5" stroke-width="2" paint-order="stroke" font-family="Liberation Sans">Meerut Rd</text><text x="488" y="376" transform="rotate(-22 488 376)" font-size="9" font-weight="normal" fill="#757575" text-anchor="middle" dominant-baseline="central" letter-spacing="0.5" stroke="#f5f5f5" stroke-width="2" paint-order="stroke" font-family="Liberation Sans">Sahibi River</text><text x="595" y="711" transform="rotate(14 595 711)" font-size="9" font-weight="normal" fill="#757575" text-anchor="middle" dominant-baseline="central" letter-spacing="0.5" stroke="#f5f5f5" stroke-width="2" paint-order="stroke" font-family="Liberation Sans">Dwarka Expy</text><text x="1314" y="672" transform="rotate(40 1314 672)" font-size="9" font-weight="normal" fill="#757575" text-anchor="middle" dominant-baseline="central" letter-spacing="0.5" stroke="#f5f5f5" stroke-width="2" paint-order="stroke" font-family="Liberation Sans">Noida-Greater Noida Expy</text><text x="1295" y="710" transform="rotate(58 1295 710)" font-size="9" font-weight="normal" fill="#757575" text-anchor="middle" dominant-baseline="central" letter-spacing="0.5" stroke="#f5f5f5" stroke-width="2" paint-order="stroke" font-family="Liberation Sans">Yamuna River</text><text x="1510" y="838" transform="rotate(24 1510 838)" font-size="9" font-weight="normal" fill="#757575" text-anchor="middle" dominant-baseline="central" letter-spacing="0.5" stroke="#f5f5f5" stroke-width="2" paint-order="stroke" font-family="Liberation Sans">Noida-Gre</text><text x="1075" y="444.5" transform="rotate(-80 1075 444.5)" font-size="9" font-weight="normal" fill="#757575" text-anchor="middle" dominant-baseline="central" letter-spacing="0.5" stroke="#f5f5f5" stroke-width="2" paint-order="stroke" font-family="Liberation Sans">यमुना नदी</text><path transform="translate(736.1,203.8)" d="M0 18C-1.8 13.5-9.5 7.5-9.5 0A9.5 9.5 0 0 1 9.5 0C9.5 7.5 1.8 13.5 0 18Z" fill="#8b5cf6" stroke="#fff" stroke-width="0.8" stroke-opacity="0.7"/><text x="736.1" y="206.9" font-size="8.6" font-weight="bold" fill="#fff" text-anchor="middle" font-family="Liberation Sans">D</text><path transform="translate(563,256.8)" d="M0 18C-1.8 13.5-9.5 7.5-9.5 0A9.5 9.5 0 0 1 9.5 0C9.5 7.5 1.8 13.5 0 18Z" fill="#10b981" stroke="#fff" stroke-width="0.8" stroke-opacity="0.7"/><text x="563" y="259.90000000000003" font-size="8.6" font-weight="bold" fill="#fff" text-anchor="middle" font-family="Liberation Sans">D</text><path transform="translate(767,317.6)" d="M0 18C-1.8 13.5-9.5 7.5-9.5 0A9.5 9.5 0 0 1 9.5 0C9.5 7.5 1.8 13.5 0 18Z" fill="#ef4444" stroke="#fff" stroke-width="0.8" stroke-opacity="0.7"/><text x="767" y="320.70000000000005" font-size="8.6" font-weight="bold" fill="#fff" text-anchor="middle" font-family="Liberation Sans">D</text><path transform="translate(712.6,354.3)" d="M0 18C-1.8 13.5-9.5 7.5-9.5 0A9.5 9.5 0 0 1 9.5 0C9.5 7.5 1.8 13.5 0 18Z" fill="#5f6675" stroke="#fff" stroke-width="0.8" stroke-opacity="0.7"/><text x="712.6" y="357.40000000000003" font-size="8.6" font-weight="bold" fill="#fff" text-anchor="middle" font-family="Liberation Sans">D</text><path transform="translate(709,377.8)" d="M0 18C-1.8 13.5-9.5 7.5-9.5 0A9.5 9.5 0 0 1 9.5 0C9.5 7.5 1.8 13.5 0 18Z" fill="#10b981" stroke="#fff" stroke-width="0.8" stroke-opacity="0.7"/><text x="709" y="380.90000000000003" font-size="8.6" font-weight="bold" fill="#fff" text-anchor="middle" font-family="Liberation Sans">D</text><path transform="translate(876.6,376.6)" d="M0 18C-1.8 13.5-9.5 7.5-9.5 0A9.5 9.5 0 0 1 9.5 0C9.5 7.5 1.8 13.5 0 18Z" fill="#10b981" stroke="#fff" stroke-width="0.8" stroke-opacity="0.7"/><text x="876.6" y="379.70000000000005" font-size="8.6" font-weight="bold" fill="#fff" text-anchor="middle" font-family="Liberation Sans">D</text><path transform="translate(997.6,264.2)" d="M0 18C-1.8 13.5-9.5 7.5-9.5 0A9.5 9.5 0 0 1 9.5 0C9.5 7.5 1.8 13.5 0 18Z" fill="#10b981" stroke="#fff" stroke-width="0.8" stroke-opacity="0.7"/><text x="997.6" y="267.3" font-size="8.6" font-weight="bold" fill="#fff" text-anchor="middle" font-family="Liberation Sans">D</text><path transform="translate(1001.1,298.2)" d="M0 18C-1.8 13.5-9.5 7.5-9.5 0A9.5 9.5 0 0 1 9.5 0C9.5 7.5 1.8 13.5 0 18Z" fill="#8b5cf6" stroke="#fff" stroke-width="0.8" stroke-opacity="0.7"/><text x="1001.1" y="301.3" font-size="8.6" font-weight="bold" fill="#fff" text-anchor="middle" font-family="Liberation Sans">D</text><path transform="translate(992.6,406.8)" d="M0 18C-1.8 13.5-9.5 7.5-9.5 0A9.5 9.5 0 0 1 9.5 0C9.5 7.5 1.8 13.5 0 18Z" fill="#5f6675" stroke="#fff" stroke-width="0.8" stroke-opacity="0.7"/><text x="992.6" y="409.90000000000003" font-size="8.6" font-weight="bold" fill="#fff" text-anchor="middle" font-family="Liberation Sans">D</text><path transform="translate(1004.3,467.4)" d="M0 18C-1.8 13.5-9.5 7.5-9.5 0A9.5 9.5 0 0 1 9.5 0C9.5 7.5 1.8 13.5 0 18Z" fill="#5f6675" stroke="#fff" stroke-width="0.8" stroke-opacity="0.7"/><text x="1004.3" y="470.5" font-size="8.6" font-weight="bold" fill="#fff" text-anchor="middle" font-family="Liberation Sans">D</text><path transform="translate(1179.5,376)" d="M0 18C-1.8 13.5-9.5 7.5-9.5 0A9.5 9.5 0 0 1 9.5 0C9.5 7.5 1.8 13.5 0 18Z" fill="#3b82f6" stroke="#fff" stroke-width="0.8" stroke-opacity="0.7"/><text x="1179.5" y="379.1" font-size="8.6" font-weight="bold" fill="#fff" text-anchor="middle" font-family="Liberation Sans">D</text><path transform="translate(617.3,439)" d="M0 18C-1.8 13.5-9.5 7.5-9.5 0A9.5 9.5 0 0 1 9.5 0C9.5 7.5 1.8 13.5 0 18Z" fill="#5f6675" stroke="#fff" stroke-width="0.8" stroke-opacity="0.7"/><text x="617.3" y="442.1" font-size="8.6" font-weight="bold" fill="#fff" text-anchor="middle" font-family="Liberation Sans">D</text><path transform="translate(617.3,643.8)" d="M0 18C-1.8 13.5-9.5 7.5-9.5 0A9.5 9.5 0 0 1 9.5 0C9.5 7.5 1.8 13.5 0 18Z" fill="#5f6675" stroke="#fff" stroke-width="0.8" stroke-opacity="0.7"/><text x="617.3" y="646.9" font-size="8.6" font-weight="bold" fill="#fff" text-anchor="middle" font-family="Liberation Sans">D</text><path transform="translate(1270.7,598)" d="M0 18C-1.8 13.5-9.5 7.5-9.5 0A9.5 9.5 0 0 1 9.5 0C9.5 7.5 1.8 13.5 0 18Z" fill="#3b82f6" stroke="#fff" stroke-width="0.8" stroke-opacity="0.7"/><text x="1270.7" y="601.1" font-size="8.6" font-weight="bold" fill="#fff" text-anchor="middle" font-family="Liberation Sans">D</text><path transform="translate(988,593.8)" d="M0 18C-1.8 13.5-9.5 7.5-9.5 0A9.5 9.5 0 0 1 9.5 0C9.5 7.5 1.8 13.5 0 18Z" fill="#10b981" stroke="#fff" stroke-width="0.8" stroke-opacity="0.7"/><text x="988" y="596.9" font-size="8.6" font-weight="bold" fill="#fff" text-anchor="middle" font-family="Liberation Sans">D</text><path transform="translate(1008.7,588)" d="M0 18C-1.8 13.5-9.5 7.5-9.5 0A9.5 9.5 0 0 1 9.5 0C9.5 7.5 1.8 13.5 0 18Z" fill="#5f6675" stroke="#fff" stroke-width="0.8" stroke-opacity="0.7"/><text x="1008.7" y="591.1" font-size="8.6" font-weight="bold" fill="#fff" text-anchor="middle" font-family="Liberation Sans">D</text><path transform="translate(810.7,628.6)" d="M0 18C-1.8 13.5-9.5 7.5-9.5 0A9.5 9.5 0 0 1 9.5 0C9.5 7.5 1.8 13.5 0 18Z" fill="#8b5cf6" stroke="#fff" stroke-width="0.8" stroke-opacity="0.7"/><text x="810.7" y="631.7" font-size="8.6" font-weight="bold" fill="#fff" text-anchor="middle" font-family="Liberation Sans">D</text><path transform="translate(942.2,634)" d="M0 18C-1.8 13.5-9.5 7.5-9.5 0A9.5 9.5 0 0 1 9.5 0C9.5 7.5 1.8 13.5 0 18Z" fill="#8b5cf6" stroke="#fff" stroke-width="0.8" stroke-opacity="0.7"/><text x="942.2" y="637.1" font-size="8.6" font-weight="bold" fill="#fff" text-anchor="middle" font-family="Liberation Sans">D</text><path transform="translate(913.1,663.8)" d="M0 18C-1.8 13.5-9.5 7.5-9.5 0A9.5 9.5 0 0 1 9.5 0C9.5 7.5 1.8 13.5 0 18Z" fill="#3b82f6" stroke="#fff" stroke-width="0.8" stroke-opacity="0.7"/><text x="913.1" y="666.9" font-size="8.6" font-weight="bold" fill="#fff" text-anchor="middle" font-family="Liberation Sans">D</text><path transform="translate(1016,664.4)" d="M0 18C-1.8 13.5-9.5 7.5-9.5 0A9.5 9.5 0 0 1 9.5 0C9.5 7.5 1.8 13.5 0 18Z" fill="#5f6675" stroke="#fff" stroke-width="0.8" stroke-opacity="0.7"/><text x="1016" y="667.5" font-size="8.6" font-weight="bold" fill="#fff" text-anchor="middle" font-family="Liberation Sans">D</text><path transform="translate(1084.4,704.4)" d="M0 18C-1.8 13.5-9.5 7.5-9.5 0A9.5 9.5 0 0 1 9.5 0C9.5 7.5 1.8 13.5 0 18Z" fill="#5f6675" stroke="#fff" stroke-width="0.8" stroke-opacity="0.7"/><text x="1084.4" y="707.5" font-size="8.6" font-weight="bold" fill="#fff" text-anchor="middle" font-family="Liberation Sans">D</text><path transform="translate(884.2,741.8)" d="M0 18C-1.8 13.5-9.5 7.5-9.5 0A9.5 9.5 0 0 1 9.5 0C9.5 7.5 1.8 13.5 0 18Z" fill="#ef4444" stroke="#fff" stroke-width="0.8" stroke-opacity="0.7"/><text x="884.2" y="744.9" font-size="8.6" font-weight="bold" fill="#fff" text-anchor="middle" font-family="Liberation Sans">D</text></svg></div>
<div id="legend">
<svg class="abs" style="left:15px;top:17px" width="13" height="13" viewBox="0 0 24 24" fill="none" stroke="#4b5563" stroke-width="1.9" stroke-linejoin="round"><path d="M3 6l6-2.5 6 2.5 6-2.5v15l-6 2.5-6-2.5-6 2.5z"/><path d="M9 3.5v15M15 6v15"/></svg>
<span class="abs" style="left:37px;top:16.5px;font-size:11.7px;font-weight:bold;color:#111827">Map Legend</span>
<span class="h" style="left:15px;top:44px">MARKERS</span>
<div class="ic" style="top:61px;background:#dcfce7"><svg class="abs" style="left:6px;top:4px" width="6" height="9" viewBox="0 0 6 9"><circle cx="3" cy="3" r="2.6" fill="#ef4444"/><path d="M3 5v4" stroke="#9ca3af" stroke-width="0.8"/></svg></div>
<span class="t" style="left:41px;top:65px">Saved Location</span>
<div class="abs" style="left:16px;top:85.5px;width:16px;height:16px;border-radius:50%;background:#7c3aed;box-shadow:0 0 0 1.5px #fff,0 1px 3px rgba(0,0,0,0.25)"></div>
<span class="t" style="left:41px;top:88px">Driver (Live)</span>
<div class="ic" style="top:106px;background:#dbeafe;color:#2563eb">P</div><span class="t" style="left:41px;top:110px">Pickup Point</span>
<div class="ic" style="top:129px;background:#dcfce7;color:#16a34a">D</div><span class="t" style="left:41px;top:133px">Delivery Point</span>
<span class="h" style="left:15px;top:161px">ORDER STATUS</span>
<span class="sd" style="left:15px;top:180px;background:#6b7280"></span><span class="st" style="left:30px;top:179.5px">Unassigned</span>
<span class="sd" style="left:86px;top:180px;background:#f97316"></span><span class="st" style="left:101px;top:179.5px">Assigned</span>
<span class="sd" style="left:15px;top:198px;background:#a855f7"></span><span class="st" style="left:30px;top:197.5px">Routed</span>
<span class="sd" style="left:86px;top:198px;background:#3b82f6"></span><span class="st" style="left:101px;top:197.5px">In Transit</span>
<span class="sd" style="left:15px;top:216px;background:#22c55e"></span><span class="st" style="left:30px;top:215.5px">Completed</span>
<span class="sd" style="left:86px;top:216px;background:#ef4444"></span><span class="st" style="left:101px;top:215.5px">Failed</span>
</div>
<div class="abs" style="left:1553px;top:696px;width:38px;height:38px;border-radius:50%;background:#fff;box-shadow:0 1px 4px rgba(0,0,0,0.2);z-index:3"><svg class="abs" style="left:9px;top:9px" width="20" height="20" viewBox="0 0 20 20" fill="none" stroke="#555" stroke-width="1.8"><path d="M7.5 4.5L10 2l2.5 2.5M7.5 15.5L10 18l2.5-2.5M4.5 7.5L2 10l2.5 2.5M15.5 7.5L18 10l-2.5 2.5"/></svg></div>
<div class="abs" style="left:1553px;top:764px;width:38px;height:75px;background:#fff;box-shadow:0 1px 4px rgba(0,0,0,0.2);border-radius:2px;z-index:3"><svg class="abs" style="left:11px;top:10px" width="16" height="16" viewBox="0 0 16 16" stroke="#555" stroke-width="2"><path d="M8 1v14M1 8h14"/></svg><div class="abs" style="left:5px;top:37px;width:28px;height:1px;background:#e6e6e6"></div><svg class="abs" style="left:11px;top:48px" width="16" height="16" viewBox="0 0 16 16" stroke="#555" stroke-width="2"><path d="M1 8h14"/></svg></div>
</body></html>
